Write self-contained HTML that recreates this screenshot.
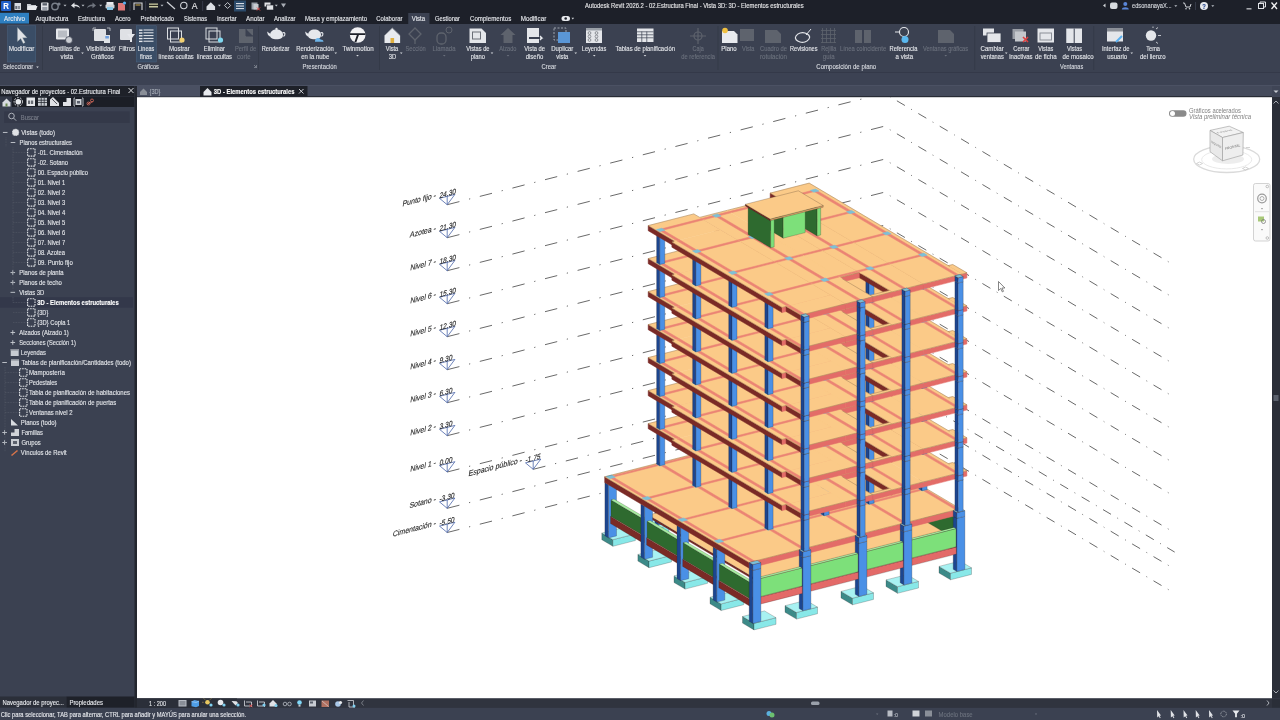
<!DOCTYPE html>
<html><head><meta charset="utf-8"><title>Revit</title>
<style>html,body{margin:0;padding:0;background:#1d2029;overflow:hidden;width:1280px;height:720px}svg{display:block;will-change:transform}text{font-family:"Liberation Sans",sans-serif}</style>
</head><body>
<svg width="1280" height="720" viewBox="0 0 1280 720" font-family="Liberation Sans, sans-serif"><rect width="1280" height="720" fill="#3b4151"/>
<rect x="0.00" y="0.00" width="1280.00" height="24.00" fill="#1d2029" />
<rect x="0.00" y="24.00" width="1280.00" height="48.50" fill="#3b4151" />
<rect x="0.00" y="72.00" width="1280.00" height="1.00" fill="#343949" />
<rect x="0.00" y="73.00" width="1280.00" height="12.00" fill="#3c4253" />
<rect x="0.00" y="85.00" width="1280.00" height="1.00" fill="#4b5163" />
<rect x="0.00" y="86.00" width="1280.00" height="11.00" fill="#444a5b" />
<text x="585.00" y="7.58" font-size="6.60" fill="#e8e8ea" stroke="#e8e8ea" stroke-width="0.12" textLength="218.75" lengthAdjust="spacingAndGlyphs">Autodesk Revit 2026.2 - 02.Estructura Final - Vista 3D: 3D - Elementos estructurales</text>
<rect x="1.00" y="1.00" width="10.00" height="10.00" fill="#1f5fc8" rx="1"/>
<text x="3.20" y="8.57" font-size="8.25" fill="#ffffff" stroke="#ffffff" stroke-width="0.12" font-weight="bold" textLength="5.60" lengthAdjust="spacingAndGlyphs">R</text>
<rect x="14.5" y="3" width="6.5" height="7" fill="#d8dbe0"/><rect x="15.5" y="6" width="1.2" height="3" fill="#3a3f4a"/><rect x="17.5" y="6" width="2.5" height="3" fill="#8a8f98"/>
<path d="M27 4h3.5l1 1h4.5v4.5h-9z" fill="#c8ccd2"/><path d="M28 6h9.5l-1.5 4h-9z" fill="#e8eaee"/>
<rect x="41" y="2.5" width="7.5" height="8" rx="0.8" fill="#e0e2e6"/><rect x="42.5" y="3.2" width="4.5" height="2.3" fill="#5a606c"/><rect x="42.3" y="7" width="5" height="3" fill="#9aa0aa"/>
<circle cx="55" cy="6.5" r="3.2" fill="none" stroke="#7a808a" stroke-width="1.4"/><circle cx="59" cy="4" r="1.6" fill="#7a808a"/>
<path d="M63.5 4.7h3l-1.5 1.8z" fill="#b8bcc4"/>
<path d="M81.5 4.7h3l-1.5 1.8z" fill="#b8bcc4"/>
<path d="M99.2 4.7h3l-1.5 1.8z" fill="#b8bcc4"/>
<path d="M160.5 4.7h3l-1.5 1.8z" fill="#b8bcc4"/>
<path d="M217.9 4.7h3l-1.5 1.8z" fill="#b8bcc4"/>
<path d="M274.8 4.7h3l-1.5 1.8z" fill="#b8bcc4"/>
<path d="M71 5.5l3.5-3v2c3 0 5 1 5.5 4-1.5-2-3-2.3-5.5-2.3v2z" fill="#e0e2e6"/>
<path d="M96 5.5l-3.5-3v2c-3 0-5 1-5.5 4 1.5-2 3-2.3 5.5-2.3v2z" fill="#6f747e"/>
<rect x="106.5" y="2" width="7" height="3" fill="#e8eaee"/><rect x="105.5" y="4.5" width="9" height="4" rx="1" fill="#d0d3d8"/><rect x="107" y="7" width="6" height="3" fill="#8ac8e8"/>
<path d="M118 3h5l2 2v5.5h-7z" fill="#e07878"/><circle cx="124.5" cy="3" r="1.6" fill="#5ab0f0"/>
<rect x="129.60" y="1.00" width="0.80" height="10.00" fill="#3c4150" />
<path d="M134 10V3h8v7" stroke="#d8d8d8" stroke-width="1.1" fill="none"/><path d="M135.5 5h5" stroke="#e8c050" stroke-width="0.9"/>
<rect x="145.30" y="1.00" width="0.80" height="10.00" fill="#3c4150" />
<rect x="149.00" y="3.50" width="9.00" height="4.00" fill="#c8c8a0" />
<rect x="149.00" y="4.80" width="9.00" height="1.20" fill="#2a2a20" />
<path d="M167 2l8 7" stroke="#d0d3d8" stroke-width="1.2"/>
<circle cx="183.8" cy="5.5" r="3.2" stroke="#d0d3d8" stroke-width="1.1" fill="none"/>
<text x="191.85" y="9.36" font-size="9.90" fill="#e8e8ea" stroke="#e8e8ea" stroke-width="0.12" textLength="5.81" lengthAdjust="spacingAndGlyphs">A</text>
<rect x="202.30" y="1.00" width="0.80" height="10.00" fill="#3c4150" />
<path d="M206.5 6.5l4.3-4.3 4.3 4.3v3.5h-8.6z" fill="#dcdfe4"/>
<path d="M227.6 2.5l3 3-3 3-3-3z" stroke="#c0c4ca" stroke-width="1" fill="none"/>
<rect x="234.00" y="0.50" width="12.00" height="11.00" fill="#2b4a6a" />
<rect x="236.00" y="3.00" width="8.00" height="1.10" fill="#d8dce4" />
<rect x="236.00" y="5.50" width="8.00" height="1.10" fill="#d8dce4" />
<rect x="236.00" y="8.00" width="8.00" height="1.10" fill="#d8dce4" />
<rect x="251.5" y="2.5" width="6" height="7" fill="#9aa0aa"/><rect x="253.5" y="4" width="5" height="5.5" fill="#c8ccd2"/><path d="M257 7.5l3 3M260 7.5l-3 3" stroke="#e04848" stroke-width="1"/>
<rect x="264.5" y="2.5" width="6" height="4" fill="#e0e2e6"/><rect x="266.5" y="5" width="7" height="5" fill="#e0e2e6" stroke="#1d2029" stroke-width="0.6"/>
<path d="M281 3.5h5l-2.5 4z" fill="#a8acb4"/>
<path d="M1105.5 3.5v4l-2.5-2z" fill="#d0d3d8"/>
<rect x="1110.00" y="2.50" width="7.50" height="6.50" fill="#d8dbe0" rx="2"/>
<circle cx="1125.3" cy="4" r="2" fill="#5a86d8"/><path d="M1121.8 9.5c0-3 7-3 7 0z" fill="#5a86d8"/>
<text x="1132.00" y="8.46" font-size="6.82" fill="#d8dbe0" stroke="#d8dbe0" stroke-width="0.12" textLength="39.60" lengthAdjust="spacingAndGlyphs">edsonanayaX...</text>
<path d="M1174.3 5.2h3l-1.5 1.8z" fill="#b8bcc4"/>
<path d="M1183 3h1.5l1.5 4h4l1-3" stroke="#d0d3d8" stroke-width="1" fill="none"/><circle cx="1186" cy="8.8" r="0.8" fill="#d0d3d8"/><circle cx="1189.5" cy="8.8" r="0.8" fill="#d0d3d8"/>
<rect x="1195.00" y="2.00" width="0.80" height="8.00" fill="#3c4150" />
<circle cx="1204" cy="6" r="4" fill="#e8eaee"/>
<text x="1202.20" y="8.77" font-size="7.15" fill="#1d3f8a" stroke="#1d3f8a" stroke-width="0.12" font-weight="bold" textLength="3.60" lengthAdjust="spacingAndGlyphs">?</text>
<path d="M1211.3 5.2h3l-1.5 1.8z" fill="#b8bcc4"/>
<rect x="1246.50" y="8.30" width="5.00" height="1.10" fill="#e0e2e6" />
<rect x="1258.5" y="3.5" width="5" height="5" stroke="#e0e2e6" stroke-width="1" fill="none"/><path d="M1260 3.5v-1.5h5.5v5h-1.5" stroke="#e0e2e6" stroke-width="1" fill="none"/>
<path d="M1271.5 2.5l5.5 6.5M1277 2.5l-5.5 6.5" stroke="#f0f0f2" stroke-width="1.3"/>
<rect x="0.00" y="12.80" width="29.00" height="10.80" fill="#2e7fc0" />
<rect x="408.25" y="13.00" width="21.25" height="11.00" fill="#3b4151" />
<text x="4.00" y="20.93" font-size="7.04" fill="#e8eaee" stroke="#e8eaee" stroke-width="0.12" textLength="21.00" lengthAdjust="spacingAndGlyphs">Archivo</text>
<text x="35.50" y="20.93" font-size="7.04" fill="#e8eaee" stroke="#e8eaee" stroke-width="0.12" textLength="33.00" lengthAdjust="spacingAndGlyphs">Arquitectura</text>
<text x="78.00" y="20.93" font-size="7.04" fill="#e8eaee" stroke="#e8eaee" stroke-width="0.12" textLength="27.00" lengthAdjust="spacingAndGlyphs">Estructura</text>
<text x="115.00" y="20.93" font-size="7.04" fill="#e8eaee" stroke="#e8eaee" stroke-width="0.12" textLength="15.50" lengthAdjust="spacingAndGlyphs">Acero</text>
<text x="140.50" y="20.93" font-size="7.04" fill="#e8eaee" stroke="#e8eaee" stroke-width="0.12" textLength="33.50" lengthAdjust="spacingAndGlyphs">Prefabricado</text>
<text x="184.00" y="20.93" font-size="7.04" fill="#e8eaee" stroke="#e8eaee" stroke-width="0.12" textLength="23.00" lengthAdjust="spacingAndGlyphs">Sistemas</text>
<text x="217.00" y="20.93" font-size="7.04" fill="#e8eaee" stroke="#e8eaee" stroke-width="0.12" textLength="19.75" lengthAdjust="spacingAndGlyphs">Insertar</text>
<text x="246.00" y="20.93" font-size="7.04" fill="#e8eaee" stroke="#e8eaee" stroke-width="0.12" textLength="18.50" lengthAdjust="spacingAndGlyphs">Anotar</text>
<text x="274.00" y="20.93" font-size="7.04" fill="#e8eaee" stroke="#e8eaee" stroke-width="0.12" textLength="21.50" lengthAdjust="spacingAndGlyphs">Analizar</text>
<text x="305.00" y="20.93" font-size="7.04" fill="#e8eaee" stroke="#e8eaee" stroke-width="0.12" textLength="62.00" lengthAdjust="spacingAndGlyphs">Masa y emplazamiento</text>
<text x="376.25" y="20.93" font-size="7.04" fill="#e8eaee" stroke="#e8eaee" stroke-width="0.12" textLength="26.25" lengthAdjust="spacingAndGlyphs">Colaborar</text>
<text x="411.75" y="20.93" font-size="7.04" fill="#e8eaee" stroke="#e8eaee" stroke-width="0.12" textLength="13.25" lengthAdjust="spacingAndGlyphs">Vista</text>
<text x="435.00" y="20.93" font-size="7.04" fill="#e8eaee" stroke="#e8eaee" stroke-width="0.12" textLength="25.00" lengthAdjust="spacingAndGlyphs">Gestionar</text>
<text x="470.00" y="20.93" font-size="7.04" fill="#e8eaee" stroke="#e8eaee" stroke-width="0.12" textLength="41.25" lengthAdjust="spacingAndGlyphs">Complementos</text>
<text x="520.75" y="20.93" font-size="7.04" fill="#e8eaee" stroke="#e8eaee" stroke-width="0.12" textLength="25.50" lengthAdjust="spacingAndGlyphs">Modificar</text>
<rect x="561.50" y="16.00" width="8.50" height="5.00" fill="#e8eaee" rx="2.5"/>
<circle cx="565.7" cy="18.5" r="1.3" fill="#1d2029"/>
<path d="M571.5 17.8h2.6l-1.3 1.6z" fill="#d0d3d8"/>
<rect x="7.50" y="25.75" width="28.25" height="36.25" fill="#3a4d66" stroke="#4a6280" stroke-width="0.5"/>
<rect x="136.25" y="25.75" width="20.00" height="36.25" fill="#3a4d66" stroke="#4a6280" stroke-width="0.5"/>
<rect x="42.00" y="26.00" width="0.90" height="44.00" fill="#343a48" />
<rect x="258.00" y="26.00" width="0.90" height="44.00" fill="#343a48" />
<rect x="379.00" y="26.00" width="0.90" height="44.00" fill="#343a48" />
<rect x="717.50" y="26.00" width="0.90" height="44.00" fill="#343a48" />
<rect x="974.25" y="26.00" width="0.90" height="44.00" fill="#343a48" />
<rect x="1093.25" y="26.00" width="0.90" height="44.00" fill="#343a48" />
<text x="8.75" y="51.19" font-size="6.93" fill="#e4e6ea" stroke="#e4e6ea" stroke-width="0.12" textLength="25.75" lengthAdjust="spacingAndGlyphs">Modificar</text>
<text x="48.75" y="51.19" font-size="6.93" fill="#e4e6ea" stroke="#e4e6ea" stroke-width="0.12" textLength="31.25" lengthAdjust="spacingAndGlyphs">Plantillas de</text>
<text x="60.61" y="58.89" font-size="6.93" fill="#e4e6ea" stroke="#e4e6ea" stroke-width="0.12" textLength="12.54" lengthAdjust="spacingAndGlyphs">vista</text>
<text x="86.25" y="51.19" font-size="6.93" fill="#e4e6ea" stroke="#e4e6ea" stroke-width="0.12" textLength="29.25" lengthAdjust="spacingAndGlyphs">Visibilidad/</text>
<text x="91.03" y="58.89" font-size="6.93" fill="#e4e6ea" stroke="#e4e6ea" stroke-width="0.12" textLength="22.70" lengthAdjust="spacingAndGlyphs">Gráficos</text>
<text x="118.75" y="51.19" font-size="6.93" fill="#e4e6ea" stroke="#e4e6ea" stroke-width="0.12" textLength="16.25" lengthAdjust="spacingAndGlyphs">Filtros</text>
<text x="137.75" y="51.19" font-size="6.93" fill="#e4e6ea" stroke="#e4e6ea" stroke-width="0.12" textLength="16.50" lengthAdjust="spacingAndGlyphs">Líneas</text>
<text x="140.00" y="58.89" font-size="6.93" fill="#e4e6ea" stroke="#e4e6ea" stroke-width="0.12" textLength="12.00" lengthAdjust="spacingAndGlyphs">finas</text>
<text x="169.04" y="51.19" font-size="6.93" fill="#e4e6ea" stroke="#e4e6ea" stroke-width="0.12" textLength="20.66" lengthAdjust="spacingAndGlyphs">Mostrar</text>
<text x="158.50" y="58.89" font-size="6.93" fill="#e4e6ea" stroke="#e4e6ea" stroke-width="0.12" textLength="35.25" lengthAdjust="spacingAndGlyphs">líneas ocultas</text>
<text x="203.75" y="51.19" font-size="6.93" fill="#e4e6ea" stroke="#e4e6ea" stroke-width="0.12" textLength="21.25" lengthAdjust="spacingAndGlyphs">Eliminar</text>
<text x="196.75" y="58.89" font-size="6.93" fill="#e4e6ea" stroke="#e4e6ea" stroke-width="0.12" textLength="35.25" lengthAdjust="spacingAndGlyphs">líneas ocultas</text>
<text x="235.00" y="51.19" font-size="6.93" fill="#6b717d" stroke="#6b717d" stroke-width="0.12" textLength="21.25" lengthAdjust="spacingAndGlyphs">Perfil de</text>
<text x="236.97" y="58.89" font-size="6.93" fill="#6b717d" stroke="#6b717d" stroke-width="0.12" textLength="13.55" lengthAdjust="spacingAndGlyphs">corte</text>
<text x="261.75" y="51.19" font-size="6.93" fill="#e4e6ea" stroke="#e4e6ea" stroke-width="0.12" textLength="27.75" lengthAdjust="spacingAndGlyphs">Renderizar</text>
<text x="296.25" y="51.19" font-size="6.93" fill="#e4e6ea" stroke="#e4e6ea" stroke-width="0.12" textLength="37.50" lengthAdjust="spacingAndGlyphs">Renderización</text>
<text x="301.25" y="58.89" font-size="6.93" fill="#e4e6ea" stroke="#e4e6ea" stroke-width="0.12" textLength="28.00" lengthAdjust="spacingAndGlyphs">en la nube</text>
<text x="342.50" y="51.19" font-size="6.93" fill="#e4e6ea" stroke="#e4e6ea" stroke-width="0.12" textLength="31.25" lengthAdjust="spacingAndGlyphs">Twinmotion</text>
<text x="385.75" y="51.19" font-size="6.93" fill="#e4e6ea" stroke="#e4e6ea" stroke-width="0.12" textLength="12.50" lengthAdjust="spacingAndGlyphs">Vista</text>
<text x="388.75" y="58.89" font-size="6.93" fill="#e4e6ea" stroke="#e4e6ea" stroke-width="0.12" textLength="7.50" lengthAdjust="spacingAndGlyphs">3D</text>
<text x="405.50" y="51.19" font-size="6.93" fill="#6b717d" stroke="#6b717d" stroke-width="0.12" textLength="20.25" lengthAdjust="spacingAndGlyphs">Sección</text>
<text x="432.50" y="51.19" font-size="6.93" fill="#6b717d" stroke="#6b717d" stroke-width="0.12" textLength="23.00" lengthAdjust="spacingAndGlyphs">Llamada</text>
<text x="466.25" y="51.19" font-size="6.93" fill="#e4e6ea" stroke="#e4e6ea" stroke-width="0.12" textLength="23.25" lengthAdjust="spacingAndGlyphs">Vistas de</text>
<text x="470.75" y="58.89" font-size="6.93" fill="#e4e6ea" stroke="#e4e6ea" stroke-width="0.12" textLength="14.25" lengthAdjust="spacingAndGlyphs">plano</text>
<text x="499.25" y="51.19" font-size="6.93" fill="#6b717d" stroke="#6b717d" stroke-width="0.12" textLength="17.25" lengthAdjust="spacingAndGlyphs">Alzado</text>
<text x="524.25" y="51.19" font-size="6.93" fill="#e4e6ea" stroke="#e4e6ea" stroke-width="0.12" textLength="20.75" lengthAdjust="spacingAndGlyphs">Vista de</text>
<text x="525.75" y="58.89" font-size="6.93" fill="#e4e6ea" stroke="#e4e6ea" stroke-width="0.12" textLength="17.50" lengthAdjust="spacingAndGlyphs">diseño</text>
<text x="551.25" y="51.19" font-size="6.93" fill="#e4e6ea" stroke="#e4e6ea" stroke-width="0.12" textLength="22.00" lengthAdjust="spacingAndGlyphs">Duplicar</text>
<text x="556.25" y="58.89" font-size="6.93" fill="#e4e6ea" stroke="#e4e6ea" stroke-width="0.12" textLength="12.00" lengthAdjust="spacingAndGlyphs">vista</text>
<text x="581.75" y="51.19" font-size="6.93" fill="#e4e6ea" stroke="#e4e6ea" stroke-width="0.12" textLength="24.50" lengthAdjust="spacingAndGlyphs">Leyendas</text>
<text x="615.50" y="51.19" font-size="6.93" fill="#e4e6ea" stroke="#e4e6ea" stroke-width="0.12" textLength="59.50" lengthAdjust="spacingAndGlyphs">Tablas de planificación</text>
<text x="692.50" y="51.19" font-size="6.93" fill="#6b717d" stroke="#6b717d" stroke-width="0.12" textLength="11.25" lengthAdjust="spacingAndGlyphs">Caja</text>
<text x="681.25" y="58.89" font-size="6.93" fill="#6b717d" stroke="#6b717d" stroke-width="0.12" textLength="33.75" lengthAdjust="spacingAndGlyphs">de referencia</text>
<text x="721.25" y="51.19" font-size="6.93" fill="#e4e6ea" stroke="#e4e6ea" stroke-width="0.12" textLength="15.50" lengthAdjust="spacingAndGlyphs">Plano</text>
<text x="742.00" y="51.19" font-size="6.93" fill="#6b717d" stroke="#6b717d" stroke-width="0.12" textLength="12.50" lengthAdjust="spacingAndGlyphs">Vista</text>
<text x="760.00" y="51.19" font-size="6.93" fill="#6b717d" stroke="#6b717d" stroke-width="0.12" textLength="27.00" lengthAdjust="spacingAndGlyphs">Cuadro de</text>
<text x="760.00" y="58.89" font-size="6.93" fill="#6b717d" stroke="#6b717d" stroke-width="0.12" textLength="27.00" lengthAdjust="spacingAndGlyphs">rotulación</text>
<text x="790.00" y="51.19" font-size="6.93" fill="#e4e6ea" stroke="#e4e6ea" stroke-width="0.12" textLength="27.50" lengthAdjust="spacingAndGlyphs">Revisiones</text>
<text x="821.25" y="51.19" font-size="6.93" fill="#6b717d" stroke="#6b717d" stroke-width="0.12" textLength="15.00" lengthAdjust="spacingAndGlyphs">Rejilla</text>
<text x="822.82" y="58.89" font-size="6.93" fill="#6b717d" stroke="#6b717d" stroke-width="0.12" textLength="11.86" lengthAdjust="spacingAndGlyphs">guía</text>
<text x="840.00" y="51.19" font-size="6.93" fill="#6b717d" stroke="#6b717d" stroke-width="0.12" textLength="46.25" lengthAdjust="spacingAndGlyphs">Línea coincidente</text>
<text x="889.50" y="51.19" font-size="6.93" fill="#e4e6ea" stroke="#e4e6ea" stroke-width="0.12" textLength="28.00" lengthAdjust="spacingAndGlyphs">Referencia</text>
<text x="895.57" y="58.89" font-size="6.93" fill="#e4e6ea" stroke="#e4e6ea" stroke-width="0.12" textLength="17.62" lengthAdjust="spacingAndGlyphs">a vista</text>
<text x="923.00" y="51.19" font-size="6.93" fill="#6b717d" stroke="#6b717d" stroke-width="0.12" textLength="45.00" lengthAdjust="spacingAndGlyphs">Ventanas gráficas</text>
<text x="980.50" y="51.19" font-size="6.93" fill="#e4e6ea" stroke="#e4e6ea" stroke-width="0.12" textLength="23.25" lengthAdjust="spacingAndGlyphs">Cambiar</text>
<text x="980.75" y="58.89" font-size="6.93" fill="#e4e6ea" stroke="#e4e6ea" stroke-width="0.12" textLength="23.00" lengthAdjust="spacingAndGlyphs">ventanas</text>
<text x="1013.25" y="51.19" font-size="6.93" fill="#e4e6ea" stroke="#e4e6ea" stroke-width="0.12" textLength="16.25" lengthAdjust="spacingAndGlyphs">Cerrar</text>
<text x="1009.25" y="58.89" font-size="6.93" fill="#e4e6ea" stroke="#e4e6ea" stroke-width="0.12" textLength="23.25" lengthAdjust="spacingAndGlyphs">inactivas</text>
<text x="1038.25" y="51.19" font-size="6.93" fill="#e4e6ea" stroke="#e4e6ea" stroke-width="0.12" textLength="15.00" lengthAdjust="spacingAndGlyphs">Vistas</text>
<text x="1035.00" y="58.89" font-size="6.93" fill="#e4e6ea" stroke="#e4e6ea" stroke-width="0.12" textLength="21.75" lengthAdjust="spacingAndGlyphs">de ficha</text>
<text x="1067.00" y="51.19" font-size="6.93" fill="#e4e6ea" stroke="#e4e6ea" stroke-width="0.12" textLength="15.00" lengthAdjust="spacingAndGlyphs">Vistas</text>
<text x="1062.54" y="58.89" font-size="6.93" fill="#e4e6ea" stroke="#e4e6ea" stroke-width="0.12" textLength="31.18" lengthAdjust="spacingAndGlyphs">de mosaico</text>
<text x="1102.00" y="51.19" font-size="6.93" fill="#e4e6ea" stroke="#e4e6ea" stroke-width="0.12" textLength="27.50" lengthAdjust="spacingAndGlyphs">Interfaz de</text>
<text x="1107.25" y="58.89" font-size="6.93" fill="#e4e6ea" stroke="#e4e6ea" stroke-width="0.12" textLength="19.99" lengthAdjust="spacingAndGlyphs">usuario</text>
<text x="1146.25" y="51.19" font-size="6.93" fill="#e4e6ea" stroke="#e4e6ea" stroke-width="0.12" textLength="13.75" lengthAdjust="spacingAndGlyphs">Tema</text>
<text x="1140.00" y="58.89" font-size="6.93" fill="#e4e6ea" stroke="#e4e6ea" stroke-width="0.12" textLength="25.50" lengthAdjust="spacingAndGlyphs">del lienzo</text>
<text x="3.00" y="69.09" font-size="6.93" fill="#d8dbe0" stroke="#d8dbe0" stroke-width="0.12" textLength="30.25" lengthAdjust="spacingAndGlyphs">Seleccionar</text>
<text x="137.50" y="69.09" font-size="6.93" fill="#d8dbe0" stroke="#d8dbe0" stroke-width="0.12" textLength="21.50" lengthAdjust="spacingAndGlyphs">Gráficos</text>
<text x="302.50" y="69.09" font-size="6.93" fill="#d8dbe0" stroke="#d8dbe0" stroke-width="0.12" textLength="34.25" lengthAdjust="spacingAndGlyphs">Presentación</text>
<text x="541.50" y="69.09" font-size="6.93" fill="#d8dbe0" stroke="#d8dbe0" stroke-width="0.12" textLength="14.75" lengthAdjust="spacingAndGlyphs">Crear</text>
<text x="816.25" y="69.09" font-size="6.93" fill="#d8dbe0" stroke="#d8dbe0" stroke-width="0.12" textLength="60.00" lengthAdjust="spacingAndGlyphs">Composición de plano</text>
<text x="1060.00" y="69.09" font-size="6.93" fill="#d8dbe0" stroke="#d8dbe0" stroke-width="0.12" textLength="23.25" lengthAdjust="spacingAndGlyphs">Ventanas</text>
<path d="M36.20 66.40h2.6l-1.3 1.5z" fill="#d8dbe0"/>
<path d="M81.20 52.40h2.6l-1.3 1.5z" fill="#d8dbe0"/>
<path d="M334.45 52.40h2.6l-1.3 1.5z" fill="#d8dbe0"/>
<path d="M399.95 52.40h2.6l-1.3 1.5z" fill="#d8dbe0"/>
<path d="M490.70 52.40h2.6l-1.3 1.5z" fill="#d8dbe0"/>
<path d="M574.45 52.40h2.6l-1.3 1.5z" fill="#d8dbe0"/>
<path d="M1004.95 52.40h2.6l-1.3 1.5z" fill="#d8dbe0"/>
<path d="M1130.45 52.40h2.6l-1.3 1.5z" fill="#d8dbe0"/>
<path d="M356.20 54.90h2.6l-1.3 1.5z" fill="#d8dbe0"/>
<path d="M442.95 54.90h2.6l-1.3 1.5z" fill="#6b717d"/>
<path d="M506.70 54.90h2.6l-1.3 1.5z" fill="#6b717d"/>
<path d="M592.95 54.90h2.6l-1.3 1.5z" fill="#d8dbe0"/>
<path d="M643.70 54.90h2.6l-1.3 1.5z" fill="#d8dbe0"/>
<path d="M944.45 54.90h2.6l-1.3 1.5z" fill="#6b717d"/>
<path d="M254 65l2.5 2.5M256.5 65v2.5h-2.5" stroke="#9aa0aa" stroke-width="0.6" fill="none"/>
<path d="M17.5 27.5v14l3.2-3 2.6 5 1.8-1-2.5-4.8h4.4z" fill="#dfe2e6" stroke="#9aa" stroke-width="0.3"/>
<rect x="56" y="28.5" width="13" height="11" fill="#e6e8ec" rx="1"/><rect x="58" y="30.5" width="9" height="7" fill="#b9bdc4"/><circle cx="69" cy="40" r="3.5" fill="#c9ccd2" stroke="#3b4151" stroke-width="0.8"/>
<rect x="94" y="29" width="12" height="12" fill="#dfe1e5" rx="1"/><rect x="104" y="35" width="6" height="8" fill="#dfe2e6"/><rect x="105.3" y="36" width="3.6" height="2.5" fill="#6fa0e0"/>
<path d="M93 28v3M93 28h3M107 28h3v3" stroke="#c8ccd2" stroke-width="0.8" fill="none"/>
<rect x="120" y="29" width="12" height="11" fill="#dfe1e5" rx="1"/><path d="M127 34h8l-3 4v4h-2v-4z" fill="#e6e8ec"/>
<rect x="139.00" y="29.50" width="3.50" height="1.40" fill="#e8eaee" />
<rect x="143.50" y="29.50" width="10.00" height="1.00" fill="#e8eaee" />
<rect x="139.00" y="32.30" width="3.50" height="1.40" fill="#e8eaee" />
<rect x="143.50" y="32.30" width="10.00" height="1.00" fill="#e8eaee" />
<rect x="139.00" y="35.10" width="3.50" height="1.40" fill="#e8eaee" />
<rect x="143.50" y="35.10" width="10.00" height="1.00" fill="#e8eaee" />
<rect x="139.00" y="37.90" width="3.50" height="1.40" fill="#e8eaee" />
<rect x="143.50" y="37.90" width="10.00" height="1.00" fill="#e8eaee" />
<rect x="139.00" y="40.70" width="3.50" height="1.40" fill="#e8eaee" />
<rect x="143.50" y="40.70" width="10.00" height="1.00" fill="#e8eaee" />
<rect x="167.5" y="28" width="11" height="11" fill="none" stroke="#dcdfe3" stroke-width="1"/><rect x="170.5" y="31" width="11" height="11" fill="none" stroke="#dcdfe3" stroke-width="1"/><circle cx="182" cy="40" r="2.6" fill="#f2d070"/>
<rect x="206" y="28" width="11" height="11" fill="none" stroke="#dcdfe3" stroke-width="1"/><rect x="209" y="31" width="11" height="11" fill="none" stroke="#dcdfe3" stroke-width="1"/><circle cx="220.5" cy="40" r="2.6" fill="#7fd8f0"/>
<path d="M239 29h14v14h-14zM246 29v7h7" fill="#5e636d"/><path d="M246 29v7h7" stroke="#3b4151" stroke-width="1" fill="none"/>
<path d="M270 35c0-3.5 3-5.5 6.5-5.5s6.5 2 6.5 5.5c0 3-2.5 4.2-6.5 4.2s-6.5-1.2-6.5-4.2z" fill="#e6e8ec"/><path d="M270.5 34l-3.5-2.5 1 3.5 2.5 2" fill="#e6e8ec"/><path d="M282.5 33c2.5-1.5 3.5 1.5 1 3.5" stroke="#e6e8ec" stroke-width="1.1" fill="none"/><circle cx="276.5" cy="29" r="1.2" fill="#e6e8ec"/>
<path d="M308 35c0-3.5 3-5.5 6.5-5.5s6.5 2 6.5 5.5c0 3-2.5 4.2-6.5 4.2s-6.5-1.2-6.5-4.2z" fill="#e6e8ec"/><path d="M308.5 34l-3.5-2.5 1 3.5 2.5 2" fill="#e6e8ec"/><path d="M320.5 33c2.5-1.5 3.5 1.5 1 3.5" stroke="#e6e8ec" stroke-width="1.1" fill="none"/><path d="M315 41c0-2 1.5-3 3-3 1 0 2 .5 2.5 1.5 1.5 0 3 .7 3 2.2h-8.5z" fill="#6db4e8"/>
<circle cx="357.7" cy="35" r="7.8" fill="#f2f2f4"/><path d="M350 33.2h15.4v1.8h-6.5l-2.5 7h-2l2.5-7h-6.9z" fill="#1d2029"/>
<path d="M384.5 35.5l7.8-7.5 7.8 7.5v7.5h-15.6z" fill="#e8eaee"/><path d="M384.5 35.5l7.8-7.5 7.8 7.5" stroke="#8a8f98" stroke-width="0.8" fill="none"/><rect x="390.5" y="38" width="3.6" height="5" fill="#e0b040"/>
<path d="M415 28l6 6-6 6-6-6z" stroke="#5e636d" stroke-width="1.3" fill="none"/><path d="M415 40v4" stroke="#5e636d" stroke-width="1.3"/>
<rect x="437" y="33" width="9" height="11" rx="4" stroke="#5e636d" stroke-width="1.3" fill="none"/><circle cx="449" cy="30" r="3" stroke="#5e636d" stroke-width="1" fill="none"/>
<path d="M469.5 28.5h12l4.5 4.5v10h-16.5z" fill="#e4e6ea"/><rect x="472.5" y="32" width="8" height="7" fill="none" stroke="#6a6e76" stroke-width="1"/>
<path d="M500.5 35l7.5-7 7.5 7h-3v8h-9v-8z" fill="#5e636d"/>
<rect x="527" y="28" width="12" height="15" fill="#e4e6ea"/><path d="M530 38h12l-2-2M542 38l-2 2" stroke="#e8eaee" stroke-width="1.2" fill="none"/><rect x="529" y="37" width="11" height="2" fill="#3b4151"/>
<rect x="554" y="28" width="12" height="12" fill="none" stroke="#aab0ba" stroke-width="0.9" stroke-dasharray="2 1.5"/><rect x="558" y="32" width="12" height="11" fill="#5a96d6"/>
<rect x="586" y="28" width="16" height="15" fill="#e4e6ea"/><rect x="586" y="28" width="16" height="2.5" fill="#9aa0a8"/>
<circle cx="589.5" cy="33.0" r="1.4" fill="none" stroke="#6a6e76" stroke-width="0.7"/>
<circle cx="589.5" cy="36.5" r="1.4" fill="none" stroke="#6a6e76" stroke-width="0.7"/>
<circle cx="589.5" cy="40.0" r="1.4" fill="none" stroke="#6a6e76" stroke-width="0.7"/>
<circle cx="596.5" cy="33.0" r="1.4" fill="none" stroke="#6a6e76" stroke-width="0.7"/>
<circle cx="596.5" cy="36.5" r="1.4" fill="none" stroke="#6a6e76" stroke-width="0.7"/>
<circle cx="596.5" cy="40.0" r="1.4" fill="none" stroke="#6a6e76" stroke-width="0.7"/>
<rect x="637" y="28.5" width="16.5" height="13.5" fill="#e4e6ea"/>
<rect x="637.00" y="31.50" width="16.50" height="0.70" fill="#3b4151" />
<rect x="637.00" y="34.50" width="16.50" height="0.70" fill="#3b4151" />
<rect x="637.00" y="37.50" width="16.50" height="0.70" fill="#3b4151" />
<rect x="641.50" y="31.50" width="0.70" height="10.50" fill="#3b4151" />
<rect x="646.50" y="31.50" width="0.70" height="10.50" fill="#3b4151" />
<path d="M698 28v16M690 36h16" stroke="#5e636d" stroke-width="1.2"/><circle cx="698" cy="36" r="4" stroke="#5e636d" stroke-width="1.2" fill="none"/>
<path d="M722 31h12l3.5 3.5v8.5h-15.5z" fill="#e8eaee"/><circle cx="725" cy="30.5" r="2.8" fill="#f0c040"/>
<rect x="740" y="29" width="14" height="12" fill="#5e636d"/>
<path d="M765 30h12l4 4v9h-16z" fill="#5e636d"/>
<path d="M796 36c2-3 6-4 9-3s6 3 4 6-6 4-9 3-6-3-4-6z" stroke="#e4e6ea" stroke-width="1.2" fill="none"/><path d="M806 35l5-6" stroke="#e4e6ea" stroke-width="1"/>
<rect x="822.00" y="28.00" width="0.80" height="15.00" fill="#5e636d" />
<rect x="821.00" y="30.00" width="15.00" height="0.80" fill="#5e636d" />
<rect x="826.00" y="28.00" width="0.80" height="15.00" fill="#5e636d" />
<rect x="821.00" y="34.00" width="15.00" height="0.80" fill="#5e636d" />
<rect x="830.00" y="28.00" width="0.80" height="15.00" fill="#5e636d" />
<rect x="821.00" y="38.00" width="15.00" height="0.80" fill="#5e636d" />
<rect x="834.00" y="28.00" width="0.80" height="15.00" fill="#5e636d" />
<rect x="821.00" y="42.00" width="15.00" height="0.80" fill="#5e636d" />
<path d="M855 30h7v13h-7zM864 30h7v13h-7z" fill="#5e636d"/>
<circle cx="904" cy="32" r="4.5" stroke="#e4e6ea" stroke-width="1.1" fill="none"/><path d="M895 32h5" stroke="#e4e6ea" stroke-width="1"/><circle cx="905" cy="39.5" r="3.5" fill="#5ab8f0"/>
<path d="M938 30h12l4 4v9h-16z" fill="#5e636d"/>
<rect x="983" y="28.5" width="11" height="7" fill="#e4e6ea"/><rect x="987" y="33" width="14" height="9.5" fill="#e4e6ea" stroke="#3b4151" stroke-width="0.8"/>
<rect x="1012.5" y="29" width="11" height="10" fill="#9a9ea6"/><rect x="1015" y="31.5" width="11" height="10" fill="#c4c7cc"/><path d="M1023 37l5 5M1028 37l-5 5" stroke="#e04040" stroke-width="1.6"/>
<rect x="1037.5" y="28.5" width="16.5" height="14" fill="#e4e6ea"/><rect x="1039.5" y="32.5" width="12.5" height="8" fill="#8a8e96"/><rect x="1040.5" y="33.5" width="10.5" height="6" fill="#e4e6ea"/>
<rect x="1066.25" y="28.5" width="15.75" height="14.5" fill="#e4e6ea"/><rect x="1073.7" y="28.5" width="1" height="14.5" fill="#3b4151"/>
<rect x="1107" y="28.5" width="16" height="13" fill="#e4e6ea"/><rect x="1107" y="28.5" width="16" height="3" fill="#8a8e96"/><path d="M1116 42l6-6" stroke="#5ab0f0" stroke-width="2"/>
<circle cx="1151" cy="35.5" r="5.2" fill="#e4e6ea"/><path d="M1156 29l2-1.5M1158 35.5h3M1156 42l2 1.5M1153 28v-1.5" stroke="#e4e6ea" stroke-width="0.8"/>
<rect x="0.00" y="86.00" width="134.50" height="10.50" fill="#1e2129" />
<text x="1.20" y="93.66" font-size="6.82" fill="#eceef2" stroke="#eceef2" stroke-width="0.12" textLength="119.10" lengthAdjust="spacingAndGlyphs">Navegador de proyectos - 02.Estructura Final</text>
<path d="M128.5 88l5 5M133.5 88l-5 5" stroke="#e0e2e6" stroke-width="1"/>
<rect x="0.00" y="96.50" width="134.50" height="10.50" fill="#1b1e26" />
<rect x="0.00" y="96.50" width="12.00" height="10.50" fill="#353a48" />
<path d="M2.5 102.5l4-4 4 4v4h-8z" fill="#d8dbe0"/><rect x="5.5" y="103.5" width="2" height="3" fill="#6a8a50"/>
<circle cx="18.3" cy="101.8" r="2.8" fill="#e8eaee"/><circle cx="18.3" cy="101.8" r="4.2" fill="none" stroke="#e0e2e6" stroke-width="1" stroke-dasharray="1.8 1.2"/>
<rect x="26.50" y="97.50" width="8.50" height="8.50" fill="#e6e8ec" />
<rect x="28.00" y="100.50" width="2.20" height="3.50" fill="#6a6e76" />
<rect x="31.00" y="100.50" width="2.20" height="3.50" fill="#6a6e76" />
<rect x="38.00" y="97.80" width="9.00" height="8.00" fill="#c8ccd2" />
<rect x="38.00" y="99.80" width="9.00" height="0.70" fill="#1b1e26" />
<rect x="38.00" y="102.30" width="9.00" height="0.70" fill="#1b1e26" />
<rect x="40.80" y="97.80" width="0.70" height="8.00" fill="#1b1e26" />
<rect x="43.80" y="97.80" width="0.70" height="8.00" fill="#1b1e26" />
<path d="M50 106v-6.5l3-2.5 6 6v3z" fill="#e0e2e6"/><path d="M52 99l5 5" stroke="#1b1e26" stroke-width="0.7"/>
<rect x="63.00" y="98.00" width="8.00" height="8.00" fill="#e0e2e6" />
<rect x="63.00" y="98.00" width="3.50" height="4.00" fill="#1b1e26" />
<path d="M75 98h-1v8h1M82 98h1v8h-1" stroke="#c8ccd2" stroke-width="0.9" fill="none"/><rect x="75.5" y="99" width="6" height="6" fill="#d0d3d8"/><rect x="77" y="101" width="3" height="2.5" fill="#5a606c"/>
<path d="M87.5 104.5l2.5-2.5M90 103.5l2.5-2.5" stroke="#d86a5a" stroke-width="1"/><circle cx="88.5" cy="103.5" r="1.5" fill="none" stroke="#d86a5a" stroke-width="0.8"/><circle cx="92" cy="100.5" r="1.5" fill="none" stroke="#d86a5a" stroke-width="0.8"/>
<rect x="0.00" y="107.00" width="134.50" height="589.50" fill="#3b4151" />
<rect x="4.20" y="111.40" width="125.50" height="11.60" fill="#343949" />
<circle cx="11.5" cy="116" r="2.8" stroke="#b8bcc4" stroke-width="0.9" fill="none"/><path d="M13.5 118l2.7 2.7" stroke="#b8bcc4" stroke-width="0.9"/>
<text x="20.75" y="119.58" font-size="6.60" fill="#7a7f8a" stroke="#7a7f8a" stroke-width="0.12" textLength="18.25" lengthAdjust="spacingAndGlyphs">Buscar</text>
<circle cx="15.6" cy="132.4" r="3.6" fill="#e0e2e6" stroke="#3b4151" stroke-width="0.6" stroke-dasharray="1.5 1"/>
<rect x="2.90" y="131.95" width="4.60" height="0.90" fill="#c8ccd2" />
<text x="21.20" y="134.86" font-size="6.82" fill="#e4e6ea" stroke="#e4e6ea" stroke-width="0.12" textLength="33.80" lengthAdjust="spacingAndGlyphs">Vistas (todo)</text>
<rect x="10.70" y="142.05" width="4.60" height="0.90" fill="#c8ccd2" />
<text x="19.60" y="144.96" font-size="6.82" fill="#e4e6ea" stroke="#e4e6ea" stroke-width="0.12" textLength="52.40" lengthAdjust="spacingAndGlyphs">Planos estructurales</text>
<path d="M13.0 152.4H27.0" stroke="#5a606c" stroke-width="0.6" stroke-dasharray="0.8 0.8"/>
<rect x="27.6" y="148.7" width="7.4" height="7.4" fill="none" stroke="#e2e4e8" stroke-width="1.1" stroke-dasharray="1.6 0.9"/>
<text x="37.70" y="154.86" font-size="6.82" fill="#e4e6ea" stroke="#e4e6ea" stroke-width="0.12" textLength="44.80" lengthAdjust="spacingAndGlyphs">-01. Cimentación</text>
<path d="M13.0 162.4H27.0" stroke="#5a606c" stroke-width="0.6" stroke-dasharray="0.8 0.8"/>
<rect x="27.6" y="158.7" width="7.4" height="7.4" fill="none" stroke="#e2e4e8" stroke-width="1.1" stroke-dasharray="1.6 0.9"/>
<text x="37.70" y="164.86" font-size="6.82" fill="#e4e6ea" stroke="#e4e6ea" stroke-width="0.12" textLength="30.30" lengthAdjust="spacingAndGlyphs">-02. Sotano</text>
<path d="M13.0 172.4H27.0" stroke="#5a606c" stroke-width="0.6" stroke-dasharray="0.8 0.8"/>
<rect x="27.6" y="168.7" width="7.4" height="7.4" fill="none" stroke="#e2e4e8" stroke-width="1.1" stroke-dasharray="1.6 0.9"/>
<text x="37.70" y="174.86" font-size="6.82" fill="#e4e6ea" stroke="#e4e6ea" stroke-width="0.12" textLength="50.30" lengthAdjust="spacingAndGlyphs">00. Espacio público</text>
<path d="M13.0 182.4H27.0" stroke="#5a606c" stroke-width="0.6" stroke-dasharray="0.8 0.8"/>
<rect x="27.6" y="178.7" width="7.4" height="7.4" fill="none" stroke="#e2e4e8" stroke-width="1.1" stroke-dasharray="1.6 0.9"/>
<text x="37.70" y="184.86" font-size="6.82" fill="#e4e6ea" stroke="#e4e6ea" stroke-width="0.12" textLength="27.60" lengthAdjust="spacingAndGlyphs">01. Nivel 1</text>
<path d="M13.0 192.4H27.0" stroke="#5a606c" stroke-width="0.6" stroke-dasharray="0.8 0.8"/>
<rect x="27.6" y="188.7" width="7.4" height="7.4" fill="none" stroke="#e2e4e8" stroke-width="1.1" stroke-dasharray="1.6 0.9"/>
<text x="37.70" y="194.86" font-size="6.82" fill="#e4e6ea" stroke="#e4e6ea" stroke-width="0.12" textLength="27.60" lengthAdjust="spacingAndGlyphs">02. Nivel 2</text>
<path d="M13.0 202.4H27.0" stroke="#5a606c" stroke-width="0.6" stroke-dasharray="0.8 0.8"/>
<rect x="27.6" y="198.7" width="7.4" height="7.4" fill="none" stroke="#e2e4e8" stroke-width="1.1" stroke-dasharray="1.6 0.9"/>
<text x="37.70" y="204.86" font-size="6.82" fill="#e4e6ea" stroke="#e4e6ea" stroke-width="0.12" textLength="27.60" lengthAdjust="spacingAndGlyphs">03. Nivel 3</text>
<path d="M13.0 212.4H27.0" stroke="#5a606c" stroke-width="0.6" stroke-dasharray="0.8 0.8"/>
<rect x="27.6" y="208.7" width="7.4" height="7.4" fill="none" stroke="#e2e4e8" stroke-width="1.1" stroke-dasharray="1.6 0.9"/>
<text x="37.70" y="214.86" font-size="6.82" fill="#e4e6ea" stroke="#e4e6ea" stroke-width="0.12" textLength="27.60" lengthAdjust="spacingAndGlyphs">04. Nivel 4</text>
<path d="M13.0 222.4H27.0" stroke="#5a606c" stroke-width="0.6" stroke-dasharray="0.8 0.8"/>
<rect x="27.6" y="218.7" width="7.4" height="7.4" fill="none" stroke="#e2e4e8" stroke-width="1.1" stroke-dasharray="1.6 0.9"/>
<text x="37.70" y="224.86" font-size="6.82" fill="#e4e6ea" stroke="#e4e6ea" stroke-width="0.12" textLength="27.60" lengthAdjust="spacingAndGlyphs">05. Nivel 5</text>
<path d="M13.0 232.4H27.0" stroke="#5a606c" stroke-width="0.6" stroke-dasharray="0.8 0.8"/>
<rect x="27.6" y="228.7" width="7.4" height="7.4" fill="none" stroke="#e2e4e8" stroke-width="1.1" stroke-dasharray="1.6 0.9"/>
<text x="37.70" y="234.86" font-size="6.82" fill="#e4e6ea" stroke="#e4e6ea" stroke-width="0.12" textLength="27.60" lengthAdjust="spacingAndGlyphs">06. Nivel 6</text>
<path d="M13.0 242.4H27.0" stroke="#5a606c" stroke-width="0.6" stroke-dasharray="0.8 0.8"/>
<rect x="27.6" y="238.7" width="7.4" height="7.4" fill="none" stroke="#e2e4e8" stroke-width="1.1" stroke-dasharray="1.6 0.9"/>
<text x="37.70" y="244.86" font-size="6.82" fill="#e4e6ea" stroke="#e4e6ea" stroke-width="0.12" textLength="27.60" lengthAdjust="spacingAndGlyphs">07. Nivel 7</text>
<path d="M13.0 252.4H27.0" stroke="#5a606c" stroke-width="0.6" stroke-dasharray="0.8 0.8"/>
<rect x="27.6" y="248.7" width="7.4" height="7.4" fill="none" stroke="#e2e4e8" stroke-width="1.1" stroke-dasharray="1.6 0.9"/>
<text x="37.70" y="254.86" font-size="6.82" fill="#e4e6ea" stroke="#e4e6ea" stroke-width="0.12" textLength="27.30" lengthAdjust="spacingAndGlyphs">08. Azotea</text>
<path d="M13.0 262.4H27.0" stroke="#5a606c" stroke-width="0.6" stroke-dasharray="0.8 0.8"/>
<rect x="27.6" y="258.7" width="7.4" height="7.4" fill="none" stroke="#e2e4e8" stroke-width="1.1" stroke-dasharray="1.6 0.9"/>
<text x="37.70" y="264.86" font-size="6.82" fill="#e4e6ea" stroke="#e4e6ea" stroke-width="0.12" textLength="35.10" lengthAdjust="spacingAndGlyphs">09. Punto fijo</text>
<rect x="10.50" y="272.15" width="4.60" height="0.90" fill="#c8ccd2" />
<rect x="12.35" y="270.30" width="0.90" height="4.60" fill="#c8ccd2" />
<text x="19.30" y="275.06" font-size="6.82" fill="#e4e6ea" stroke="#e4e6ea" stroke-width="0.12" textLength="44.30" lengthAdjust="spacingAndGlyphs">Planos de planta</text>
<rect x="10.50" y="281.95" width="4.60" height="0.90" fill="#c8ccd2" />
<rect x="12.35" y="280.10" width="0.90" height="4.60" fill="#c8ccd2" />
<text x="19.30" y="284.86" font-size="6.82" fill="#e4e6ea" stroke="#e4e6ea" stroke-width="0.12" textLength="42.50" lengthAdjust="spacingAndGlyphs">Planos de techo</text>
<rect x="10.50" y="291.85" width="4.60" height="0.90" fill="#c8ccd2" />
<text x="19.30" y="294.76" font-size="6.82" fill="#e4e6ea" stroke="#e4e6ea" stroke-width="0.12" textLength="25.00" lengthAdjust="spacingAndGlyphs">Vistas 3D</text>
<rect x="0.00" y="297.20" width="133.00" height="10.40" fill="#33384a" />
<path d="M13.0 302.5H27.0" stroke="#5a606c" stroke-width="0.6" stroke-dasharray="0.8 0.8"/>
<rect x="27.6" y="298.8" width="7.4" height="7.4" fill="none" stroke="#e2e4e8" stroke-width="1.1" stroke-dasharray="1.6 0.9"/>
<text x="37.30" y="304.96" font-size="6.82" fill="#ffffff" stroke="#ffffff" stroke-width="0.12" font-weight="bold" textLength="81.40" lengthAdjust="spacingAndGlyphs">3D - Elementos estructurales</text>
<path d="M13.0 312.4H27.0" stroke="#5a606c" stroke-width="0.6" stroke-dasharray="0.8 0.8"/>
<rect x="27.6" y="308.7" width="7.4" height="7.4" fill="none" stroke="#e2e4e8" stroke-width="1.1" stroke-dasharray="1.6 0.9"/>
<text x="37.30" y="314.86" font-size="6.82" fill="#e4e6ea" stroke="#e4e6ea" stroke-width="0.12" textLength="11.00" lengthAdjust="spacingAndGlyphs">{3D}</text>
<path d="M13.0 322.5H27.0" stroke="#5a606c" stroke-width="0.6" stroke-dasharray="0.8 0.8"/>
<rect x="27.6" y="318.8" width="7.4" height="7.4" fill="none" stroke="#e2e4e8" stroke-width="1.1" stroke-dasharray="1.6 0.9"/>
<text x="37.30" y="324.96" font-size="6.82" fill="#e4e6ea" stroke="#e4e6ea" stroke-width="0.12" textLength="33.00" lengthAdjust="spacingAndGlyphs">{3D} Copia 1</text>
<rect x="10.50" y="332.05" width="4.60" height="0.90" fill="#c8ccd2" />
<rect x="12.35" y="330.20" width="0.90" height="4.60" fill="#c8ccd2" />
<text x="19.30" y="334.96" font-size="6.82" fill="#e4e6ea" stroke="#e4e6ea" stroke-width="0.12" textLength="49.50" lengthAdjust="spacingAndGlyphs">Alzados (Alzado 1)</text>
<rect x="10.50" y="342.05" width="4.60" height="0.90" fill="#c8ccd2" />
<rect x="12.35" y="340.20" width="0.90" height="4.60" fill="#c8ccd2" />
<text x="19.30" y="344.96" font-size="6.82" fill="#e4e6ea" stroke="#e4e6ea" stroke-width="0.12" textLength="56.50" lengthAdjust="spacingAndGlyphs">Secciones (Sección 1)</text>
<rect x="10.7" y="349.0" width="8" height="7" fill="#c8ccd2"/><rect x="10.7" y="349.0" width="8" height="1.6" fill="#8a8f98"/>
<text x="20.80" y="354.96" font-size="6.82" fill="#e4e6ea" stroke="#e4e6ea" stroke-width="0.12" textLength="25.10" lengthAdjust="spacingAndGlyphs">Leyendas</text>
<rect x="2.30" y="362.05" width="4.60" height="0.90" fill="#c8ccd2" />
<rect x="11.0" y="359.0" width="8" height="7" fill="#c8ccd2"/><rect x="11.0" y="359.0" width="8" height="1.6" fill="#8a8f98"/>
<text x="21.40" y="364.96" font-size="6.82" fill="#e4e6ea" stroke="#e4e6ea" stroke-width="0.12" textLength="109.50" lengthAdjust="spacingAndGlyphs">Tablas de planificación/Cantidades (todo)</text>
<path d="M5.0 372.5H19.0" stroke="#5a606c" stroke-width="0.6" stroke-dasharray="0.8 0.8"/>
<rect x="19.6" y="368.8" width="7.4" height="7.4" fill="none" stroke="#e2e4e8" stroke-width="1.1" stroke-dasharray="1.6 0.9"/>
<text x="29.00" y="374.96" font-size="6.82" fill="#e4e6ea" stroke="#e4e6ea" stroke-width="0.12" textLength="35.80" lengthAdjust="spacingAndGlyphs">Mampostería</text>
<path d="M5.0 382.5H19.0" stroke="#5a606c" stroke-width="0.6" stroke-dasharray="0.8 0.8"/>
<rect x="19.6" y="378.8" width="7.4" height="7.4" fill="none" stroke="#e2e4e8" stroke-width="1.1" stroke-dasharray="1.6 0.9"/>
<text x="29.00" y="384.96" font-size="6.82" fill="#e4e6ea" stroke="#e4e6ea" stroke-width="0.12" textLength="28.20" lengthAdjust="spacingAndGlyphs">Pedestales</text>
<path d="M5.0 392.5H19.0" stroke="#5a606c" stroke-width="0.6" stroke-dasharray="0.8 0.8"/>
<rect x="19.6" y="388.8" width="7.4" height="7.4" fill="none" stroke="#e2e4e8" stroke-width="1.1" stroke-dasharray="1.6 0.9"/>
<text x="29.00" y="394.96" font-size="6.82" fill="#e4e6ea" stroke="#e4e6ea" stroke-width="0.12" textLength="101.00" lengthAdjust="spacingAndGlyphs">Tabla de planificación de habitaciones</text>
<path d="M5.0 402.5H19.0" stroke="#5a606c" stroke-width="0.6" stroke-dasharray="0.8 0.8"/>
<rect x="19.6" y="398.8" width="7.4" height="7.4" fill="none" stroke="#e2e4e8" stroke-width="1.1" stroke-dasharray="1.6 0.9"/>
<text x="29.00" y="404.96" font-size="6.82" fill="#e4e6ea" stroke="#e4e6ea" stroke-width="0.12" textLength="87.20" lengthAdjust="spacingAndGlyphs">Tabla de planificación de puertas</text>
<path d="M5.0 412.5H19.0" stroke="#5a606c" stroke-width="0.6" stroke-dasharray="0.8 0.8"/>
<rect x="19.6" y="408.8" width="7.4" height="7.4" fill="none" stroke="#e2e4e8" stroke-width="1.1" stroke-dasharray="1.6 0.9"/>
<text x="29.00" y="414.96" font-size="6.82" fill="#e4e6ea" stroke="#e4e6ea" stroke-width="0.12" textLength="43.50" lengthAdjust="spacingAndGlyphs">Ventanas nivel 2</text>
<path d="M11 425.5v-6.5l7 6.5z" fill="#d8dbe0"/>
<text x="20.80" y="424.96" font-size="6.82" fill="#e4e6ea" stroke="#e4e6ea" stroke-width="0.12" textLength="35.80" lengthAdjust="spacingAndGlyphs">Planos (todo)</text>
<rect x="2.30" y="432.05" width="4.60" height="0.90" fill="#c8ccd2" />
<rect x="4.15" y="430.20" width="0.90" height="4.60" fill="#c8ccd2" />
<rect x="11.00" y="429.00" width="8.00" height="7.00" fill="#d0d3d8" />
<rect x="11.00" y="429.00" width="3.50" height="3.50" fill="#3b4151" />
<text x="21.40" y="434.96" font-size="6.82" fill="#e4e6ea" stroke="#e4e6ea" stroke-width="0.12" textLength="21.40" lengthAdjust="spacingAndGlyphs">Familias</text>
<rect x="2.30" y="442.05" width="4.60" height="0.90" fill="#c8ccd2" />
<rect x="4.15" y="440.20" width="0.90" height="4.60" fill="#c8ccd2" />
<rect x="11.00" y="439.00" width="8.00" height="7.00" fill="#c8ccd2" />
<rect x="13.00" y="441.00" width="4.00" height="3.00" fill="#5a606c" />
<text x="21.40" y="444.96" font-size="6.82" fill="#e4e6ea" stroke="#e4e6ea" stroke-width="0.12" textLength="19.30" lengthAdjust="spacingAndGlyphs">Grupos</text>
<path d="M11.5 455.5l6-5" stroke="#d8744a" stroke-width="1.5"/>
<text x="20.80" y="454.96" font-size="6.82" fill="#e4e6ea" stroke="#e4e6ea" stroke-width="0.12" textLength="45.90" lengthAdjust="spacingAndGlyphs">Vínculos de Revit</text>
<path d="M6 137.5V147M13 147.5V292M13 297V302.5M5 367V452" stroke="#5a606c" stroke-width="0.6" stroke-dasharray="0.8 0.8"/>
<rect x="0.00" y="696.50" width="66.40" height="11.30" fill="#2b2f39" />
<rect x="66.40" y="696.50" width="68.30" height="11.30" fill="#1e2129" />
<text x="2.50" y="705.06" font-size="6.82" fill="#e8eaee" stroke="#e8eaee" stroke-width="0.12" textLength="61.50" lengthAdjust="spacingAndGlyphs">Navegador de proyec...</text>
<text x="69.40" y="705.06" font-size="6.82" fill="#e8eaee" stroke="#e8eaee" stroke-width="0.12" textLength="33.60" lengthAdjust="spacingAndGlyphs">Propiedades</text>
<rect x="134.50" y="86.00" width="2.50" height="622.00" fill="#23262e" />
<rect x="0.00" y="707.80" width="1280.00" height="12.20" fill="#3b4151" />
<text x="0.80" y="716.86" font-size="6.82" fill="#e8eaee" stroke="#e8eaee" stroke-width="0.12" textLength="245.20" lengthAdjust="spacingAndGlyphs">Clic para seleccionar, TAB para alternar, CTRL para añadir y MAYÚS para anular una selección.</text>
<circle cx="769" cy="713.5" r="2.5" fill="#5bb0e0"/><circle cx="772" cy="715" r="2.5" fill="#6cc070"/>
<path d="M876 713.5h2.4l-1.2 1.4z" fill="#6b717d"/>
<rect x="887.50" y="710.50" width="5.00" height="6.00" fill="#b8bcc4" />
<text x="893.50" y="717.02" font-size="6.16" fill="#b8bcc4" stroke="#b8bcc4" stroke-width="0.12" textLength="4.50" lengthAdjust="spacingAndGlyphs">:0</text>
<rect x="912.50" y="710.50" width="7.00" height="6.00" fill="#d0d3d8" />
<rect x="925.00" y="710.50" width="7.00" height="6.00" fill="#8a8f98" />
<text x="938.60" y="717.18" font-size="6.60" fill="#6b717d" stroke="#6b717d" stroke-width="0.12" textLength="34.10" lengthAdjust="spacingAndGlyphs">Modelo base</text>
<path d="M1034.8 713.5h2.4l-1.2 1.4z" fill="#6b717d"/>
<path d="M1157.0 710l4 5.5-1.5.2 1.2 2-0.8.5-1.2-2-1.5 1.2z" fill="#e0e2e6"/>
<path d="M1170.7 710l4 5.5-1.5.2 1.2 2-0.8.5-1.2-2-1.5 1.2z" fill="#e0e2e6"/>
<path d="M1183.5 710l4 5.5-1.5.2 1.2 2-0.8.5-1.2-2-1.5 1.2z" fill="#e0e2e6"/>
<path d="M1195.7 710l4 5.5-1.5.2 1.2 2-0.8.5-1.2-2-1.5 1.2z" fill="#e0e2e6"/>
<path d="M1209.0 710l4 5.5-1.5.2 1.2 2-0.8.5-1.2-2-1.5 1.2z" fill="#e0e2e6"/>
<circle cx="1223.6" cy="714" r="2.8" fill="none" stroke="#c0c4ca" stroke-width="0.7" stroke-dasharray="1 0.7"/>
<path d="M1232.5 710.5h7l-2.6 3.2v3.5h-1.8v-3.5z" fill="#e8eaee"/>
<text x="1240.50" y="717.72" font-size="6.16" fill="#e0e2e6" stroke="#e0e2e6" stroke-width="0.12" textLength="4.50" lengthAdjust="spacingAndGlyphs">:0</text>
<rect x="137.00" y="97.00" width="1135.00" height="601.50" fill="#ffffff" />
<clipPath id="cv"><rect x="137" y="97.2" width="1135" height="601.2"/></clipPath><g clip-path="url(#cv)">
<path d="M447.2 204.7L459.4 201.6M469.0 199.1L470.2 198.8M479.8 196.4L492.0 193.3M501.6 190.8L502.8 190.5M512.4 188.1L524.6 184.9M534.2 182.5L535.4 182.2M545.0 179.7L557.2 176.6M566.8 174.2L568.0 173.9M577.6 171.4L589.8 168.3M599.4 165.9L600.6 165.6M610.2 163.1L622.4 160.0M632.0 157.6L633.2 157.3M642.8 154.8L655.0 151.7M664.6 149.2L665.8 148.9M675.4 146.5L687.6 143.4M697.2 140.9L698.4 140.6M708.0 138.2L720.2 135.1M729.8 132.6L731.0 132.3M740.6 129.9L752.8 126.8M762.4 124.3L763.6 124.0M773.2 121.6L785.4 118.4M795.0 116.0L796.2 115.7M805.8 113.2L818.0 110.1M827.6 107.7L828.8 107.4M838.4 104.9L850.6 101.8M860.2 99.4L861.4 99.1M871.0 96.6L883.2 93.5M889.8 96.6L890.6 97.1M896.9 100.8L904.9 105.5M911.2 109.3L912.0 109.7M918.3 113.5L926.3 118.2M932.6 122.0L933.4 122.4M939.7 126.2L947.7 130.9M954.0 134.6L954.7 135.1M961.0 138.8L969.0 143.6M975.3 147.3L976.1 147.8M982.4 151.5L990.4 156.3M996.7 160.0L997.5 160.5M1003.8 164.2L1011.8 168.9M1018.1 172.7L1018.9 173.1M1025.2 176.9L1033.2 181.6M1039.5 185.4L1040.3 185.8M1046.6 189.6L1054.6 194.3M1060.9 198.0L1061.7 198.5M1068.0 202.2L1076.0 207.0M1082.3 210.7L1083.1 211.2M1089.4 214.9L1097.4 219.7M1103.7 223.4L1104.4 223.9M1110.7 227.6L1118.7 232.4M1125.0 236.1L1125.8 236.6M1132.1 240.3L1140.1 245.0M1146.4 248.8L1147.2 249.2M1153.5 253.0L1161.5 257.7M1167.8 261.4L1168.6 261.9" stroke="#6a6a6a" stroke-width="1.0" fill="none"/>
<path d="M439.5 198.3L454.9 194.4L447.2 204.7ZM447.2 204.7L447.2 196.3" stroke="#4a64a8" stroke-width="0.8" fill="none" stroke-linejoin="round"/>
<text transform="matrix(1 -0.2550 -0.15 1 439.16 198.14)" x="0" y="0" font-size="7.84" fill="#262626" textLength="16.64" lengthAdjust="spacingAndGlyphs" stroke="#262626" stroke-width="0.12">24.30</text>
<text transform="matrix(1 -0.2550 -0.15 1 402.20 206.47)" x="0" y="0" font-size="8.05" fill="#262626" textLength="33.46" lengthAdjust="spacingAndGlyphs" stroke="#262626" stroke-width="0.12">Punto fijo -</text>
<path d="M447.2 237.7L459.4 234.6M469.0 232.1L470.2 231.8M479.8 229.4L492.0 226.3M501.6 223.8L502.8 223.5M512.4 221.1L524.6 217.9M534.2 215.5L535.4 215.2M545.0 212.7L557.2 209.6M566.8 207.2L568.0 206.9M577.6 204.4L589.8 201.3M599.4 198.9L600.6 198.6M610.2 196.1L622.4 193.0M632.0 190.6L633.2 190.3M642.8 187.8L655.0 184.7M664.6 182.2L665.8 181.9M675.4 179.5L687.6 176.4M697.2 173.9L698.4 173.6M708.0 171.2L720.2 168.1M729.8 165.6L731.0 165.3M740.6 162.9L752.8 159.8M762.4 157.3L763.6 157.0M773.2 154.6L785.4 151.4M795.0 149.0L796.2 148.7M805.8 146.2L818.0 143.1M827.6 140.7L828.8 140.4M838.4 137.9L850.6 134.8M860.2 132.4L861.4 132.1M871.0 129.6L883.2 126.5M889.8 129.6L890.6 130.1M896.9 133.8L904.9 138.5M911.2 142.3L912.0 142.7M918.3 146.5L926.3 151.2M932.6 155.0L933.4 155.4M939.7 159.2L947.7 163.9M954.0 167.6L954.7 168.1M961.0 171.8L969.0 176.6M975.3 180.3L976.1 180.8M982.4 184.5L990.4 189.3M996.7 193.0L997.5 193.5M1003.8 197.2L1011.8 201.9M1018.1 205.7L1018.9 206.1M1025.2 209.9L1033.2 214.6M1039.5 218.4L1040.3 218.8M1046.6 222.6L1054.6 227.3M1060.9 231.0L1061.7 231.5M1068.0 235.2L1076.0 240.0M1082.3 243.7L1083.1 244.2M1089.4 247.9L1097.4 252.7M1103.7 256.4L1104.4 256.9M1110.7 260.6L1118.7 265.4M1125.0 269.1L1125.8 269.6M1132.1 273.3L1140.1 278.0M1146.4 281.8L1147.2 282.2M1153.5 286.0L1161.5 290.7M1167.8 294.4L1168.6 294.9" stroke="#6a6a6a" stroke-width="1.0" fill="none"/>
<path d="M439.5 231.3L454.9 227.4L447.2 237.7ZM447.2 237.7L447.2 229.3" stroke="#4a64a8" stroke-width="0.8" fill="none" stroke-linejoin="round"/>
<text transform="matrix(1 -0.2550 -0.15 1 439.16 231.14)" x="0" y="0" font-size="7.84" fill="#262626" textLength="16.64" lengthAdjust="spacingAndGlyphs" stroke="#262626" stroke-width="0.12">21.30</text>
<text transform="matrix(1 -0.2550 -0.15 1 409.59 237.58)" x="0" y="0" font-size="8.05" fill="#262626" textLength="26.07" lengthAdjust="spacingAndGlyphs" stroke="#262626" stroke-width="0.12">Azotea -</text>
<path d="M447.2 270.7L459.4 267.6M469.0 265.1L470.2 264.8M479.8 262.4L492.0 259.3M501.6 256.8L502.8 256.5M512.4 254.1L524.6 250.9M534.2 248.5L535.4 248.2M545.0 245.7L557.2 242.6M566.8 240.2L568.0 239.9M577.6 237.4L589.8 234.3M599.4 231.9L600.6 231.6M610.2 229.1L622.4 226.0M632.0 223.6L633.2 223.3M642.8 220.8L655.0 217.7M664.6 215.2L665.8 214.9M675.4 212.5L687.6 209.4M697.2 206.9L698.4 206.6M708.0 204.2L720.2 201.1M729.8 198.6L731.0 198.3M740.6 195.9L752.8 192.8M762.4 190.3L763.6 190.0M773.2 187.6L785.4 184.4M795.0 182.0L796.2 181.7M805.8 179.2L818.0 176.1M827.6 173.7L828.8 173.4M838.4 170.9L850.6 167.8M860.2 165.4L861.4 165.1M871.0 162.6L883.2 159.5M889.8 162.6L890.6 163.1M896.9 166.8L904.9 171.5M911.2 175.3L912.0 175.7M918.3 179.5L926.3 184.2M932.6 188.0L933.4 188.4M939.7 192.2L947.7 196.9M954.0 200.6L954.7 201.1M961.0 204.8L969.0 209.6M975.3 213.3L976.1 213.8M982.4 217.5L990.4 222.3M996.7 226.0L997.5 226.5M1003.8 230.2L1011.8 234.9M1018.1 238.7L1018.9 239.1M1025.2 242.9L1033.2 247.6M1039.5 251.4L1040.3 251.8M1046.6 255.6L1054.6 260.3M1060.9 264.0L1061.7 264.5M1068.0 268.2L1076.0 273.0M1082.3 276.7L1083.1 277.2M1089.4 280.9L1097.4 285.7M1103.7 289.4L1104.4 289.9M1110.7 293.6L1118.7 298.4M1125.0 302.1L1125.8 302.6M1132.1 306.3L1140.1 311.0M1146.4 314.8L1147.2 315.2M1153.5 319.0L1161.5 323.7M1167.8 327.4L1168.6 327.9" stroke="#6a6a6a" stroke-width="1.0" fill="none"/>
<path d="M439.5 264.3L454.9 260.4L447.2 270.7ZM447.2 270.7L447.2 262.3" stroke="#4a64a8" stroke-width="0.8" fill="none" stroke-linejoin="round"/>
<text transform="matrix(1 -0.2550 -0.15 1 439.16 264.14)" x="0" y="0" font-size="7.84" fill="#262626" textLength="16.64" lengthAdjust="spacingAndGlyphs" stroke="#262626" stroke-width="0.12">18.30</text>
<text transform="matrix(1 -0.2550 -0.15 1 409.99 270.48)" x="0" y="0" font-size="8.05" fill="#262626" textLength="25.67" lengthAdjust="spacingAndGlyphs" stroke="#262626" stroke-width="0.12">Nivel 7 -</text>
<path d="M447.2 303.7L459.4 300.6M469.0 298.1L470.2 297.8M479.8 295.4L492.0 292.3M501.6 289.8L502.8 289.5M512.4 287.1L524.6 283.9M534.2 281.5L535.4 281.2M545.0 278.7L557.2 275.6M566.8 273.2L568.0 272.9M577.6 270.4L589.8 267.3M599.4 264.9L600.6 264.6M610.2 262.1L622.4 259.0M632.0 256.6L633.2 256.3M642.8 253.8L655.0 250.7M664.6 248.2L665.8 247.9M675.4 245.5L687.6 242.4M697.2 239.9L698.4 239.6M708.0 237.2L720.2 234.1M729.8 231.6L731.0 231.3M740.6 228.9L752.8 225.8M762.4 223.3L763.6 223.0M773.2 220.6L785.4 217.4M795.0 215.0L796.2 214.7M805.8 212.2L818.0 209.1M827.6 206.7L828.8 206.4M838.4 203.9L850.6 200.8M860.2 198.4L861.4 198.1M871.0 195.6L883.2 192.5M889.8 195.6L890.6 196.1M896.9 199.8L904.9 204.5M911.2 208.3L912.0 208.7M918.3 212.5L926.3 217.2M932.6 221.0L933.4 221.4M939.7 225.2L947.7 229.9M954.0 233.6L954.7 234.1M961.0 237.8L969.0 242.6M975.3 246.3L976.1 246.8M982.4 250.5L990.4 255.3M996.7 259.0L997.5 259.5M1003.8 263.2L1011.8 267.9M1018.1 271.7L1018.9 272.1M1025.2 275.9L1033.2 280.6M1039.5 284.4L1040.3 284.8M1046.6 288.6L1054.6 293.3M1060.9 297.0L1061.7 297.5M1068.0 301.2L1076.0 306.0M1082.3 309.7L1083.1 310.2M1089.4 313.9L1097.4 318.7M1103.7 322.4L1104.4 322.9M1110.7 326.6L1118.7 331.4M1125.0 335.1L1125.8 335.6M1132.1 339.3L1140.1 344.0M1146.4 347.8L1147.2 348.2M1153.5 352.0L1161.5 356.7M1167.8 360.4L1168.6 360.9" stroke="#6a6a6a" stroke-width="1.0" fill="none"/>
<path d="M439.5 297.3L454.9 293.4L447.2 303.7ZM447.2 303.7L447.2 295.3" stroke="#4a64a8" stroke-width="0.8" fill="none" stroke-linejoin="round"/>
<text transform="matrix(1 -0.2550 -0.15 1 439.16 297.14)" x="0" y="0" font-size="7.84" fill="#262626" textLength="16.64" lengthAdjust="spacingAndGlyphs" stroke="#262626" stroke-width="0.12">15.30</text>
<text transform="matrix(1 -0.2550 -0.15 1 409.99 303.48)" x="0" y="0" font-size="8.05" fill="#262626" textLength="25.67" lengthAdjust="spacingAndGlyphs" stroke="#262626" stroke-width="0.12">Nivel 6 -</text>
<path d="M447.2 336.7L459.4 333.6M469.0 331.1L470.2 330.8M479.8 328.4L492.0 325.3M501.6 322.8L502.8 322.5M512.4 320.1L524.6 316.9M534.2 314.5L535.4 314.2M545.0 311.7L557.2 308.6M566.8 306.2L568.0 305.9M577.6 303.4L589.8 300.3M599.4 297.9L600.6 297.6M610.2 295.1L622.4 292.0M632.0 289.6L633.2 289.3M642.8 286.8L655.0 283.7M664.6 281.2L665.8 280.9M675.4 278.5L687.6 275.4M697.2 272.9L698.4 272.6M708.0 270.2L720.2 267.1M729.8 264.6L731.0 264.3M740.6 261.9L752.8 258.8M762.4 256.3L763.6 256.0M773.2 253.6L785.4 250.4M795.0 248.0L796.2 247.7M805.8 245.2L818.0 242.1M827.6 239.7L828.8 239.4M838.4 236.9L850.6 233.8M860.2 231.4L861.4 231.1M871.0 228.6L883.2 225.5M889.8 228.6L890.6 229.1M896.9 232.8L904.9 237.5M911.2 241.3L912.0 241.7M918.3 245.5L926.3 250.2M932.6 254.0L933.4 254.4M939.7 258.2L947.7 262.9M954.0 266.6L954.7 267.1M961.0 270.8L969.0 275.6M975.3 279.3L976.1 279.8M982.4 283.5L990.4 288.3M996.7 292.0L997.5 292.5M1003.8 296.2L1011.8 300.9M1018.1 304.7L1018.9 305.1M1025.2 308.9L1033.2 313.6M1039.5 317.4L1040.3 317.8M1046.6 321.6L1054.6 326.3M1060.9 330.0L1061.7 330.5M1068.0 334.2L1076.0 339.0M1082.3 342.7L1083.1 343.2M1089.4 346.9L1097.4 351.7M1103.7 355.4L1104.4 355.9M1110.7 359.6L1118.7 364.4M1125.0 368.1L1125.8 368.6M1132.1 372.3L1140.1 377.0M1146.4 380.8L1147.2 381.2M1153.5 385.0L1161.5 389.7M1167.8 393.4L1168.6 393.9" stroke="#6a6a6a" stroke-width="1.0" fill="none"/>
<path d="M439.5 330.3L454.9 326.4L447.2 336.7ZM447.2 336.7L447.2 328.3" stroke="#4a64a8" stroke-width="0.8" fill="none" stroke-linejoin="round"/>
<text transform="matrix(1 -0.2550 -0.15 1 439.16 330.14)" x="0" y="0" font-size="7.84" fill="#262626" textLength="16.64" lengthAdjust="spacingAndGlyphs" stroke="#262626" stroke-width="0.12">12.30</text>
<text transform="matrix(1 -0.2550 -0.15 1 409.99 336.48)" x="0" y="0" font-size="8.05" fill="#262626" textLength="25.67" lengthAdjust="spacingAndGlyphs" stroke="#262626" stroke-width="0.12">Nivel 5 -</text>
<path d="M447.2 369.7L459.4 366.6M469.0 364.1L470.2 363.8M479.8 361.4L492.0 358.3M501.6 355.8L502.8 355.5M512.4 353.1L524.6 349.9M534.2 347.5L535.4 347.2M545.0 344.7L557.2 341.6M566.8 339.2L568.0 338.9M577.6 336.4L589.8 333.3M599.4 330.9L600.6 330.6M610.2 328.1L622.4 325.0M632.0 322.6L633.2 322.3M642.8 319.8L655.0 316.7M664.6 314.2L665.8 313.9M675.4 311.5L687.6 308.4M697.2 305.9L698.4 305.6M708.0 303.2L720.2 300.1M729.8 297.6L731.0 297.3M740.6 294.9L752.8 291.8M762.4 289.3L763.6 289.0M773.2 286.6L785.4 283.4M795.0 281.0L796.2 280.7M805.8 278.2L818.0 275.1M827.6 272.7L828.8 272.4M838.4 269.9L850.6 266.8M860.2 264.4L861.4 264.1M871.0 261.6L883.2 258.5M889.8 261.6L890.6 262.1M896.9 265.8L904.9 270.5M911.2 274.3L912.0 274.7M918.3 278.5L926.3 283.2M932.6 287.0L933.4 287.4M939.7 291.2L947.7 295.9M954.0 299.6L954.7 300.1M961.0 303.8L969.0 308.6M975.3 312.3L976.1 312.8M982.4 316.5L990.4 321.3M996.7 325.0L997.5 325.5M1003.8 329.2L1011.8 333.9M1018.1 337.7L1018.9 338.1M1025.2 341.9L1033.2 346.6M1039.5 350.4L1040.3 350.8M1046.6 354.6L1054.6 359.3M1060.9 363.0L1061.7 363.5M1068.0 367.2L1076.0 372.0M1082.3 375.7L1083.1 376.2M1089.4 379.9L1097.4 384.7M1103.7 388.4L1104.4 388.9M1110.7 392.6L1118.7 397.4M1125.0 401.1L1125.8 401.6M1132.1 405.3L1140.1 410.0M1146.4 413.8L1147.2 414.2M1153.5 418.0L1161.5 422.7M1167.8 426.4L1168.6 426.9" stroke="#6a6a6a" stroke-width="1.0" fill="none"/>
<path d="M439.5 363.3L454.9 359.4L447.2 369.7ZM447.2 369.7L447.2 361.3" stroke="#4a64a8" stroke-width="0.8" fill="none" stroke-linejoin="round"/>
<text transform="matrix(1 -0.2550 -0.15 1 439.16 363.14)" x="0" y="0" font-size="7.84" fill="#262626" textLength="12.94" lengthAdjust="spacingAndGlyphs" stroke="#262626" stroke-width="0.12">9.30</text>
<text transform="matrix(1 -0.2550 -0.15 1 409.99 369.48)" x="0" y="0" font-size="8.05" fill="#262626" textLength="25.67" lengthAdjust="spacingAndGlyphs" stroke="#262626" stroke-width="0.12">Nivel 4 -</text>
<path d="M447.2 402.7L459.4 399.6M469.0 397.1L470.2 396.8M479.8 394.4L492.0 391.3M501.6 388.8L502.8 388.5M512.4 386.1L524.6 382.9M534.2 380.5L535.4 380.2M545.0 377.7L557.2 374.6M566.8 372.2L568.0 371.9M577.6 369.4L589.8 366.3M599.4 363.9L600.6 363.6M610.2 361.1L622.4 358.0M632.0 355.6L633.2 355.3M642.8 352.8L655.0 349.7M664.6 347.2L665.8 346.9M675.4 344.5L687.6 341.4M697.2 338.9L698.4 338.6M708.0 336.2L720.2 333.1M729.8 330.6L731.0 330.3M740.6 327.9L752.8 324.8M762.4 322.3L763.6 322.0M773.2 319.6L785.4 316.4M795.0 314.0L796.2 313.7M805.8 311.2L818.0 308.1M827.6 305.7L828.8 305.4M838.4 302.9L850.6 299.8M860.2 297.4L861.4 297.1M871.0 294.6L883.2 291.5M889.8 294.6L890.6 295.1M896.9 298.8L904.9 303.5M911.2 307.3L912.0 307.7M918.3 311.5L926.3 316.2M932.6 320.0L933.4 320.4M939.7 324.2L947.7 328.9M954.0 332.6L954.7 333.1M961.0 336.8L969.0 341.6M975.3 345.3L976.1 345.8M982.4 349.5L990.4 354.3M996.7 358.0L997.5 358.5M1003.8 362.2L1011.8 366.9M1018.1 370.7L1018.9 371.1M1025.2 374.9L1033.2 379.6M1039.5 383.4L1040.3 383.8M1046.6 387.6L1054.6 392.3M1060.9 396.0L1061.7 396.5M1068.0 400.2L1076.0 405.0M1082.3 408.7L1083.1 409.2M1089.4 412.9L1097.4 417.7M1103.7 421.4L1104.4 421.9M1110.7 425.6L1118.7 430.4M1125.0 434.1L1125.8 434.6M1132.1 438.3L1140.1 443.0M1146.4 446.8L1147.2 447.2M1153.5 451.0L1161.5 455.7M1167.8 459.4L1168.6 459.9" stroke="#6a6a6a" stroke-width="1.0" fill="none"/>
<path d="M439.5 396.3L454.9 392.4L447.2 402.7ZM447.2 402.7L447.2 394.3" stroke="#4a64a8" stroke-width="0.8" fill="none" stroke-linejoin="round"/>
<text transform="matrix(1 -0.2550 -0.15 1 439.16 396.14)" x="0" y="0" font-size="7.84" fill="#262626" textLength="12.94" lengthAdjust="spacingAndGlyphs" stroke="#262626" stroke-width="0.12">6.30</text>
<text transform="matrix(1 -0.2550 -0.15 1 409.99 402.48)" x="0" y="0" font-size="8.05" fill="#262626" textLength="25.67" lengthAdjust="spacingAndGlyphs" stroke="#262626" stroke-width="0.12">Nivel 3 -</text>
<path d="M447.2 435.7L459.4 432.6M469.0 430.1L470.2 429.8M479.8 427.4L492.0 424.3M501.6 421.8L502.8 421.5M512.4 419.1L524.6 415.9M534.2 413.5L535.4 413.2M545.0 410.7L557.2 407.6M566.8 405.2L568.0 404.9M577.6 402.4L589.8 399.3M599.4 396.9L600.6 396.6M610.2 394.1L622.4 391.0M632.0 388.6L633.2 388.3M642.8 385.8L655.0 382.7M664.6 380.2L665.8 379.9M675.4 377.5L687.6 374.4M697.2 371.9L698.4 371.6M708.0 369.2L720.2 366.1M729.8 363.6L731.0 363.3M740.6 360.9L752.8 357.8M762.4 355.3L763.6 355.0M773.2 352.6L785.4 349.4M795.0 347.0L796.2 346.7M805.8 344.2L818.0 341.1M827.6 338.7L828.8 338.4M838.4 335.9L850.6 332.8M860.2 330.4L861.4 330.1M871.0 327.6L883.2 324.5M889.8 327.6L890.6 328.1M896.9 331.8L904.9 336.5M911.2 340.3L912.0 340.7M918.3 344.5L926.3 349.2M932.6 353.0L933.4 353.4M939.7 357.2L947.7 361.9M954.0 365.6L954.7 366.1M961.0 369.8L969.0 374.6M975.3 378.3L976.1 378.8M982.4 382.5L990.4 387.3M996.7 391.0L997.5 391.5M1003.8 395.2L1011.8 399.9M1018.1 403.7L1018.9 404.1M1025.2 407.9L1033.2 412.6M1039.5 416.4L1040.3 416.8M1046.6 420.6L1054.6 425.3M1060.9 429.0L1061.7 429.5M1068.0 433.2L1076.0 438.0M1082.3 441.7L1083.1 442.2M1089.4 445.9L1097.4 450.7M1103.7 454.4L1104.4 454.9M1110.7 458.6L1118.7 463.4M1125.0 467.1L1125.8 467.6M1132.1 471.3L1140.1 476.0M1146.4 479.8L1147.2 480.2M1153.5 484.0L1161.5 488.7M1167.8 492.4L1168.6 492.9" stroke="#6a6a6a" stroke-width="1.0" fill="none"/>
<path d="M439.5 429.3L454.9 425.4L447.2 435.7ZM447.2 435.7L447.2 427.3" stroke="#4a64a8" stroke-width="0.8" fill="none" stroke-linejoin="round"/>
<text transform="matrix(1 -0.2550 -0.15 1 439.16 429.14)" x="0" y="0" font-size="7.84" fill="#262626" textLength="12.94" lengthAdjust="spacingAndGlyphs" stroke="#262626" stroke-width="0.12">3.30</text>
<text transform="matrix(1 -0.2550 -0.15 1 409.99 435.48)" x="0" y="0" font-size="8.05" fill="#262626" textLength="25.67" lengthAdjust="spacingAndGlyphs" stroke="#262626" stroke-width="0.12">Nivel 2 -</text>
<path d="M447.2 472.0L459.4 468.9M469.0 466.4L470.2 466.1M479.8 463.7L492.0 460.6M501.6 458.1L502.8 457.8M512.4 455.4L524.6 452.2M534.2 449.8L535.4 449.5M545.0 447.0L557.2 443.9M566.8 441.5L568.0 441.2M577.6 438.7L589.8 435.6M599.4 433.2L600.6 432.9M610.2 430.4L622.4 427.3M632.0 424.9L633.2 424.6M642.8 422.1L655.0 419.0M664.6 416.5L665.8 416.2M675.4 413.8L687.6 410.7M697.2 408.2L698.4 407.9M708.0 405.5L720.2 402.4M729.8 399.9L731.0 399.6M740.6 397.2L752.8 394.1M762.4 391.6L763.6 391.3M773.2 388.9L785.4 385.7M795.0 383.3L796.2 383.0M805.8 380.5L818.0 377.4M827.6 375.0L828.8 374.7M838.4 372.2L850.6 369.1M860.2 366.7L861.4 366.4M871.0 363.9L883.2 360.8M889.8 363.9L890.6 364.4M896.9 368.1L904.9 372.8M911.2 376.6L912.0 377.0M918.3 380.8L926.3 385.5M932.6 389.3L933.4 389.7M939.7 393.5L947.7 398.2M954.0 401.9L954.7 402.4M961.0 406.1L969.0 410.9M975.3 414.6L976.1 415.1M982.4 418.8L990.4 423.6M996.7 427.3L997.5 427.8M1003.8 431.5L1011.8 436.2M1018.1 440.0L1018.9 440.4M1025.2 444.2L1033.2 448.9M1039.5 452.7L1040.3 453.1M1046.6 456.9L1054.6 461.6M1060.9 465.3L1061.7 465.8M1068.0 469.5L1076.0 474.3M1082.3 478.0L1083.1 478.5M1089.4 482.2L1097.4 487.0M1103.7 490.7L1104.4 491.2M1110.7 494.9L1118.7 499.7M1125.0 503.4L1125.8 503.9M1132.1 507.6L1140.1 512.3M1146.4 516.1L1147.2 516.5M1153.5 520.3L1161.5 525.0M1167.8 528.7L1168.6 529.2" stroke="#6a6a6a" stroke-width="1.0" fill="none"/>
<path d="M439.5 465.6L454.9 461.7L447.2 472.0ZM447.2 472.0L447.2 463.6" stroke="#4a64a8" stroke-width="0.8" fill="none" stroke-linejoin="round"/>
<text transform="matrix(1 -0.2550 -0.15 1 439.16 465.44)" x="0" y="0" font-size="7.84" fill="#262626" textLength="12.94" lengthAdjust="spacingAndGlyphs" stroke="#262626" stroke-width="0.12">0.00</text>
<text transform="matrix(1 -0.2550 -0.15 1 409.99 471.78)" x="0" y="0" font-size="8.05" fill="#262626" textLength="25.67" lengthAdjust="spacingAndGlyphs" stroke="#262626" stroke-width="0.12">Nivel 1 -</text>
<path d="M533.2 469.3L545.4 466.2M555.0 463.7L556.2 463.4M565.8 461.0L578.0 457.9M587.6 455.4L588.8 455.1M598.4 452.7L610.6 449.6M620.2 447.1L621.4 446.8M631.0 444.4L643.2 441.3M652.8 438.8L654.0 438.5M663.6 436.0L675.8 432.9M685.4 430.5L686.6 430.2M696.2 427.7L708.4 424.6M718.0 422.2L719.2 421.9M728.8 419.4L741.0 416.3M750.6 413.9L751.8 413.6M761.4 411.1L773.6 408.0M783.2 405.6L784.4 405.2M794.0 402.8L806.2 399.7M815.8 397.2L817.0 396.9M826.6 394.5L838.8 391.4M848.4 388.9L849.6 388.6M859.2 386.2L871.4 383.1M881.0 380.6L882.2 380.3M889.1 382.8L897.2 387.5M903.4 391.2L904.2 391.7M910.5 395.4L918.5 400.2M924.8 403.9L925.6 404.4M931.9 408.1L939.9 412.9M946.2 416.6L947.0 417.1M953.3 420.8L961.3 425.5M967.6 429.3L968.4 429.7M974.7 433.5L982.7 438.2M989.0 442.0L989.8 442.4M996.1 446.2L1004.1 450.9M1010.4 454.6L1011.2 455.1M1017.5 458.8L1025.5 463.6M1031.8 467.3L1032.5 467.8M1038.8 471.5L1046.8 476.3M1053.1 480.0L1053.9 480.5M1060.2 484.2L1068.2 488.9M1074.5 492.7L1075.3 493.1M1081.6 496.9L1089.6 501.6M1095.9 505.4L1096.7 505.8M1103.0 509.6L1111.0 514.3M1117.3 518.0L1118.1 518.5M1124.4 522.2L1132.4 527.0M1138.7 530.7L1139.5 531.2M1145.8 534.9L1153.8 539.7M1160.1 543.4L1160.9 543.9M1167.2 547.6L1174.7 552.1" stroke="#6a6a6a" stroke-width="1.0" fill="none"/>
<path d="M525.5 462.9L540.9 459.0L533.2 469.3ZM533.2 469.3L533.2 460.9" stroke="#4a64a8" stroke-width="0.8" fill="none" stroke-linejoin="round"/>
<text transform="matrix(1 -0.2550 -0.15 1 525.16 462.76)" x="0" y="0" font-size="7.84" fill="#262626" textLength="15.16" lengthAdjust="spacingAndGlyphs" stroke="#262626" stroke-width="0.12">-1.75</text>
<text transform="matrix(1 -0.2550 -0.15 1 468.36 476.15)" x="0" y="0" font-size="8.05" fill="#262626" textLength="53.30" lengthAdjust="spacingAndGlyphs" stroke="#262626" stroke-width="0.12">Espacio público -</text>
<path d="M447.2 508.3L459.4 505.2M469.0 502.7L470.2 502.4M479.8 500.0L492.0 496.9M501.6 494.4L502.8 494.1M512.4 491.7L524.6 488.5M534.2 486.1L535.4 485.8M545.0 483.3L557.2 480.2M566.8 477.8L568.0 477.5M577.6 475.0L589.8 471.9M599.4 469.5L600.6 469.2M610.2 466.7L622.4 463.6M632.0 461.2L633.2 460.9M642.8 458.4L655.0 455.3M664.6 452.8L665.8 452.5M675.4 450.1L687.6 447.0M697.2 444.5L698.4 444.2M708.0 441.8L720.2 438.7M729.8 436.2L731.0 435.9M740.6 433.5L752.8 430.4M762.4 427.9L763.6 427.6M773.2 425.2L785.4 422.0M795.0 419.6L796.2 419.3M805.8 416.8L818.0 413.7M827.6 411.3L828.8 411.0M838.4 408.5L850.6 405.4M860.2 403.0L861.4 402.7M871.0 400.2L883.2 397.1M889.8 400.2L890.6 400.7M896.9 404.4L904.9 409.1M911.2 412.9L912.0 413.3M918.3 417.1L926.3 421.8M932.6 425.6L933.4 426.0M939.7 429.8L947.7 434.5M954.0 438.2L954.7 438.7M961.0 442.4L969.0 447.2M975.3 450.9L976.1 451.4M982.4 455.1L990.4 459.9M996.7 463.6L997.5 464.1M1003.8 467.8L1011.8 472.5M1018.1 476.3L1018.9 476.7M1025.2 480.5L1033.2 485.2M1039.5 489.0L1040.3 489.4M1046.6 493.2L1054.6 497.9M1060.9 501.6L1061.7 502.1M1068.0 505.8L1076.0 510.6M1082.3 514.3L1083.1 514.8M1089.4 518.5L1097.4 523.3M1103.7 527.0L1104.4 527.5M1110.7 531.2L1118.7 536.0M1125.0 539.7L1125.8 540.2M1132.1 543.9L1140.1 548.6M1146.4 552.4L1147.2 552.8M1153.5 556.6L1161.5 561.3M1167.8 565.0L1168.6 565.5" stroke="#6a6a6a" stroke-width="1.0" fill="none"/>
<path d="M439.5 501.9L454.9 498.0L447.2 508.3ZM447.2 508.3L447.2 499.9" stroke="#4a64a8" stroke-width="0.8" fill="none" stroke-linejoin="round"/>
<text transform="matrix(1 -0.2550 -0.15 1 439.16 501.74)" x="0" y="0" font-size="7.84" fill="#262626" textLength="15.16" lengthAdjust="spacingAndGlyphs" stroke="#262626" stroke-width="0.12">-3.30</text>
<text transform="matrix(1 -0.2550 -0.15 1 409.20 508.28)" x="0" y="0" font-size="8.05" fill="#262626" textLength="26.46" lengthAdjust="spacingAndGlyphs" stroke="#262626" stroke-width="0.12">Sotano -</text>
<path d="M447.2 532.5L459.4 529.4M469.0 526.9L470.2 526.6M479.8 524.2L492.0 521.1M501.6 518.6L502.8 518.3M512.4 515.9L524.6 512.7M534.2 510.3L535.4 510.0M545.0 507.5L557.2 504.4M566.8 502.0L568.0 501.7M577.6 499.2L589.8 496.1M599.4 493.7L600.6 493.4M610.2 490.9L622.4 487.8M632.0 485.4L633.2 485.1M642.8 482.6L655.0 479.5M664.6 477.0L665.8 476.7M675.4 474.3L687.6 471.2M697.2 468.7L698.4 468.4M708.0 466.0L720.2 462.9M729.8 460.4L731.0 460.1M740.6 457.7L752.8 454.6M762.4 452.1L763.6 451.8M773.2 449.4L785.4 446.2M795.0 443.8L796.2 443.5M805.8 441.0L818.0 437.9M827.6 435.5L828.8 435.2M838.4 432.7L850.6 429.6M860.2 427.2L861.4 426.9M871.0 424.4L883.2 421.3M889.8 424.4L890.6 424.9M896.9 428.6L904.9 433.3M911.2 437.1L912.0 437.5M918.3 441.3L926.3 446.0M932.6 449.8L933.4 450.2M939.7 454.0L947.7 458.7M954.0 462.4L954.7 462.9M961.0 466.6L969.0 471.4M975.3 475.1L976.1 475.6M982.4 479.3L990.4 484.1M996.7 487.8L997.5 488.3M1003.8 492.0L1011.8 496.7M1018.1 500.5L1018.9 500.9M1025.2 504.7L1033.2 509.4M1039.5 513.2L1040.3 513.6M1046.6 517.4L1054.6 522.1M1060.9 525.8L1061.7 526.3M1068.0 530.0L1076.0 534.8M1082.3 538.5L1083.1 539.0M1089.4 542.7L1097.4 547.5M1103.7 551.2L1104.4 551.7M1110.7 555.4L1118.7 560.2M1125.0 563.9L1125.8 564.4M1132.1 568.1L1140.1 572.8M1146.4 576.6L1147.2 577.0M1153.5 580.8L1161.5 585.5M1167.8 589.2L1168.6 589.7" stroke="#6a6a6a" stroke-width="1.0" fill="none"/>
<path d="M439.5 526.1L454.9 522.2L447.2 532.5ZM447.2 532.5L447.2 524.1" stroke="#4a64a8" stroke-width="0.8" fill="none" stroke-linejoin="round"/>
<text transform="matrix(1 -0.2550 -0.15 1 439.16 525.94)" x="0" y="0" font-size="7.84" fill="#262626" textLength="15.16" lengthAdjust="spacingAndGlyphs" stroke="#262626" stroke-width="0.12">-5.50</text>
<text transform="matrix(1 -0.2550 -0.15 1 392.48 536.74)" x="0" y="0" font-size="8.05" fill="#262626" textLength="43.18" lengthAdjust="spacingAndGlyphs" stroke="#262626" stroke-width="0.12">Cimentación -</text>
<g stroke="#2a1a1a" stroke-opacity="0.5" stroke-width="0.45" stroke-linejoin="round">
<path d="M655.9 528.7 668.9 525.4 668.9 532.0 655.9 535.3z" fill="#88e8e8"/>
<path d="M644.8 522.1 657.8 518.8 668.9 525.4 655.9 528.7z" fill="#a8f2f2"/>
<path d="M654.9 469.9 658.5 472.0 658.5 525.2 654.9 523.0z" fill="#1c4690"/>
<path d="M658.5 472.0 666.5 470.0 666.5 523.1 658.5 525.2z" fill="#4a90e6"/>
<path d="M917.1 494.8 920.8 496.9 920.8 550.1 917.1 547.9z" fill="#1c4690"/>
<path d="M920.8 496.9 928.8 494.9 928.8 548.0 920.8 550.1z" fill="#4a90e6"/>
<path d="M601.8 533.1 612.9 539.7 612.9 546.3 601.8 539.7z" fill="#3c8a88"/>
<path d="M612.9 539.7 635.4 533.9 635.4 540.5 612.9 546.3z" fill="#88e8e8"/>
<path d="M601.8 533.1 624.3 527.3 635.4 533.9 612.9 539.7z" fill="#a8f2f2"/>
<path d="M922.8 525.4 955.2 544.6 955.2 551.7 922.8 532.5z" fill="#7a2a26"/>
<path d="M955.2 544.6 959.2 543.6 959.2 550.7 955.2 551.7z" fill="#e36a68"/>
<path d="M922.8 525.4 926.8 524.3 959.2 543.6 955.2 544.6z" fill="#eb8474"/>
<path d="M939.0 566.4 950.5 573.2 950.5 579.8 939.0 573.0z" fill="#3c8a88"/>
<path d="M950.5 573.2 971.5 567.8 971.5 574.4 950.5 579.8z" fill="#88e8e8"/>
<path d="M939.0 566.4 960.0 561.0 971.5 567.8 950.5 573.2z" fill="#a8f2f2"/>
<path d="M923.3 497.4 955.7 516.6 955.7 544.5 923.3 525.2z" fill="#2e6a2f"/>
<path d="M955.7 516.6 958.7 515.9 958.7 543.7 955.7 544.5z" fill="#7de07a"/>
<path d="M604.9 482.6 608.5 484.8 608.5 537.9 604.9 535.7z" fill="#1c4690"/>
<path d="M608.5 484.8 616.5 482.7 616.5 535.9 608.5 537.9z" fill="#4a90e6"/>
<path d="M953.2 516.2 956.9 518.3 956.9 571.5 953.2 569.3z" fill="#1c4690"/>
<path d="M956.9 518.3 964.9 516.3 964.9 569.4 956.9 571.5z" fill="#4a90e6"/>
<path d="M637.9 554.5 649.0 561.1 649.0 567.7 637.9 561.1z" fill="#3c8a88"/>
<path d="M649.0 561.1 671.5 555.3 671.5 561.9 649.0 567.7z" fill="#88e8e8"/>
<path d="M637.9 554.5 660.4 548.7 671.5 555.3 649.0 561.1z" fill="#a8f2f2"/>
<path d="M610.5 516.5 642.9 535.7 642.9 542.9 610.5 523.6z" fill="#7a2a26"/>
<path d="M642.9 535.7 646.9 534.7 646.9 541.8 642.9 542.9z" fill="#e36a68"/>
<path d="M610.5 516.5 614.5 515.5 646.9 534.7 642.9 535.7z" fill="#eb8474"/>
<path d="M611.0 499.9 643.4 519.1 643.4 535.6 611.0 516.4z" fill="#2e6a2f"/>
<path d="M643.4 519.1 646.4 518.3 646.4 534.8 643.4 535.6z" fill="#7de07a"/>
<path d="M611.0 499.9 614.0 499.1 646.4 518.3 643.4 519.1z" fill="#a8f0a2"/>
<path d="M886.0 579.9 897.5 586.7 897.5 593.3 886.0 586.5z" fill="#3c8a88"/>
<path d="M897.5 586.7 918.5 581.4 918.5 588.0 897.5 593.3z" fill="#88e8e8"/>
<path d="M886.0 579.9 907.0 574.6 918.5 581.4 897.5 586.7z" fill="#a8f2f2"/>
<path d="M911.3 558.4 956.3 547.0 956.3 554.1 911.3 565.6z" fill="#e36a68"/>
<path d="M908.7 556.9 953.7 545.4 956.3 547.0 911.3 558.4z" fill="#eb8474"/>
<path d="M648.3 515.0 755.5 578.6 755.5 580.8 648.3 517.2z" fill="#7a2a26"/>
<path d="M755.5 578.6 942.0 531.1 942.0 533.3 755.5 580.8z" fill="#e36c68"/>
<path d="M648.3 515.0 834.8 467.5 942.0 531.1 755.5 578.6z" fill="#fbca88"/>
<path d="M911.0 540.1 956.0 528.6 956.0 546.8 911.0 558.2z" fill="#7de07a"/>
<path d="M909.0 538.9 954.0 527.4 956.0 528.6 911.0 540.1z" fill="#a8f0a2"/>
<path d="M640.9 504.0 644.6 506.2 644.6 559.3 640.9 557.1z" fill="#1c4690"/>
<path d="M644.6 506.2 652.6 504.1 652.6 557.3 644.6 559.3z" fill="#4a90e6"/>
<path d="M962.4 472.0 966.9 470.8 966.9 476.0 962.4 477.1z" fill="#e36c68" stroke="#e36c68" stroke-opacity="1" stroke-width="0.5"/>
<path d="M948.3 463.6 952.8 462.5 966.9 470.8 962.4 472.0z" fill="#fbca88" stroke="#fbca88" stroke-opacity="1" stroke-width="0.5"/>
<path d="M948.3 463.6L952.8 462.5M952.8 462.5L966.9 470.8M966.9 470.8L962.4 472.0" fill="none"/>
<path d="M900.2 529.7 903.9 531.9 903.9 585.0 900.2 582.8z" fill="#1c4690"/>
<path d="M903.9 531.9 911.9 529.8 911.9 582.9 903.9 585.0z" fill="#4a90e6"/>
<path d="M674.0 575.9 685.1 582.5 685.1 589.1 674.0 582.5z" fill="#3c8a88"/>
<path d="M685.1 582.5 707.6 576.7 707.6 583.3 685.1 589.1z" fill="#88e8e8"/>
<path d="M674.0 575.9 696.5 570.1 707.6 576.7 685.1 582.5z" fill="#a8f2f2"/>
<path d="M646.6 537.9 679.0 557.1 679.0 564.3 646.6 545.0z" fill="#7a2a26"/>
<path d="M679.0 557.1 683.0 556.1 683.0 563.2 679.0 564.3z" fill="#e36a68"/>
<path d="M646.6 537.9 650.6 536.9 683.0 556.1 679.0 557.1z" fill="#eb8474"/>
<path d="M841.0 591.4 852.5 598.2 852.5 604.8 841.0 598.0z" fill="#3c8a88"/>
<path d="M852.5 598.2 873.5 592.8 873.5 599.4 852.5 604.8z" fill="#88e8e8"/>
<path d="M841.0 591.4 862.0 586.0 873.5 592.8 852.5 598.2z" fill="#a8f2f2"/>
<path d="M647.1 521.3 679.5 540.5 679.5 557.0 647.1 537.8z" fill="#2e6a2f"/>
<path d="M679.5 540.5 682.5 539.7 682.5 556.2 679.5 557.0z" fill="#7de07a"/>
<path d="M647.1 521.3 650.1 520.5 682.5 539.7 679.5 540.5z" fill="#a8f0a2"/>
<path d="M962.4 439.0 966.9 437.8 966.9 443.0 962.4 444.1z" fill="#e36c68" stroke="#e36c68" stroke-opacity="1" stroke-width="0.5"/>
<path d="M948.3 430.6 952.8 429.5 966.9 437.8 962.4 439.0z" fill="#fbca88" stroke="#fbca88" stroke-opacity="1" stroke-width="0.5"/>
<path d="M948.3 430.6L952.8 429.5M952.8 429.5L966.9 437.8M966.9 437.8L962.4 439.0" fill="none"/>
<path d="M863.7 568.4 866.3 569.9 866.3 577.1 863.7 575.5z" fill="#7a2a26"/>
<path d="M866.3 569.9 903.3 560.5 903.3 567.6 866.3 577.1z" fill="#e36a68"/>
<path d="M863.7 568.4 900.7 558.9 903.3 560.5 866.3 569.9z" fill="#eb8474"/>
<path d="M864.0 550.4 866.0 551.6 866.0 569.7 864.0 568.5z" fill="#2e6a2f"/>
<path d="M866.0 551.6 903.0 542.1 903.0 560.3 866.0 569.7z" fill="#7de07a"/>
<path d="M864.0 550.4 901.0 541.0 903.0 542.1 866.0 551.6z" fill="#a8f0a2"/>
<path d="M677.0 525.4 680.7 527.6 680.7 580.7 677.0 578.5z" fill="#1c4690"/>
<path d="M680.7 527.6 688.7 525.5 688.7 578.7 680.7 580.7z" fill="#4a90e6"/>
<path d="M855.2 541.2 858.9 543.3 858.9 596.5 855.2 594.3z" fill="#1c4690"/>
<path d="M858.9 543.3 866.9 541.3 866.9 594.4 858.9 596.5z" fill="#4a90e6"/>
<path d="M962.4 406.0 966.9 404.8 966.9 410.0 962.4 411.1z" fill="#e36c68" stroke="#e36c68" stroke-opacity="1" stroke-width="0.5"/>
<path d="M948.3 397.6 952.8 396.5 966.9 404.8 962.4 406.0z" fill="#fbca88" stroke="#fbca88" stroke-opacity="1" stroke-width="0.5"/>
<path d="M948.3 397.6L952.8 396.5M952.8 396.5L966.9 404.8M966.9 404.8L962.4 406.0" fill="none"/>
<path d="M710.0 597.2 721.2 603.9 721.2 610.5 710.0 603.8z" fill="#3c8a88"/>
<path d="M721.2 603.9 743.7 598.1 743.7 604.7 721.2 610.5z" fill="#88e8e8"/>
<path d="M710.0 597.2 732.5 591.5 743.7 598.1 721.2 603.9z" fill="#a8f2f2"/>
<path d="M682.7 559.3 715.1 578.5 715.1 585.7 682.7 566.4z" fill="#7a2a26"/>
<path d="M682.7 559.3 686.7 558.3 719.1 577.5 715.1 578.5z" fill="#eb8474"/>
<path d="M810.3 584.2 858.3 571.9 858.3 579.1 810.3 591.3z" fill="#e36a68"/>
<path d="M807.7 582.6 855.7 570.4 858.3 571.9 810.3 584.2z" fill="#eb8474"/>
<path d="M785.0 605.7 796.5 612.5 796.5 619.1 785.0 612.3z" fill="#3c8a88"/>
<path d="M796.5 612.5 817.5 607.1 817.5 613.7 796.5 619.1z" fill="#88e8e8"/>
<path d="M785.0 605.7 806.0 600.3 817.5 607.1 796.5 612.5z" fill="#a8f2f2"/>
<path d="M683.2 542.7 715.6 561.9 715.6 578.4 683.2 559.2z" fill="#2e6a2f"/>
<path d="M683.2 542.7 686.2 541.9 718.6 561.1 715.6 561.9z" fill="#a8f0a2"/>
<path d="M962.4 373.0 966.9 371.8 966.9 377.0 962.4 378.1z" fill="#e36c68" stroke="#e36c68" stroke-opacity="1" stroke-width="0.5"/>
<path d="M948.3 364.6 952.8 363.5 966.9 371.8 962.4 373.0z" fill="#fbca88" stroke="#fbca88" stroke-opacity="1" stroke-width="0.5"/>
<path d="M948.3 364.6L952.8 363.5M952.8 363.5L966.9 371.8M966.9 371.8L962.4 373.0" fill="none"/>
<path d="M810.0 565.8 858.0 553.6 858.0 571.8 810.0 584.0z" fill="#7de07a"/>
<path d="M808.0 564.7 856.0 552.4 858.0 553.6 810.0 565.8z" fill="#a8f0a2"/>
<path d="M713.1 546.8 716.8 549.0 716.8 602.1 713.1 599.9z" fill="#1c4690"/>
<path d="M716.8 549.0 724.8 546.9 724.8 600.1 716.8 602.1z" fill="#4a90e6"/>
<path d="M713.1 546.8 721.1 544.7 724.8 546.9 716.8 549.0z" fill="#7cc0d8"/>
<path d="M604.7 476.8 749.2 562.5 749.2 568.2 604.7 482.5z" fill="#7a2a26" stroke="#7a2a26" stroke-opacity="1" stroke-width="0.5"/>
<path d="M749.2 562.5 960.2 508.7 960.2 514.4 749.2 568.2z" fill="#e36c68" stroke="#e36c68" stroke-opacity="1" stroke-width="0.5"/>
<path d="M604.7 476.8 815.7 423.0 960.2 508.7 749.2 562.5z" fill="#fbca88" stroke="#fbca88" stroke-opacity="1" stroke-width="0.5"/>
<path d="M611.7 477.5 815.7 425.5 813.7 424.3 609.7 476.4z" fill="#eb8474" stroke="#eb8474" stroke-opacity="1" stroke-width="0.5"/>
<path d="M647.8 498.9 851.8 446.9 849.8 445.7 645.8 497.8z" fill="#eb8474" stroke="#eb8474" stroke-opacity="1" stroke-width="0.5"/>
<path d="M683.8 520.3 887.8 468.3 885.9 467.1 681.9 519.2z" fill="#eb8474" stroke="#eb8474" stroke-opacity="1" stroke-width="0.5"/>
<path d="M719.9 541.7 923.9 489.7 922.0 488.5 718.0 540.6z" fill="#eb8474" stroke="#eb8474" stroke-opacity="1" stroke-width="0.5"/>
<path d="M612.2 476.6 609.2 477.3 751.7 561.8 754.7 561.1z" fill="#eb8474" stroke="#eb8474" stroke-opacity="1" stroke-width="0.5"/>
<path d="M662.2 463.8 659.2 464.6 801.7 549.1 804.7 548.3z" fill="#eb8474" stroke="#eb8474" stroke-opacity="1" stroke-width="0.5"/>
<path d="M718.2 449.5 715.2 450.3 857.7 534.8 860.7 534.0z" fill="#eb8474" stroke="#eb8474" stroke-opacity="1" stroke-width="0.5"/>
<path d="M763.2 438.1 760.2 438.8 902.7 523.3 905.7 522.6z" fill="#eb8474" stroke="#eb8474" stroke-opacity="1" stroke-width="0.5"/>
<path d="M816.2 424.5 813.2 425.3 955.7 509.8 958.7 509.0z" fill="#eb8474" stroke="#eb8474" stroke-opacity="1" stroke-width="0.5"/>
<path d="M609.7 478.8 615.3 477.3 611.7 475.1 606.1 476.6z" fill="#7cc0d8" stroke="#7cc0d8" stroke-opacity="1" stroke-width="0.5"/>
<path d="M645.8 500.1 651.4 498.7 647.7 496.5 642.1 498.0z" fill="#7cc0d8" stroke="#7cc0d8" stroke-opacity="1" stroke-width="0.5"/>
<path d="M681.9 521.5 687.5 520.1 683.8 517.9 678.2 519.4z" fill="#7cc0d8" stroke="#7cc0d8" stroke-opacity="1" stroke-width="0.5"/>
<path d="M718.0 542.9 723.6 541.5 719.9 539.3 714.3 540.8z" fill="#7cc0d8" stroke="#7cc0d8" stroke-opacity="1" stroke-width="0.5"/>
<path d="M659.7 466.0 665.3 464.6 661.7 462.4 656.1 463.8z" fill="#7cc0d8" stroke="#7cc0d8" stroke-opacity="1" stroke-width="0.5"/>
<path d="M695.8 487.4 701.4 486.0 697.7 483.8 692.1 485.2z" fill="#7cc0d8" stroke="#7cc0d8" stroke-opacity="1" stroke-width="0.5"/>
<path d="M731.9 508.8 737.5 507.4 733.8 505.2 728.2 506.6z" fill="#7cc0d8" stroke="#7cc0d8" stroke-opacity="1" stroke-width="0.5"/>
<path d="M768.0 530.2 773.6 528.8 769.9 526.6 764.3 528.0z" fill="#7cc0d8" stroke="#7cc0d8" stroke-opacity="1" stroke-width="0.5"/>
<path d="M824.0 515.9 829.6 514.5 825.9 512.3 820.3 513.7z" fill="#7cc0d8" stroke="#7cc0d8" stroke-opacity="1" stroke-width="0.5"/>
<path d="M869.0 504.4 874.6 503.0 870.9 500.8 865.3 502.3z" fill="#7cc0d8" stroke="#7cc0d8" stroke-opacity="1" stroke-width="0.5"/>
<path d="M922.0 490.9 927.6 489.5 923.9 487.3 918.3 488.7z" fill="#7cc0d8" stroke="#7cc0d8" stroke-opacity="1" stroke-width="0.5"/>
<path d="M604.7 476.8L815.7 423.0M815.7 423.0L960.2 508.7M960.2 508.7L749.2 562.5M749.2 562.5L604.7 476.8" fill="none"/>
<path d="M656.6 432.7 659.8 434.7 659.8 465.8 656.6 463.9z" fill="#1c4690"/>
<path d="M659.8 434.7 664.8 433.4 664.8 464.5 659.8 465.8z" fill="#4a90e6"/>
<path d="M918.8 457.6 922.1 459.6 922.1 490.7 918.8 488.8z" fill="#1c4690"/>
<path d="M922.1 459.6 927.1 458.3 927.1 489.5 922.1 490.7z" fill="#4a90e6"/>
<path d="M918.8 457.6 923.8 456.4 927.1 458.3 922.1 459.6z" fill="#7cc0d8"/>
<path d="M923.4 481.9 962.4 472.0 962.4 477.1 923.4 487.1z" fill="#e36c68" stroke="#e36c68" stroke-opacity="1" stroke-width="0.5"/>
<path d="M770.2 391.1 809.2 381.1 962.4 472.0 923.4 481.9z" fill="#fbca88" stroke="#fbca88" stroke-opacity="1" stroke-width="0.5"/>
<path d="M816.2 388.2 813.2 389.0 955.9 473.6 958.9 472.9z" fill="#eb8474" stroke="#eb8474" stroke-opacity="1" stroke-width="0.5"/>
<path d="M922.0 454.5 927.2 453.2 923.8 451.1 918.6 452.5z" fill="#7cc0d8" stroke="#7cc0d8" stroke-opacity="1" stroke-width="0.5"/>
<path d="M770.2 391.1L809.2 381.1M809.2 381.1L949.6 464.4M962.4 472.0L923.4 481.9M776.6 394.9L770.2 391.1" fill="none"/>
<path d="M922.1 426.6 927.1 425.3 927.1 453.2 922.1 454.4z" fill="#4a90e6"/>
<path d="M918.8 424.6 923.8 423.4 927.1 425.3 922.1 426.6z" fill="#7cc0d8"/>
<path d="M770.2 358.1 923.4 448.9 923.4 454.1 770.2 363.2z" fill="#7a2a26" stroke="#7a2a26" stroke-opacity="1" stroke-width="0.5"/>
<path d="M923.4 448.9 962.4 439.0 962.4 444.1 923.4 454.1z" fill="#e36c68" stroke="#e36c68" stroke-opacity="1" stroke-width="0.5"/>
<path d="M770.2 358.1 809.2 348.1 962.4 439.0 923.4 448.9z" fill="#fbca88" stroke="#fbca88" stroke-opacity="1" stroke-width="0.5"/>
<path d="M816.2 355.2 813.2 356.0 955.9 440.6 958.9 439.9z" fill="#eb8474" stroke="#eb8474" stroke-opacity="1" stroke-width="0.5"/>
<path d="M922.0 421.5 927.2 420.2 923.8 418.1 918.6 419.5z" fill="#7cc0d8" stroke="#7cc0d8" stroke-opacity="1" stroke-width="0.5"/>
<path d="M770.2 358.1L809.2 348.1M809.2 348.1L949.6 431.4M962.4 439.0L923.4 448.9M776.6 361.9L770.2 358.1" fill="none"/>
<path d="M953.2 510.4 956.9 512.6 956.9 518.3 953.2 516.2z" fill="#1c4690"/>
<path d="M956.9 512.6 964.9 510.6 964.9 516.3 956.9 518.3z" fill="#4a90e6"/>
<path d="M953.2 510.4 961.2 508.4 964.9 510.6 956.9 512.6z" fill="#7cc0d8"/>
<path d="M692.6 454.1 695.9 456.1 695.9 487.2 692.6 485.3z" fill="#1c4690"/>
<path d="M695.9 456.1 700.9 454.8 700.9 485.9 695.9 487.2z" fill="#4a90e6"/>
<path d="M865.8 471.2 869.1 473.1 869.1 504.2 865.8 502.3z" fill="#1c4690"/>
<path d="M869.1 473.1 874.1 471.8 874.1 503.0 869.1 504.2z" fill="#4a90e6"/>
<path d="M865.8 471.2 870.8 469.9 874.1 471.8 869.1 473.1z" fill="#7cc0d8"/>
<path d="M746.3 403.5 892.0 489.9 892.0 495.1 746.3 408.7z" fill="#7a2a26" stroke="#7a2a26" stroke-opacity="1" stroke-width="0.5"/>
<path d="M892.0 489.9 923.4 481.9 923.4 487.1 892.0 495.1z" fill="#e36c68" stroke="#e36c68" stroke-opacity="1" stroke-width="0.5"/>
<path d="M746.3 403.5 777.7 395.5 923.4 481.9 892.0 489.9z" fill="#fbca88" stroke="#fbca88" stroke-opacity="1" stroke-width="0.5"/>
<path d="M763.2 401.8 760.2 402.5 902.9 487.1 905.9 486.4z" fill="#eb8474" stroke="#eb8474" stroke-opacity="1" stroke-width="0.5"/>
<path d="M869.0 468.0 874.2 466.7 870.8 464.7 865.6 466.0z" fill="#7cc0d8" stroke="#7cc0d8" stroke-opacity="1" stroke-width="0.5"/>
<path d="M746.3 403.5L777.7 395.5M923.4 481.9L892.0 489.9M892.0 489.9L861.6 471.9" fill="none"/>
<path d="M840.0 475.5 859.3 470.5 859.3 475.7 840.0 480.6z" fill="#e36c68" stroke="#e36c68" stroke-opacity="1" stroke-width="0.5"/>
<path d="M727.0 408.4 746.3 403.5 859.3 470.5 840.0 475.5z" fill="#fbca88" stroke="#fbca88" stroke-opacity="1" stroke-width="0.5"/>
<path d="M727.0 408.4L746.3 403.5M859.3 470.5L840.0 475.5" fill="none"/>
<path d="M954.9 479.0 958.2 481.0 958.2 512.1 954.9 510.2z" fill="#1c4690"/>
<path d="M958.2 481.0 963.2 479.7 963.2 510.8 958.2 512.1z" fill="#4a90e6"/>
<path d="M954.9 479.0 959.9 477.8 963.2 479.7 958.2 481.0z" fill="#7cc0d8"/>
<path d="M918.8 391.6 922.1 393.6 922.1 421.4 918.8 419.5z" fill="#1c4690"/>
<path d="M922.1 393.6 927.1 392.3 927.1 420.2 922.1 421.4z" fill="#4a90e6"/>
<path d="M918.8 391.6 923.8 390.4 927.1 392.3 922.1 393.6z" fill="#7cc0d8"/>
<path d="M923.4 415.9 962.4 406.0 962.4 411.1 923.4 421.1z" fill="#e36c68" stroke="#e36c68" stroke-opacity="1" stroke-width="0.5"/>
<path d="M770.2 325.1 809.2 315.1 962.4 406.0 923.4 415.9z" fill="#fbca88" stroke="#fbca88" stroke-opacity="1" stroke-width="0.5"/>
<path d="M816.2 322.2 813.2 323.0 955.9 407.6 958.9 406.9z" fill="#eb8474" stroke="#eb8474" stroke-opacity="1" stroke-width="0.5"/>
<path d="M922.0 388.5 927.2 387.2 923.8 385.1 918.6 386.5z" fill="#7cc0d8" stroke="#7cc0d8" stroke-opacity="1" stroke-width="0.5"/>
<path d="M770.2 325.1L809.2 315.1M809.2 315.1L949.6 398.4M962.4 406.0L923.4 415.9M776.6 328.9L770.2 325.1" fill="none"/>
<path d="M954.9 473.9 958.2 475.8 958.2 481.0 954.9 479.0z" fill="#1c4690"/>
<path d="M958.2 475.8 963.2 474.5 963.2 479.7 958.2 481.0z" fill="#4a90e6"/>
<path d="M865.8 438.2 869.1 440.1 869.1 467.9 865.8 466.0z" fill="#1c4690"/>
<path d="M869.1 440.1 874.1 438.8 874.1 466.7 869.1 467.9z" fill="#4a90e6"/>
<path d="M865.8 438.2 870.8 436.9 874.1 438.8 869.1 440.1z" fill="#7cc0d8"/>
<path d="M746.3 370.5 892.0 456.9 892.0 462.1 746.3 375.7z" fill="#7a2a26" stroke="#7a2a26" stroke-opacity="1" stroke-width="0.5"/>
<path d="M892.0 456.9 923.4 448.9 923.4 454.1 892.0 462.1z" fill="#e36c68" stroke="#e36c68" stroke-opacity="1" stroke-width="0.5"/>
<path d="M746.3 370.5 777.7 362.5 923.4 448.9 892.0 456.9z" fill="#fbca88" stroke="#fbca88" stroke-opacity="1" stroke-width="0.5"/>
<path d="M763.2 368.8 760.2 369.5 902.9 454.1 905.9 453.4z" fill="#eb8474" stroke="#eb8474" stroke-opacity="1" stroke-width="0.5"/>
<path d="M869.0 435.0 874.2 433.7 870.8 431.7 865.6 433.0z" fill="#7cc0d8" stroke="#7cc0d8" stroke-opacity="1" stroke-width="0.5"/>
<path d="M746.3 370.5L777.7 362.5M923.4 448.9L892.0 456.9M892.0 456.9L861.6 438.9" fill="none"/>
<path d="M840.0 442.5 859.3 437.5 859.3 442.7 840.0 447.6z" fill="#e36c68" stroke="#e36c68" stroke-opacity="1" stroke-width="0.5"/>
<path d="M727.0 375.4 746.3 370.5 859.3 437.5 840.0 442.5z" fill="#fbca88" stroke="#fbca88" stroke-opacity="1" stroke-width="0.5"/>
<path d="M727.0 375.4L746.3 370.5M859.3 437.5L840.0 442.5" fill="none"/>
<path d="M954.9 446.0 958.2 448.0 958.2 475.8 954.9 473.9z" fill="#1c4690"/>
<path d="M958.2 448.0 963.2 446.7 963.2 474.5 958.2 475.8z" fill="#4a90e6"/>
<path d="M954.9 446.0 959.9 444.8 963.2 446.7 958.2 448.0z" fill="#7cc0d8"/>
<path d="M900.2 524.0 903.9 526.1 903.9 531.9 900.2 529.7z" fill="#1c4690"/>
<path d="M903.9 526.1 911.9 524.1 911.9 529.8 903.9 531.9z" fill="#4a90e6"/>
<path d="M900.2 524.0 908.2 521.9 911.9 524.1 903.9 526.1z" fill="#7cc0d8"/>
<path d="M918.8 358.6 922.1 360.6 922.1 388.4 918.8 386.5z" fill="#1c4690"/>
<path d="M922.1 360.6 927.1 359.3 927.1 387.2 922.1 388.4z" fill="#4a90e6"/>
<path d="M918.8 358.6 923.8 357.4 927.1 359.3 922.1 360.6z" fill="#7cc0d8"/>
<path d="M923.4 382.9 962.4 373.0 962.4 378.1 923.4 388.1z" fill="#e36c68" stroke="#e36c68" stroke-opacity="1" stroke-width="0.5"/>
<path d="M770.2 292.1 809.2 282.1 962.4 373.0 923.4 382.9z" fill="#fbca88" stroke="#fbca88" stroke-opacity="1" stroke-width="0.5"/>
<path d="M816.2 289.2 813.2 290.0 955.9 374.6 958.9 373.9z" fill="#eb8474" stroke="#eb8474" stroke-opacity="1" stroke-width="0.5"/>
<path d="M922.0 355.5 927.2 354.2 923.8 352.1 918.6 353.5z" fill="#7cc0d8" stroke="#7cc0d8" stroke-opacity="1" stroke-width="0.5"/>
<path d="M770.2 292.1L809.2 282.1M809.2 282.1L949.6 365.4M962.4 373.0L923.4 382.9M776.6 295.9L770.2 292.1" fill="none"/>
<path d="M820.8 482.6 824.1 484.6 824.1 515.7 820.8 513.8z" fill="#1c4690"/>
<path d="M824.1 484.6 829.1 483.3 829.1 514.4 824.1 515.7z" fill="#4a90e6"/>
<path d="M728.7 475.5 732.0 477.5 732.0 508.6 728.7 506.7z" fill="#1c4690"/>
<path d="M732.0 477.5 737.0 476.2 737.0 507.3 732.0 508.6z" fill="#4a90e6"/>
<path d="M954.9 440.9 958.2 442.8 958.2 448.0 954.9 446.0z" fill="#1c4690"/>
<path d="M958.2 442.8 963.2 441.5 963.2 446.7 958.2 448.0z" fill="#4a90e6"/>
<path d="M954.9 440.9 959.9 439.6 963.2 441.5 958.2 442.8z" fill="#7cc0d8"/>
<path d="M901.9 492.6 905.2 494.5 905.2 525.6 901.9 523.7z" fill="#1c4690"/>
<path d="M905.2 494.5 910.2 493.2 910.2 524.4 905.2 525.6z" fill="#4a90e6"/>
<path d="M901.9 492.6 906.9 491.3 910.2 493.2 905.2 494.5z" fill="#7cc0d8"/>
<path d="M865.8 405.2 869.1 407.1 869.1 434.9 865.8 433.0z" fill="#1c4690"/>
<path d="M869.1 407.1 874.1 405.8 874.1 433.7 869.1 434.9z" fill="#4a90e6"/>
<path d="M865.8 405.2 870.8 403.9 874.1 405.8 869.1 407.1z" fill="#7cc0d8"/>
<path d="M746.3 337.5 892.0 423.9 892.0 429.1 746.3 342.7z" fill="#7a2a26" stroke="#7a2a26" stroke-opacity="1" stroke-width="0.5"/>
<path d="M892.0 423.9 923.4 415.9 923.4 421.1 892.0 429.1z" fill="#e36c68" stroke="#e36c68" stroke-opacity="1" stroke-width="0.5"/>
<path d="M746.3 337.5 777.7 329.5 923.4 415.9 892.0 423.9z" fill="#fbca88" stroke="#fbca88" stroke-opacity="1" stroke-width="0.5"/>
<path d="M763.2 335.8 760.2 336.5 902.9 421.1 905.9 420.4z" fill="#eb8474" stroke="#eb8474" stroke-opacity="1" stroke-width="0.5"/>
<path d="M869.0 402.0 874.2 400.7 870.8 398.7 865.6 400.0z" fill="#7cc0d8" stroke="#7cc0d8" stroke-opacity="1" stroke-width="0.5"/>
<path d="M746.3 337.5L777.7 329.5M923.4 415.9L892.0 423.9M892.0 423.9L861.6 405.9" fill="none"/>
<path d="M840.0 409.5 859.3 404.5 859.3 409.7 840.0 414.6z" fill="#e36c68" stroke="#e36c68" stroke-opacity="1" stroke-width="0.5"/>
<path d="M727.0 342.4 746.3 337.5 859.3 404.5 840.0 409.5z" fill="#fbca88" stroke="#fbca88" stroke-opacity="1" stroke-width="0.5"/>
<path d="M727.0 342.4L746.3 337.5M859.3 404.5L840.0 409.5" fill="none"/>
<path d="M954.9 413.0 958.2 415.0 958.2 442.8 954.9 440.9z" fill="#1c4690"/>
<path d="M958.2 415.0 963.2 413.7 963.2 441.5 958.2 442.8z" fill="#4a90e6"/>
<path d="M901.9 487.4 905.2 489.3 905.2 494.5 901.9 492.6z" fill="#1c4690"/>
<path d="M905.2 489.3 910.2 488.1 910.2 493.2 905.2 494.5z" fill="#4a90e6"/>
<path d="M901.9 487.4 906.9 486.1 910.2 488.1 905.2 489.3z" fill="#7cc0d8"/>
<path d="M954.9 407.9 958.2 409.8 958.2 415.0 954.9 413.0z" fill="#1c4690"/>
<path d="M958.2 409.8 963.2 408.5 963.2 413.7 958.2 415.0z" fill="#4a90e6"/>
<path d="M954.9 407.9 959.9 406.6 963.2 408.5 958.2 409.8z" fill="#7cc0d8"/>
<path d="M855.2 535.4 858.9 537.6 858.9 543.3 855.2 541.2z" fill="#1c4690"/>
<path d="M858.9 537.6 866.9 535.6 866.9 541.3 858.9 543.3z" fill="#4a90e6"/>
<path d="M855.2 535.4 863.2 533.4 866.9 535.6 858.9 537.6z" fill="#7cc0d8"/>
<path d="M901.9 459.6 905.2 461.5 905.2 489.3 901.9 487.4z" fill="#1c4690"/>
<path d="M905.2 461.5 910.2 460.2 910.2 488.1 905.2 489.3z" fill="#4a90e6"/>
<path d="M870.1 493.3 872.7 494.8 872.7 500.0 870.1 498.5z" fill="#7a2a26" stroke="#7a2a26" stroke-opacity="1" stroke-width="0.5"/>
<path d="M872.7 494.8 892.0 489.9 892.0 495.1 872.7 500.0z" fill="#e36c68" stroke="#e36c68" stroke-opacity="1" stroke-width="0.5"/>
<path d="M870.1 493.3 889.4 488.4 892.0 489.9 872.7 494.8z" fill="#fbca88" stroke="#fbca88" stroke-opacity="1" stroke-width="0.5"/>
<path d="M870.1 493.3L889.4 488.4M892.0 489.9L872.7 494.8" fill="none"/>
<path d="M845.4 501.8 872.7 494.8 872.7 500.0 845.4 507.0z" fill="#e36c68" stroke="#e36c68" stroke-opacity="1" stroke-width="0.5"/>
<path d="M699.7 415.4 727.0 408.4 872.7 494.8 845.4 501.8z" fill="#fbca88" stroke="#fbca88" stroke-opacity="1" stroke-width="0.5"/>
<path d="M718.2 413.2 715.2 414.0 857.9 498.6 860.9 497.8z" fill="#eb8474" stroke="#eb8474" stroke-opacity="1" stroke-width="0.5"/>
<path d="M824.0 479.5 829.2 478.2 825.8 476.1 820.6 477.5z" fill="#7cc0d8" stroke="#7cc0d8" stroke-opacity="1" stroke-width="0.5"/>
<path d="M699.7 415.4L727.0 408.4M842.3 476.8L872.7 494.8M872.7 494.8L845.4 501.8" fill="none"/>
<path d="M648.2 423.6 674.8 439.3 674.8 444.5 648.2 428.7z" fill="#7a2a26" stroke="#7a2a26" stroke-opacity="1" stroke-width="0.5"/>
<path d="M648.2 423.6 693.8 411.9 720.4 427.7 674.8 439.3z" fill="#fbca88" stroke="#fbca88" stroke-opacity="1" stroke-width="0.5"/>
<path d="M659.7 427.3 661.7 428.5 703.7 417.8 701.7 416.6z" fill="#eb8474" stroke="#eb8474" stroke-opacity="1" stroke-width="0.5"/>
<path d="M662.2 427.5 659.2 428.3 676.9 438.8 679.9 438.0z" fill="#eb8474" stroke="#eb8474" stroke-opacity="1" stroke-width="0.5"/>
<path d="M659.8 429.6 665.0 428.2 661.6 426.2 656.4 427.6z" fill="#7cc0d8" stroke="#7cc0d8" stroke-opacity="1" stroke-width="0.5"/>
<path d="M648.2 423.6L693.8 411.9M693.8 411.9L699.4 415.2M674.8 439.3L648.2 423.6" fill="none"/>
<path d="M656.6 399.7 659.8 401.7 659.8 429.5 656.6 427.6z" fill="#1c4690"/>
<path d="M659.8 401.7 664.8 400.4 664.8 428.2 659.8 429.5z" fill="#4a90e6"/>
<path d="M865.8 372.2 869.1 374.1 869.1 401.9 865.8 400.0z" fill="#1c4690"/>
<path d="M869.1 374.1 874.1 372.8 874.1 400.7 869.1 401.9z" fill="#4a90e6"/>
<path d="M865.8 372.2 870.8 370.9 874.1 372.8 869.1 374.1z" fill="#7cc0d8"/>
<path d="M746.3 304.5 892.0 390.9 892.0 396.1 746.3 309.7z" fill="#7a2a26" stroke="#7a2a26" stroke-opacity="1" stroke-width="0.5"/>
<path d="M892.0 390.9 923.4 382.9 923.4 388.1 892.0 396.1z" fill="#e36c68" stroke="#e36c68" stroke-opacity="1" stroke-width="0.5"/>
<path d="M746.3 304.5 777.7 296.5 923.4 382.9 892.0 390.9z" fill="#fbca88" stroke="#fbca88" stroke-opacity="1" stroke-width="0.5"/>
<path d="M763.2 302.8 760.2 303.5 902.9 388.1 905.9 387.4z" fill="#eb8474" stroke="#eb8474" stroke-opacity="1" stroke-width="0.5"/>
<path d="M869.0 369.0 874.2 367.7 870.8 365.7 865.6 367.0z" fill="#7cc0d8" stroke="#7cc0d8" stroke-opacity="1" stroke-width="0.5"/>
<path d="M746.3 304.5L777.7 296.5M923.4 382.9L892.0 390.9M892.0 390.9L861.6 372.9" fill="none"/>
<path d="M840.0 376.5 859.3 371.5 859.3 376.7 840.0 381.6z" fill="#e36c68" stroke="#e36c68" stroke-opacity="1" stroke-width="0.5"/>
<path d="M727.0 309.4 746.3 304.5 859.3 371.5 840.0 376.5z" fill="#fbca88" stroke="#fbca88" stroke-opacity="1" stroke-width="0.5"/>
<path d="M727.0 309.4L746.3 304.5M859.3 371.5L840.0 376.5" fill="none"/>
<path d="M954.9 380.0 958.2 382.0 958.2 409.8 954.9 407.9z" fill="#1c4690"/>
<path d="M958.2 382.0 963.2 380.7 963.2 408.5 958.2 409.8z" fill="#4a90e6"/>
<path d="M856.9 504.0 860.2 506.0 860.2 537.1 856.9 535.2z" fill="#1c4690"/>
<path d="M860.2 506.0 865.2 504.7 865.2 535.8 860.2 537.1z" fill="#4a90e6"/>
<path d="M764.8 496.9 768.1 498.9 768.1 530.0 764.8 528.0z" fill="#1c4690"/>
<path d="M768.1 498.9 773.1 497.6 773.1 528.7 768.1 530.0z" fill="#4a90e6"/>
<path d="M671.9 440.1 782.1 505.4 782.1 510.6 671.9 445.2z" fill="#7a2a26" stroke="#7a2a26" stroke-opacity="1" stroke-width="0.5"/>
<path d="M782.1 505.4 830.6 493.0 830.6 498.2 782.1 510.6z" fill="#e36c68" stroke="#e36c68" stroke-opacity="1" stroke-width="0.5"/>
<path d="M671.9 440.1 720.4 427.7 830.6 493.0 782.1 505.4z" fill="#fbca88" stroke="#fbca88" stroke-opacity="1" stroke-width="0.5"/>
<path d="M695.8 448.7 697.8 449.9 739.8 439.2 737.8 438.0z" fill="#eb8474" stroke="#eb8474" stroke-opacity="1" stroke-width="0.5"/>
<path d="M731.9 470.1 733.8 471.3 775.8 460.6 773.9 459.4z" fill="#eb8474" stroke="#eb8474" stroke-opacity="1" stroke-width="0.5"/>
<path d="M768.0 491.5 769.9 492.7 811.9 482.0 810.0 480.8z" fill="#eb8474" stroke="#eb8474" stroke-opacity="1" stroke-width="0.5"/>
<path d="M679.9 438.0 676.9 438.8 787.1 504.1 790.1 503.4z" fill="#eb8474" stroke="#eb8474" stroke-opacity="1" stroke-width="0.5"/>
<path d="M695.9 451.0 701.1 449.6 697.7 447.6 692.5 448.9z" fill="#7cc0d8" stroke="#7cc0d8" stroke-opacity="1" stroke-width="0.5"/>
<path d="M732.0 472.4 737.2 471.0 733.8 469.0 728.6 470.3z" fill="#7cc0d8" stroke="#7cc0d8" stroke-opacity="1" stroke-width="0.5"/>
<path d="M768.0 493.8 773.2 492.4 769.8 490.4 764.6 491.7z" fill="#7cc0d8" stroke="#7cc0d8" stroke-opacity="1" stroke-width="0.5"/>
<path d="M671.9 440.1L673.9 439.5M786.2 504.4L782.1 505.4M782.1 505.4L671.9 440.1" fill="none"/>
<path d="M692.6 421.1 695.9 423.1 695.9 450.9 692.6 449.0z" fill="#1c4690"/>
<path d="M695.9 423.1 700.9 421.8 700.9 449.6 695.9 450.9z" fill="#4a90e6"/>
<path d="M728.7 442.5 732.0 444.5 732.0 472.3 728.7 470.4z" fill="#1c4690"/>
<path d="M732.0 444.5 737.0 443.2 737.0 471.0 732.0 472.3z" fill="#4a90e6"/>
<path d="M901.9 454.4 905.2 456.3 905.2 461.5 901.9 459.6z" fill="#1c4690"/>
<path d="M905.2 456.3 910.2 455.1 910.2 460.2 905.2 461.5z" fill="#4a90e6"/>
<path d="M901.9 454.4 906.9 453.1 910.2 455.1 905.2 456.3z" fill="#7cc0d8"/>
<path d="M954.9 374.9 958.2 376.8 958.2 382.0 954.9 380.0z" fill="#1c4690"/>
<path d="M958.2 376.8 963.2 375.5 963.2 380.7 958.2 382.0z" fill="#4a90e6"/>
<path d="M799.2 555.4 802.9 557.6 802.9 610.7 799.2 608.6z" fill="#1c4690"/>
<path d="M802.9 557.6 810.9 555.6 810.9 608.7 802.9 610.7z" fill="#4a90e6"/>
<path d="M856.9 498.9 860.2 500.8 860.2 506.0 856.9 504.0z" fill="#1c4690"/>
<path d="M860.2 500.8 865.2 499.5 865.2 504.7 860.2 506.0z" fill="#4a90e6"/>
<path d="M901.9 426.6 905.2 428.5 905.2 456.3 901.9 454.4z" fill="#1c4690"/>
<path d="M905.2 428.5 910.2 427.2 910.2 455.1 905.2 456.3z" fill="#4a90e6"/>
<path d="M948.3 331.6 962.4 340.0 962.4 345.1 948.3 336.8z" fill="#7a2a26" stroke="#7a2a26" stroke-opacity="1" stroke-width="0.5"/>
<path d="M962.4 340.0 966.9 338.8 966.9 344.0 962.4 345.1z" fill="#e36c68" stroke="#e36c68" stroke-opacity="1" stroke-width="0.5"/>
<path d="M948.3 331.6 952.8 330.5 966.9 338.8 962.4 340.0z" fill="#fbca88" stroke="#fbca88" stroke-opacity="1" stroke-width="0.5"/>
<path d="M948.3 331.6L952.8 330.5M952.8 330.5L966.9 338.8M966.9 338.8L962.4 340.0" fill="none"/>
<path d="M923.4 349.9 962.4 340.0 962.4 345.1 923.4 355.1z" fill="#e36c68" stroke="#e36c68" stroke-opacity="1" stroke-width="0.5"/>
<path d="M770.2 259.1 809.2 249.1 962.4 340.0 923.4 349.9z" fill="#fbca88" stroke="#fbca88" stroke-opacity="1" stroke-width="0.5"/>
<path d="M816.2 256.2 813.2 257.0 955.9 341.6 958.9 340.9z" fill="#eb8474" stroke="#eb8474" stroke-opacity="1" stroke-width="0.5"/>
<path d="M922.0 322.5 927.2 321.2 923.8 319.1 918.6 320.5z" fill="#7cc0d8" stroke="#7cc0d8" stroke-opacity="1" stroke-width="0.5"/>
<path d="M770.2 259.1L809.2 249.1M809.2 249.1L949.6 332.4M962.4 340.0L923.4 349.9M776.6 262.9L770.2 259.1" fill="none"/>
<path d="M870.1 460.3 872.7 461.8 872.7 467.0 870.1 465.5z" fill="#7a2a26" stroke="#7a2a26" stroke-opacity="1" stroke-width="0.5"/>
<path d="M872.7 461.8 892.0 456.9 892.0 462.1 872.7 467.0z" fill="#e36c68" stroke="#e36c68" stroke-opacity="1" stroke-width="0.5"/>
<path d="M870.1 460.3 889.4 455.4 892.0 456.9 872.7 461.8z" fill="#fbca88" stroke="#fbca88" stroke-opacity="1" stroke-width="0.5"/>
<path d="M870.1 460.3L889.4 455.4M892.0 456.9L872.7 461.8" fill="none"/>
<path d="M845.4 468.8 872.7 461.8 872.7 467.0 845.4 474.0z" fill="#e36c68" stroke="#e36c68" stroke-opacity="1" stroke-width="0.5"/>
<path d="M699.7 382.4 727.0 375.4 872.7 461.8 845.4 468.8z" fill="#fbca88" stroke="#fbca88" stroke-opacity="1" stroke-width="0.5"/>
<path d="M718.2 380.2 715.2 381.0 857.9 465.6 860.9 464.8z" fill="#eb8474" stroke="#eb8474" stroke-opacity="1" stroke-width="0.5"/>
<path d="M824.0 446.5 829.2 445.2 825.8 443.1 820.6 444.5z" fill="#7cc0d8" stroke="#7cc0d8" stroke-opacity="1" stroke-width="0.5"/>
<path d="M699.7 382.4L727.0 375.4M842.3 443.8L872.7 461.8M872.7 461.8L845.4 468.8" fill="none"/>
<path d="M648.2 390.6 674.8 406.3 674.8 411.5 648.2 395.7z" fill="#7a2a26" stroke="#7a2a26" stroke-opacity="1" stroke-width="0.5"/>
<path d="M674.8 406.3 720.4 394.7 720.4 399.9 674.8 411.5z" fill="#e36c68" stroke="#e36c68" stroke-opacity="1" stroke-width="0.5"/>
<path d="M648.2 390.6 693.8 378.9 720.4 394.7 674.8 406.3z" fill="#fbca88" stroke="#fbca88" stroke-opacity="1" stroke-width="0.5"/>
<path d="M659.7 394.3 661.7 395.5 703.7 384.8 701.7 383.6z" fill="#eb8474" stroke="#eb8474" stroke-opacity="1" stroke-width="0.5"/>
<path d="M662.2 394.5 659.2 395.3 676.9 405.8 679.9 405.0z" fill="#eb8474" stroke="#eb8474" stroke-opacity="1" stroke-width="0.5"/>
<path d="M659.8 396.6 665.0 395.2 661.6 393.2 656.4 394.6z" fill="#7cc0d8" stroke="#7cc0d8" stroke-opacity="1" stroke-width="0.5"/>
<path d="M648.2 390.6L693.8 378.9M693.8 378.9L699.4 382.2M674.8 406.3L648.2 390.6" fill="none"/>
<path d="M656.6 366.7 659.8 368.7 659.8 396.5 656.6 394.6z" fill="#1c4690"/>
<path d="M659.8 368.7 664.8 367.4 664.8 395.2 659.8 396.5z" fill="#4a90e6"/>
<path d="M865.8 339.2 869.1 341.1 869.1 368.9 865.8 367.0z" fill="#1c4690"/>
<path d="M869.1 341.1 874.1 339.8 874.1 367.7 869.1 368.9z" fill="#4a90e6"/>
<path d="M865.8 339.2 870.8 337.9 874.1 339.8 869.1 341.1z" fill="#7cc0d8"/>
<path d="M746.3 271.5 892.0 357.9 892.0 363.1 746.3 276.7z" fill="#7a2a26" stroke="#7a2a26" stroke-opacity="1" stroke-width="0.5"/>
<path d="M892.0 357.9 923.4 349.9 923.4 355.1 892.0 363.1z" fill="#e36c68" stroke="#e36c68" stroke-opacity="1" stroke-width="0.5"/>
<path d="M746.3 271.5 777.7 263.5 923.4 349.9 892.0 357.9z" fill="#fbca88" stroke="#fbca88" stroke-opacity="1" stroke-width="0.5"/>
<path d="M763.2 269.8 760.2 270.5 902.9 355.1 905.9 354.4z" fill="#eb8474" stroke="#eb8474" stroke-opacity="1" stroke-width="0.5"/>
<path d="M869.0 336.0 874.2 334.7 870.8 332.7 865.6 334.0z" fill="#7cc0d8" stroke="#7cc0d8" stroke-opacity="1" stroke-width="0.5"/>
<path d="M746.3 271.5L777.7 263.5M923.4 349.9L892.0 357.9M892.0 357.9L861.6 339.9" fill="none"/>
<path d="M840.0 343.5 859.3 338.5 859.3 343.7 840.0 348.6z" fill="#e36c68" stroke="#e36c68" stroke-opacity="1" stroke-width="0.5"/>
<path d="M727.0 276.4 746.3 271.5 859.3 338.5 840.0 343.5z" fill="#fbca88" stroke="#fbca88" stroke-opacity="1" stroke-width="0.5"/>
<path d="M727.0 276.4L746.3 271.5M859.3 338.5L840.0 343.5" fill="none"/>
<path d="M742.5 616.5 754.0 623.3 754.0 629.9 742.5 623.1z" fill="#3c8a88"/>
<path d="M754.0 623.3 776.0 617.7 776.0 624.3 754.0 629.9z" fill="#88e8e8"/>
<path d="M742.5 616.5 764.5 610.9 776.0 617.7 754.0 623.3z" fill="#a8f2f2"/>
<path d="M954.9 347.0 958.2 349.0 958.2 376.8 954.9 374.9z" fill="#1c4690"/>
<path d="M958.2 349.0 963.2 347.7 963.2 375.5 958.2 376.8z" fill="#4a90e6"/>
<path d="M718.8 580.7 751.2 599.9 751.2 607.1 718.8 587.8z" fill="#7a2a26"/>
<path d="M718.8 580.7 722.8 579.7 755.2 598.9 751.2 599.9z" fill="#eb8474"/>
<path d="M856.9 471.0 860.2 473.0 860.2 500.8 856.9 498.9z" fill="#1c4690"/>
<path d="M860.2 473.0 865.2 471.7 865.2 499.5 860.2 500.8z" fill="#4a90e6"/>
<path d="M901.9 421.4 905.2 423.3 905.2 428.5 901.9 426.6z" fill="#1c4690"/>
<path d="M905.2 423.3 910.2 422.1 910.2 427.2 905.2 428.5z" fill="#4a90e6"/>
<path d="M760.3 596.9 802.3 586.2 802.3 593.4 760.3 604.1z" fill="#e36a68"/>
<path d="M757.7 595.4 799.7 584.7 802.3 586.2 760.3 596.9z" fill="#eb8474"/>
<path d="M764.8 463.9 768.1 465.9 768.1 493.7 764.8 491.7z" fill="#1c4690"/>
<path d="M768.1 465.9 773.1 464.6 773.1 492.4 768.1 493.7z" fill="#4a90e6"/>
<path d="M764.8 463.9 769.8 462.6 773.1 464.6 768.1 465.9z" fill="#7cc0d8"/>
<path d="M671.9 407.1 782.1 472.4 782.1 477.6 671.9 412.2z" fill="#7a2a26" stroke="#7a2a26" stroke-opacity="1" stroke-width="0.5"/>
<path d="M782.1 472.4 830.6 460.0 830.6 465.2 782.1 477.6z" fill="#e36c68" stroke="#e36c68" stroke-opacity="1" stroke-width="0.5"/>
<path d="M671.9 407.1 720.4 394.7 830.6 460.0 782.1 472.4z" fill="#fbca88" stroke="#fbca88" stroke-opacity="1" stroke-width="0.5"/>
<path d="M695.8 415.7 697.8 416.9 739.8 406.2 737.8 405.0z" fill="#eb8474" stroke="#eb8474" stroke-opacity="1" stroke-width="0.5"/>
<path d="M731.9 437.1 733.8 438.3 775.8 427.6 773.9 426.4z" fill="#eb8474" stroke="#eb8474" stroke-opacity="1" stroke-width="0.5"/>
<path d="M768.0 458.5 769.9 459.7 811.9 449.0 810.0 447.8z" fill="#eb8474" stroke="#eb8474" stroke-opacity="1" stroke-width="0.5"/>
<path d="M679.9 405.0 676.9 405.8 787.1 471.1 790.1 470.4z" fill="#eb8474" stroke="#eb8474" stroke-opacity="1" stroke-width="0.5"/>
<path d="M695.9 418.0 701.1 416.6 697.7 414.6 692.5 415.9z" fill="#7cc0d8" stroke="#7cc0d8" stroke-opacity="1" stroke-width="0.5"/>
<path d="M732.0 439.4 737.2 438.0 733.8 436.0 728.6 437.3z" fill="#7cc0d8" stroke="#7cc0d8" stroke-opacity="1" stroke-width="0.5"/>
<path d="M768.0 460.8 773.2 459.4 769.8 457.4 764.6 458.7z" fill="#7cc0d8" stroke="#7cc0d8" stroke-opacity="1" stroke-width="0.5"/>
<path d="M671.9 407.1L673.9 406.5M786.2 471.4L782.1 472.4M782.1 472.4L671.9 407.1" fill="none"/>
<path d="M692.6 388.1 695.9 390.1 695.9 417.9 692.6 416.0z" fill="#1c4690"/>
<path d="M695.9 390.1 700.9 388.8 700.9 416.6 695.9 417.9z" fill="#4a90e6"/>
<path d="M728.7 409.5 732.0 411.5 732.0 439.3 728.7 437.4z" fill="#1c4690"/>
<path d="M732.0 411.5 737.0 410.2 737.0 438.0 732.0 439.3z" fill="#4a90e6"/>
<path d="M719.3 564.1 751.7 583.3 751.7 599.8 719.3 580.6z" fill="#2e6a2f"/>
<path d="M719.3 564.1 722.3 563.3 754.7 582.5 751.7 583.3z" fill="#a8f0a2"/>
<path d="M954.9 341.9 958.2 343.8 958.2 349.0 954.9 347.0z" fill="#1c4690"/>
<path d="M958.2 343.8 963.2 342.5 963.2 347.7 958.2 349.0z" fill="#4a90e6"/>
<path d="M786.1 504.4 800.9 513.1 800.9 518.3 786.1 509.6z" fill="#7a2a26" stroke="#7a2a26" stroke-opacity="1" stroke-width="0.5"/>
<path d="M800.9 513.1 845.4 501.8 845.4 507.0 800.9 518.3z" fill="#e36c68" stroke="#e36c68" stroke-opacity="1" stroke-width="0.5"/>
<path d="M786.1 504.4 830.6 493.0 845.4 501.8 800.9 513.1z" fill="#fbca88" stroke="#fbca88" stroke-opacity="1" stroke-width="0.5"/>
<path d="M790.1 503.4 787.1 504.1 801.9 512.9 804.9 512.1z" fill="#eb8474" stroke="#eb8474" stroke-opacity="1" stroke-width="0.5"/>
<path d="M845.4 501.8L800.9 513.1M800.9 513.1L786.1 504.4" fill="none"/>
<path d="M799.2 549.7 802.9 551.9 802.9 557.6 799.2 555.4z" fill="#1c4690"/>
<path d="M802.9 551.9 810.9 549.8 810.9 555.6 802.9 557.6z" fill="#4a90e6"/>
<path d="M799.2 549.7 807.2 547.7 810.9 549.8 802.9 551.9z" fill="#7cc0d8"/>
<path d="M760.0 578.6 802.0 567.9 802.0 586.0 760.0 596.7z" fill="#7de07a"/>
<path d="M758.0 577.4 800.0 566.7 802.0 567.9 760.0 578.6z" fill="#a8f0a2"/>
<path d="M856.9 465.9 860.2 467.8 860.2 473.0 856.9 471.0z" fill="#1c4690"/>
<path d="M860.2 467.8 865.2 466.5 865.2 471.7 860.2 473.0z" fill="#4a90e6"/>
<path d="M901.9 393.6 905.2 395.5 905.2 423.3 901.9 421.4z" fill="#1c4690"/>
<path d="M905.2 395.5 910.2 394.2 910.2 422.1 905.2 423.3z" fill="#4a90e6"/>
<path d="M948.3 298.6 962.4 307.0 962.4 312.1 948.3 303.8z" fill="#7a2a26" stroke="#7a2a26" stroke-opacity="1" stroke-width="0.5"/>
<path d="M962.4 307.0 966.9 305.8 966.9 311.0 962.4 312.1z" fill="#e36c68" stroke="#e36c68" stroke-opacity="1" stroke-width="0.5"/>
<path d="M948.3 298.6 952.8 297.5 966.9 305.8 962.4 307.0z" fill="#fbca88" stroke="#fbca88" stroke-opacity="1" stroke-width="0.5"/>
<path d="M948.3 298.6L952.8 297.5M952.8 297.5L966.9 305.8M966.9 305.8L962.4 307.0" fill="none"/>
<path d="M923.4 316.9 962.4 307.0 962.4 312.1 923.4 322.1z" fill="#e36c68" stroke="#e36c68" stroke-opacity="1" stroke-width="0.5"/>
<path d="M770.2 226.1 809.2 216.1 962.4 307.0 923.4 316.9z" fill="#fbca88" stroke="#fbca88" stroke-opacity="1" stroke-width="0.5"/>
<path d="M816.2 223.2 813.2 224.0 955.9 308.6 958.9 307.9z" fill="#eb8474" stroke="#eb8474" stroke-opacity="1" stroke-width="0.5"/>
<path d="M922.0 289.5 927.2 288.2 923.8 286.1 918.6 287.5z" fill="#7cc0d8" stroke="#7cc0d8" stroke-opacity="1" stroke-width="0.5"/>
<path d="M770.2 226.1L809.2 216.1M809.2 216.1L949.6 299.4M962.4 307.0L923.4 316.9M776.6 229.9L770.2 226.1" fill="none"/>
<path d="M870.1 427.3 872.7 428.8 872.7 434.0 870.1 432.5z" fill="#7a2a26" stroke="#7a2a26" stroke-opacity="1" stroke-width="0.5"/>
<path d="M872.7 428.8 892.0 423.9 892.0 429.1 872.7 434.0z" fill="#e36c68" stroke="#e36c68" stroke-opacity="1" stroke-width="0.5"/>
<path d="M870.1 427.3 889.4 422.4 892.0 423.9 872.7 428.8z" fill="#fbca88" stroke="#fbca88" stroke-opacity="1" stroke-width="0.5"/>
<path d="M870.1 427.3L889.4 422.4M892.0 423.9L872.7 428.8" fill="none"/>
<path d="M845.4 435.8 872.7 428.8 872.7 434.0 845.4 441.0z" fill="#e36c68" stroke="#e36c68" stroke-opacity="1" stroke-width="0.5"/>
<path d="M699.7 349.4 727.0 342.4 872.7 428.8 845.4 435.8z" fill="#fbca88" stroke="#fbca88" stroke-opacity="1" stroke-width="0.5"/>
<path d="M718.2 347.2 715.2 348.0 857.9 432.6 860.9 431.8z" fill="#eb8474" stroke="#eb8474" stroke-opacity="1" stroke-width="0.5"/>
<path d="M824.0 413.5 829.2 412.2 825.8 410.1 820.6 411.5z" fill="#7cc0d8" stroke="#7cc0d8" stroke-opacity="1" stroke-width="0.5"/>
<path d="M699.7 349.4L727.0 342.4M842.3 410.8L872.7 428.8M872.7 428.8L845.4 435.8" fill="none"/>
<path d="M648.2 357.6 674.8 373.3 674.8 378.5 648.2 362.7z" fill="#7a2a26" stroke="#7a2a26" stroke-opacity="1" stroke-width="0.5"/>
<path d="M648.2 357.6 693.8 345.9 720.4 361.7 674.8 373.3z" fill="#fbca88" stroke="#fbca88" stroke-opacity="1" stroke-width="0.5"/>
<path d="M659.7 361.3 661.7 362.5 703.7 351.8 701.7 350.6z" fill="#eb8474" stroke="#eb8474" stroke-opacity="1" stroke-width="0.5"/>
<path d="M662.2 361.5 659.2 362.3 676.9 372.8 679.9 372.0z" fill="#eb8474" stroke="#eb8474" stroke-opacity="1" stroke-width="0.5"/>
<path d="M659.8 363.6 665.0 362.2 661.6 360.2 656.4 361.6z" fill="#7cc0d8" stroke="#7cc0d8" stroke-opacity="1" stroke-width="0.5"/>
<path d="M648.2 357.6L693.8 345.9M693.8 345.9L699.4 349.2M674.8 373.3L648.2 357.6" fill="none"/>
<path d="M656.6 333.7 659.8 335.7 659.8 363.5 656.6 361.6z" fill="#1c4690"/>
<path d="M659.8 335.7 664.8 334.4 664.8 362.2 659.8 363.5z" fill="#4a90e6"/>
<path d="M865.8 306.2 869.1 308.1 869.1 335.9 865.8 334.0z" fill="#1c4690"/>
<path d="M869.1 308.1 874.1 306.8 874.1 334.7 869.1 335.9z" fill="#4a90e6"/>
<path d="M865.8 306.2 870.8 304.9 874.1 306.8 869.1 308.1z" fill="#7cc0d8"/>
<path d="M746.3 238.5 892.0 324.9 892.0 330.1 746.3 243.7z" fill="#7a2a26" stroke="#7a2a26" stroke-opacity="1" stroke-width="0.5"/>
<path d="M892.0 324.9 923.4 316.9 923.4 322.1 892.0 330.1z" fill="#e36c68" stroke="#e36c68" stroke-opacity="1" stroke-width="0.5"/>
<path d="M746.3 238.5 777.7 230.5 923.4 316.9 892.0 324.9z" fill="#fbca88" stroke="#fbca88" stroke-opacity="1" stroke-width="0.5"/>
<path d="M763.2 236.8 760.2 237.5 902.9 322.1 905.9 321.4z" fill="#eb8474" stroke="#eb8474" stroke-opacity="1" stroke-width="0.5"/>
<path d="M869.0 303.0 874.2 301.7 870.8 299.7 865.6 301.0z" fill="#7cc0d8" stroke="#7cc0d8" stroke-opacity="1" stroke-width="0.5"/>
<path d="M746.3 238.5L777.7 230.5M923.4 316.9L892.0 324.9M892.0 324.9L861.6 306.9" fill="none"/>
<path d="M840.0 310.5 859.3 305.5 859.3 310.7 840.0 315.6z" fill="#e36c68" stroke="#e36c68" stroke-opacity="1" stroke-width="0.5"/>
<path d="M727.0 243.4 746.3 238.5 859.3 305.5 840.0 310.5z" fill="#fbca88" stroke="#fbca88" stroke-opacity="1" stroke-width="0.5"/>
<path d="M727.0 243.4L746.3 238.5M859.3 305.5L840.0 310.5" fill="none"/>
<path d="M954.9 314.0 958.2 316.0 958.2 343.8 954.9 341.9z" fill="#1c4690"/>
<path d="M958.2 316.0 963.2 314.7 963.2 342.5 958.2 343.8z" fill="#4a90e6"/>
<path d="M800.9 518.3 804.2 520.3 804.2 551.4 800.9 549.4z" fill="#1c4690"/>
<path d="M804.2 520.3 809.2 519.0 809.2 550.1 804.2 551.4z" fill="#4a90e6"/>
<path d="M856.9 438.0 860.2 440.0 860.2 467.8 856.9 465.9z" fill="#1c4690"/>
<path d="M860.2 440.0 865.2 438.7 865.2 466.5 860.2 467.8z" fill="#4a90e6"/>
<path d="M901.9 388.4 905.2 390.3 905.2 395.5 901.9 393.6z" fill="#1c4690"/>
<path d="M905.2 390.3 910.2 389.1 910.2 394.2 905.2 395.5z" fill="#4a90e6"/>
<path d="M764.8 430.9 768.1 432.9 768.1 460.7 764.8 458.7z" fill="#1c4690"/>
<path d="M768.1 432.9 773.1 431.6 773.1 459.4 768.1 460.7z" fill="#4a90e6"/>
<path d="M764.8 430.9 769.8 429.6 773.1 431.6 768.1 432.9z" fill="#7cc0d8"/>
<path d="M671.9 374.1 782.1 439.4 782.1 444.6 671.9 379.2z" fill="#7a2a26" stroke="#7a2a26" stroke-opacity="1" stroke-width="0.5"/>
<path d="M782.1 439.4 830.6 427.0 830.6 432.2 782.1 444.6z" fill="#e36c68" stroke="#e36c68" stroke-opacity="1" stroke-width="0.5"/>
<path d="M671.9 374.1 720.4 361.7 830.6 427.0 782.1 439.4z" fill="#fbca88" stroke="#fbca88" stroke-opacity="1" stroke-width="0.5"/>
<path d="M695.8 382.7 697.8 383.9 739.8 373.2 737.8 372.0z" fill="#eb8474" stroke="#eb8474" stroke-opacity="1" stroke-width="0.5"/>
<path d="M731.9 404.1 733.8 405.3 775.8 394.6 773.9 393.4z" fill="#eb8474" stroke="#eb8474" stroke-opacity="1" stroke-width="0.5"/>
<path d="M768.0 425.5 769.9 426.7 811.9 416.0 810.0 414.8z" fill="#eb8474" stroke="#eb8474" stroke-opacity="1" stroke-width="0.5"/>
<path d="M679.9 372.0 676.9 372.8 787.1 438.1 790.1 437.4z" fill="#eb8474" stroke="#eb8474" stroke-opacity="1" stroke-width="0.5"/>
<path d="M695.9 385.0 701.1 383.6 697.7 381.6 692.5 382.9z" fill="#7cc0d8" stroke="#7cc0d8" stroke-opacity="1" stroke-width="0.5"/>
<path d="M732.0 406.4 737.2 405.0 733.8 403.0 728.6 404.3z" fill="#7cc0d8" stroke="#7cc0d8" stroke-opacity="1" stroke-width="0.5"/>
<path d="M768.0 427.8 773.2 426.4 769.8 424.4 764.6 425.7z" fill="#7cc0d8" stroke="#7cc0d8" stroke-opacity="1" stroke-width="0.5"/>
<path d="M671.9 374.1L673.9 373.5M786.2 438.4L782.1 439.4M782.1 439.4L671.9 374.1" fill="none"/>
<path d="M692.6 355.1 695.9 357.1 695.9 384.9 692.6 383.0z" fill="#1c4690"/>
<path d="M695.9 357.1 700.9 355.8 700.9 383.6 695.9 384.9z" fill="#4a90e6"/>
<path d="M728.7 376.5 732.0 378.5 732.0 406.3 728.7 404.4z" fill="#1c4690"/>
<path d="M732.0 378.5 737.0 377.2 737.0 405.0 732.0 406.3z" fill="#4a90e6"/>
<path d="M749.2 568.2 752.9 570.4 752.9 623.5 749.2 621.3z" fill="#1c4690"/>
<path d="M752.9 570.4 760.9 568.3 760.9 621.4 752.9 623.5z" fill="#4a90e6"/>
<path d="M954.9 308.9 958.2 310.8 958.2 316.0 954.9 314.0z" fill="#1c4690"/>
<path d="M958.2 310.8 963.2 309.5 963.2 314.7 958.2 316.0z" fill="#4a90e6"/>
<path d="M786.1 471.4 800.9 480.1 800.9 485.3 786.1 476.6z" fill="#7a2a26" stroke="#7a2a26" stroke-opacity="1" stroke-width="0.5"/>
<path d="M800.9 480.1 845.4 468.8 845.4 474.0 800.9 485.3z" fill="#e36c68" stroke="#e36c68" stroke-opacity="1" stroke-width="0.5"/>
<path d="M786.1 471.4 830.6 460.0 845.4 468.8 800.9 480.1z" fill="#fbca88" stroke="#fbca88" stroke-opacity="1" stroke-width="0.5"/>
<path d="M790.1 470.4 787.1 471.1 801.9 479.9 804.9 479.1z" fill="#eb8474" stroke="#eb8474" stroke-opacity="1" stroke-width="0.5"/>
<path d="M845.4 468.8L800.9 480.1M800.9 480.1L786.1 471.4" fill="none"/>
<path d="M800.9 513.1 804.2 515.1 804.2 520.3 800.9 518.3z" fill="#1c4690"/>
<path d="M804.2 515.1 809.2 513.8 809.2 519.0 804.2 520.3z" fill="#4a90e6"/>
<path d="M856.9 432.9 860.2 434.8 860.2 440.0 856.9 438.0z" fill="#1c4690"/>
<path d="M860.2 434.8 865.2 433.5 865.2 438.7 860.2 440.0z" fill="#4a90e6"/>
<path d="M901.9 360.6 905.2 362.5 905.2 390.3 901.9 388.4z" fill="#1c4690"/>
<path d="M905.2 362.5 910.2 361.2 910.2 389.1 905.2 390.3z" fill="#4a90e6"/>
<path d="M948.3 265.6 962.4 274.0 962.4 279.1 948.3 270.8z" fill="#7a2a26" stroke="#7a2a26" stroke-opacity="1" stroke-width="0.5"/>
<path d="M962.4 274.0 966.9 272.8 966.9 278.0 962.4 279.1z" fill="#e36c68" stroke="#e36c68" stroke-opacity="1" stroke-width="0.5"/>
<path d="M948.3 265.6 952.8 264.5 966.9 272.8 962.4 274.0z" fill="#fbca88" stroke="#fbca88" stroke-opacity="1" stroke-width="0.5"/>
<path d="M948.3 265.6L952.8 264.5M952.8 264.5L966.9 272.8M966.9 272.8L962.4 274.0" fill="none"/>
<path d="M770.2 193.1 923.4 283.9 923.4 289.1 770.2 198.2z" fill="#7a2a26" stroke="#7a2a26" stroke-opacity="1" stroke-width="0.5"/>
<path d="M923.4 283.9 962.4 274.0 962.4 279.1 923.4 289.1z" fill="#e36c68" stroke="#e36c68" stroke-opacity="1" stroke-width="0.5"/>
<path d="M770.2 193.1 809.2 183.1 962.4 274.0 923.4 283.9z" fill="#fbca88" stroke="#fbca88" stroke-opacity="1" stroke-width="0.5"/>
<path d="M815.7 191.2 813.7 190.0 779.7 198.7 781.7 199.9z" fill="#eb8474" stroke="#eb8474" stroke-opacity="1" stroke-width="0.5"/>
<path d="M851.8 212.6 849.8 211.4 815.8 220.1 817.8 221.3z" fill="#eb8474" stroke="#eb8474" stroke-opacity="1" stroke-width="0.5"/>
<path d="M887.8 234.0 885.9 232.8 851.9 241.5 853.8 242.7z" fill="#eb8474" stroke="#eb8474" stroke-opacity="1" stroke-width="0.5"/>
<path d="M923.9 255.4 922.0 254.2 888.0 262.9 889.9 264.1z" fill="#eb8474" stroke="#eb8474" stroke-opacity="1" stroke-width="0.5"/>
<path d="M816.2 190.2 813.2 191.0 955.9 275.6 958.9 274.9z" fill="#eb8474" stroke="#eb8474" stroke-opacity="1" stroke-width="0.5"/>
<path d="M813.8 192.3 819.0 191.0 815.6 189.0 810.4 190.3z" fill="#7cc0d8" stroke="#7cc0d8" stroke-opacity="1" stroke-width="0.5"/>
<path d="M849.9 213.7 855.1 212.4 851.7 210.4 846.5 211.7z" fill="#7cc0d8" stroke="#7cc0d8" stroke-opacity="1" stroke-width="0.5"/>
<path d="M886.0 235.1 891.2 233.8 887.8 231.7 882.6 233.1z" fill="#7cc0d8" stroke="#7cc0d8" stroke-opacity="1" stroke-width="0.5"/>
<path d="M922.0 256.5 927.2 255.2 923.8 253.1 918.6 254.5z" fill="#7cc0d8" stroke="#7cc0d8" stroke-opacity="1" stroke-width="0.5"/>
<path d="M959.9 274.5 954.7 275.9 954.8 275.9 960.0 274.6z" fill="#7cc0d8" stroke="#7cc0d8" stroke-opacity="1" stroke-width="0.5"/>
<path d="M770.2 193.1L809.2 183.1M809.2 183.1L949.6 266.4M962.4 274.0L923.4 283.9M776.6 196.9L770.2 193.1" fill="none"/>
<path d="M870.1 394.3 872.7 395.8 872.7 401.0 870.1 399.5z" fill="#7a2a26" stroke="#7a2a26" stroke-opacity="1" stroke-width="0.5"/>
<path d="M872.7 395.8 892.0 390.9 892.0 396.1 872.7 401.0z" fill="#e36c68" stroke="#e36c68" stroke-opacity="1" stroke-width="0.5"/>
<path d="M870.1 394.3 889.4 389.4 892.0 390.9 872.7 395.8z" fill="#fbca88" stroke="#fbca88" stroke-opacity="1" stroke-width="0.5"/>
<path d="M870.1 394.3L889.4 389.4M892.0 390.9L872.7 395.8" fill="none"/>
<path d="M845.4 402.8 872.7 395.8 872.7 401.0 845.4 408.0z" fill="#e36c68" stroke="#e36c68" stroke-opacity="1" stroke-width="0.5"/>
<path d="M699.7 316.4 727.0 309.4 872.7 395.8 845.4 402.8z" fill="#fbca88" stroke="#fbca88" stroke-opacity="1" stroke-width="0.5"/>
<path d="M718.2 314.2 715.2 315.0 857.9 399.6 860.9 398.8z" fill="#eb8474" stroke="#eb8474" stroke-opacity="1" stroke-width="0.5"/>
<path d="M824.0 380.5 829.2 379.2 825.8 377.1 820.6 378.5z" fill="#7cc0d8" stroke="#7cc0d8" stroke-opacity="1" stroke-width="0.5"/>
<path d="M699.7 316.4L727.0 309.4M842.3 377.8L872.7 395.8M872.7 395.8L845.4 402.8" fill="none"/>
<path d="M648.2 324.6 674.8 340.3 674.8 345.5 648.2 329.7z" fill="#7a2a26" stroke="#7a2a26" stroke-opacity="1" stroke-width="0.5"/>
<path d="M648.2 324.6 693.8 312.9 720.4 328.7 674.8 340.3z" fill="#fbca88" stroke="#fbca88" stroke-opacity="1" stroke-width="0.5"/>
<path d="M659.7 328.3 661.7 329.5 703.7 318.8 701.7 317.6z" fill="#eb8474" stroke="#eb8474" stroke-opacity="1" stroke-width="0.5"/>
<path d="M662.2 328.5 659.2 329.3 676.9 339.8 679.9 339.0z" fill="#eb8474" stroke="#eb8474" stroke-opacity="1" stroke-width="0.5"/>
<path d="M659.8 330.6 665.0 329.2 661.6 327.2 656.4 328.6z" fill="#7cc0d8" stroke="#7cc0d8" stroke-opacity="1" stroke-width="0.5"/>
<path d="M648.2 324.6L693.8 312.9M693.8 312.9L699.4 316.2M674.8 340.3L648.2 324.6" fill="none"/>
<path d="M656.6 300.7 659.8 302.7 659.8 330.5 656.6 328.6z" fill="#1c4690"/>
<path d="M659.8 302.7 664.8 301.4 664.8 329.2 659.8 330.5z" fill="#4a90e6"/>
<path d="M865.8 273.2 869.1 275.1 869.1 302.9 865.8 301.0z" fill="#1c4690"/>
<path d="M869.1 275.1 874.1 273.8 874.1 301.7 869.1 302.9z" fill="#4a90e6"/>
<path d="M865.8 273.2 870.8 271.9 874.1 273.8 869.1 275.1z" fill="#7cc0d8"/>
<path d="M746.3 205.5 892.0 291.9 892.0 297.1 746.3 210.7z" fill="#7a2a26" stroke="#7a2a26" stroke-opacity="1" stroke-width="0.5"/>
<path d="M892.0 291.9 923.4 283.9 923.4 289.1 892.0 297.1z" fill="#e36c68" stroke="#e36c68" stroke-opacity="1" stroke-width="0.5"/>
<path d="M746.3 205.5 777.7 197.5 923.4 283.9 892.0 291.9z" fill="#fbca88" stroke="#fbca88" stroke-opacity="1" stroke-width="0.5"/>
<path d="M784.4 228.1 786.4 229.3 817.8 221.3 815.8 220.1z" fill="#eb8474" stroke="#eb8474" stroke-opacity="1" stroke-width="0.5"/>
<path d="M820.5 249.5 822.4 250.7 853.8 242.7 851.9 241.5z" fill="#eb8474" stroke="#eb8474" stroke-opacity="1" stroke-width="0.5"/>
<path d="M856.6 270.9 858.5 272.1 889.9 264.1 888.0 262.9z" fill="#eb8474" stroke="#eb8474" stroke-opacity="1" stroke-width="0.5"/>
<path d="M763.2 203.8 760.2 204.5 902.9 289.1 905.9 288.4z" fill="#eb8474" stroke="#eb8474" stroke-opacity="1" stroke-width="0.5"/>
<path d="M796.9 227.2 802.1 225.9 798.7 223.9 793.5 225.2z" fill="#7cc0d8" stroke="#7cc0d8" stroke-opacity="1" stroke-width="0.5"/>
<path d="M833.0 248.6 838.2 247.3 834.8 245.3 829.6 246.6z" fill="#7cc0d8" stroke="#7cc0d8" stroke-opacity="1" stroke-width="0.5"/>
<path d="M869.0 270.0 874.2 268.7 870.8 266.7 865.6 268.0z" fill="#7cc0d8" stroke="#7cc0d8" stroke-opacity="1" stroke-width="0.5"/>
<path d="M906.9 288.1 901.7 289.4 901.8 289.4 907.0 288.1z" fill="#7cc0d8" stroke="#7cc0d8" stroke-opacity="1" stroke-width="0.5"/>
<path d="M746.3 205.5L777.7 197.5M923.4 283.9L892.0 291.9M892.0 291.9L861.6 273.9" fill="none"/>
<path d="M794.6 194.5 817.2 207.9 817.2 235.9 794.6 222.5z" fill="#2e6a2f"/>
<path d="M817.2 207.9 820.7 207.0 820.7 235.0 817.2 235.9z" fill="#7de07a"/>
<path d="M840.0 277.5 859.3 272.5 859.3 277.7 840.0 282.6z" fill="#e36c68" stroke="#e36c68" stroke-opacity="1" stroke-width="0.5"/>
<path d="M727.0 210.4 746.3 205.5 859.3 272.5 840.0 277.5z" fill="#fbca88" stroke="#fbca88" stroke-opacity="1" stroke-width="0.5"/>
<path d="M729.0 211.6 731.0 212.8 750.3 207.9 748.3 206.7z" fill="#eb8474" stroke="#eb8474" stroke-opacity="1" stroke-width="0.5"/>
<path d="M765.1 233.0 767.1 234.2 786.4 229.3 784.4 228.1z" fill="#eb8474" stroke="#eb8474" stroke-opacity="1" stroke-width="0.5"/>
<path d="M801.2 254.4 803.1 255.6 822.4 250.7 820.5 249.5z" fill="#eb8474" stroke="#eb8474" stroke-opacity="1" stroke-width="0.5"/>
<path d="M837.3 275.8 839.2 277.0 858.5 272.1 856.6 270.9z" fill="#eb8474" stroke="#eb8474" stroke-opacity="1" stroke-width="0.5"/>
<path d="M727.0 210.4L746.3 205.5M859.3 272.5L840.0 277.5" fill="none"/>
<path d="M768.1 201.2 783.2 210.2 783.2 238.2 768.1 229.3z" fill="#2e6a2f"/>
<path d="M783.2 210.2 805.2 204.6 805.2 232.6 783.2 238.2z" fill="#7de07a"/>
<path d="M954.9 281.0 958.2 283.0 958.2 310.8 954.9 308.9z" fill="#1c4690"/>
<path d="M958.2 283.0 963.2 281.7 963.2 309.5 958.2 310.8z" fill="#4a90e6"/>
<path d="M800.9 485.3 804.2 487.3 804.2 515.1 800.9 513.1z" fill="#1c4690"/>
<path d="M804.2 487.3 809.2 486.0 809.2 513.8 804.2 515.1z" fill="#4a90e6"/>
<path d="M749.2 562.5 752.9 564.6 752.9 570.4 749.2 568.2z" fill="#1c4690"/>
<path d="M752.9 564.6 760.9 562.6 760.9 568.3 752.9 570.4z" fill="#4a90e6"/>
<path d="M749.2 562.5 757.2 560.4 760.9 562.6 752.9 564.6z" fill="#7cc0d8"/>
<path d="M856.9 405.0 860.2 407.0 860.2 434.8 856.9 432.9z" fill="#1c4690"/>
<path d="M860.2 407.0 865.2 405.7 865.2 433.5 860.2 434.8z" fill="#4a90e6"/>
<path d="M901.9 355.4 905.2 357.3 905.2 362.5 901.9 360.6z" fill="#1c4690"/>
<path d="M905.2 357.3 910.2 356.1 910.2 361.2 905.2 362.5z" fill="#4a90e6"/>
<path d="M764.8 397.9 768.1 399.9 768.1 427.7 764.8 425.7z" fill="#1c4690"/>
<path d="M768.1 399.9 773.1 398.6 773.1 426.4 768.1 427.7z" fill="#4a90e6"/>
<path d="M764.8 397.9 769.8 396.6 773.1 398.6 768.1 399.9z" fill="#7cc0d8"/>
<path d="M671.9 341.1 782.1 406.4 782.1 411.6 671.9 346.2z" fill="#7a2a26" stroke="#7a2a26" stroke-opacity="1" stroke-width="0.5"/>
<path d="M782.1 406.4 830.6 394.0 830.6 399.2 782.1 411.6z" fill="#e36c68" stroke="#e36c68" stroke-opacity="1" stroke-width="0.5"/>
<path d="M671.9 341.1 720.4 328.7 830.6 394.0 782.1 406.4z" fill="#fbca88" stroke="#fbca88" stroke-opacity="1" stroke-width="0.5"/>
<path d="M695.8 349.7 697.8 350.9 739.8 340.2 737.8 339.0z" fill="#eb8474" stroke="#eb8474" stroke-opacity="1" stroke-width="0.5"/>
<path d="M731.9 371.1 733.8 372.3 775.8 361.6 773.9 360.4z" fill="#eb8474" stroke="#eb8474" stroke-opacity="1" stroke-width="0.5"/>
<path d="M768.0 392.5 769.9 393.7 811.9 383.0 810.0 381.8z" fill="#eb8474" stroke="#eb8474" stroke-opacity="1" stroke-width="0.5"/>
<path d="M679.9 339.0 676.9 339.8 787.1 405.1 790.1 404.4z" fill="#eb8474" stroke="#eb8474" stroke-opacity="1" stroke-width="0.5"/>
<path d="M695.9 352.0 701.1 350.6 697.7 348.6 692.5 349.9z" fill="#7cc0d8" stroke="#7cc0d8" stroke-opacity="1" stroke-width="0.5"/>
<path d="M732.0 373.4 737.2 372.0 733.8 370.0 728.6 371.3z" fill="#7cc0d8" stroke="#7cc0d8" stroke-opacity="1" stroke-width="0.5"/>
<path d="M768.0 394.8 773.2 393.4 769.8 391.4 764.6 392.7z" fill="#7cc0d8" stroke="#7cc0d8" stroke-opacity="1" stroke-width="0.5"/>
<path d="M671.9 341.1L673.9 340.5M786.2 405.4L782.1 406.4M782.1 406.4L671.9 341.1" fill="none"/>
<path d="M692.6 322.1 695.9 324.1 695.9 351.9 692.6 350.0z" fill="#1c4690"/>
<path d="M695.9 324.1 700.9 322.8 700.9 350.6 695.9 351.9z" fill="#4a90e6"/>
<path d="M728.7 343.5 732.0 345.5 732.0 373.3 728.7 371.4z" fill="#1c4690"/>
<path d="M732.0 345.5 737.0 344.2 737.0 372.0 732.0 373.3z" fill="#4a90e6"/>
<path d="M954.9 275.9 958.2 277.8 958.2 283.0 954.9 281.0z" fill="#1c4690"/>
<path d="M958.2 277.8 963.2 276.5 963.2 281.7 958.2 283.0z" fill="#4a90e6"/>
<path d="M954.9 275.9 959.9 274.6 963.2 276.5 958.2 277.8z" fill="#7cc0d8"/>
<path d="M786.1 438.4 800.9 447.1 800.9 452.3 786.1 443.6z" fill="#7a2a26" stroke="#7a2a26" stroke-opacity="1" stroke-width="0.5"/>
<path d="M800.9 447.1 845.4 435.8 845.4 441.0 800.9 452.3z" fill="#e36c68" stroke="#e36c68" stroke-opacity="1" stroke-width="0.5"/>
<path d="M786.1 438.4 830.6 427.0 845.4 435.8 800.9 447.1z" fill="#fbca88" stroke="#fbca88" stroke-opacity="1" stroke-width="0.5"/>
<path d="M790.1 437.4 787.1 438.1 801.9 446.9 804.9 446.1z" fill="#eb8474" stroke="#eb8474" stroke-opacity="1" stroke-width="0.5"/>
<path d="M845.4 435.8L800.9 447.1M800.9 447.1L786.1 438.4" fill="none"/>
<path d="M800.9 480.1 804.2 482.1 804.2 487.3 800.9 485.3z" fill="#1c4690"/>
<path d="M804.2 482.1 809.2 480.8 809.2 486.0 804.2 487.3z" fill="#4a90e6"/>
<path d="M856.9 399.9 860.2 401.8 860.2 407.0 856.9 405.0z" fill="#1c4690"/>
<path d="M860.2 401.8 865.2 400.5 865.2 405.7 860.2 407.0z" fill="#4a90e6"/>
<path d="M901.9 327.6 905.2 329.5 905.2 357.3 901.9 355.4z" fill="#1c4690"/>
<path d="M905.2 329.5 910.2 328.2 910.2 356.1 905.2 357.3z" fill="#4a90e6"/>
<path d="M870.1 361.3 872.7 362.8 872.7 368.0 870.1 366.5z" fill="#7a2a26" stroke="#7a2a26" stroke-opacity="1" stroke-width="0.5"/>
<path d="M872.7 362.8 892.0 357.9 892.0 363.1 872.7 368.0z" fill="#e36c68" stroke="#e36c68" stroke-opacity="1" stroke-width="0.5"/>
<path d="M870.1 361.3 889.4 356.4 892.0 357.9 872.7 362.8z" fill="#fbca88" stroke="#fbca88" stroke-opacity="1" stroke-width="0.5"/>
<path d="M870.1 361.3L889.4 356.4M892.0 357.9L872.7 362.8" fill="none"/>
<path d="M845.4 369.8 872.7 362.8 872.7 368.0 845.4 375.0z" fill="#e36c68" stroke="#e36c68" stroke-opacity="1" stroke-width="0.5"/>
<path d="M699.7 283.4 727.0 276.4 872.7 362.8 845.4 369.8z" fill="#fbca88" stroke="#fbca88" stroke-opacity="1" stroke-width="0.5"/>
<path d="M718.2 281.2 715.2 282.0 857.9 366.6 860.9 365.8z" fill="#eb8474" stroke="#eb8474" stroke-opacity="1" stroke-width="0.5"/>
<path d="M824.0 347.5 829.2 346.2 825.8 344.1 820.6 345.5z" fill="#7cc0d8" stroke="#7cc0d8" stroke-opacity="1" stroke-width="0.5"/>
<path d="M699.7 283.4L727.0 276.4M842.3 344.8L872.7 362.8M872.7 362.8L845.4 369.8" fill="none"/>
<path d="M648.2 291.6 674.8 307.3 674.8 312.5 648.2 296.7z" fill="#7a2a26" stroke="#7a2a26" stroke-opacity="1" stroke-width="0.5"/>
<path d="M648.2 291.6 693.8 279.9 720.4 295.7 674.8 307.3z" fill="#fbca88" stroke="#fbca88" stroke-opacity="1" stroke-width="0.5"/>
<path d="M659.7 295.3 661.7 296.5 703.7 285.8 701.7 284.6z" fill="#eb8474" stroke="#eb8474" stroke-opacity="1" stroke-width="0.5"/>
<path d="M662.2 295.5 659.2 296.3 676.9 306.8 679.9 306.0z" fill="#eb8474" stroke="#eb8474" stroke-opacity="1" stroke-width="0.5"/>
<path d="M659.8 297.6 665.0 296.2 661.6 294.2 656.4 295.6z" fill="#7cc0d8" stroke="#7cc0d8" stroke-opacity="1" stroke-width="0.5"/>
<path d="M648.2 291.6L693.8 279.9M693.8 279.9L699.4 283.2M674.8 307.3L648.2 291.6" fill="none"/>
<path d="M656.6 267.7 659.8 269.7 659.8 297.5 656.6 295.6z" fill="#1c4690"/>
<path d="M659.8 269.7 664.8 268.4 664.8 296.2 659.8 297.5z" fill="#4a90e6"/>
<path d="M800.9 452.3 804.2 454.3 804.2 482.1 800.9 480.1z" fill="#1c4690"/>
<path d="M804.2 454.3 809.2 453.0 809.2 480.8 804.2 482.1z" fill="#4a90e6"/>
<path d="M800.9 452.3 805.9 451.0 809.2 453.0 804.2 454.3z" fill="#7cc0d8"/>
<path d="M856.9 372.0 860.2 374.0 860.2 401.8 856.9 399.9z" fill="#1c4690"/>
<path d="M860.2 374.0 865.2 372.7 865.2 400.5 860.2 401.8z" fill="#4a90e6"/>
<path d="M856.9 372.0 861.9 370.8 865.2 372.7 860.2 374.0z" fill="#7cc0d8"/>
<path d="M901.9 322.4 905.2 324.3 905.2 329.5 901.9 327.6z" fill="#1c4690"/>
<path d="M905.2 324.3 910.2 323.1 910.2 328.2 905.2 329.5z" fill="#4a90e6"/>
<path d="M901.9 322.4 906.9 321.1 910.2 323.1 905.2 324.3z" fill="#7cc0d8"/>
<path d="M764.8 364.9 768.1 366.9 768.1 394.7 764.8 392.7z" fill="#1c4690"/>
<path d="M768.1 366.9 773.1 365.6 773.1 393.4 768.1 394.7z" fill="#4a90e6"/>
<path d="M764.8 364.9 769.8 363.6 773.1 365.6 768.1 366.9z" fill="#7cc0d8"/>
<path d="M671.9 308.1 782.1 373.4 782.1 378.6 671.9 313.2z" fill="#7a2a26" stroke="#7a2a26" stroke-opacity="1" stroke-width="0.5"/>
<path d="M782.1 373.4 830.6 361.0 830.6 366.2 782.1 378.6z" fill="#e36c68" stroke="#e36c68" stroke-opacity="1" stroke-width="0.5"/>
<path d="M671.9 308.1 720.4 295.7 830.6 361.0 782.1 373.4z" fill="#fbca88" stroke="#fbca88" stroke-opacity="1" stroke-width="0.5"/>
<path d="M695.8 316.7 697.8 317.9 739.8 307.2 737.8 306.0z" fill="#eb8474" stroke="#eb8474" stroke-opacity="1" stroke-width="0.5"/>
<path d="M731.9 338.1 733.8 339.3 775.8 328.6 773.9 327.4z" fill="#eb8474" stroke="#eb8474" stroke-opacity="1" stroke-width="0.5"/>
<path d="M768.0 359.5 769.9 360.7 811.9 350.0 810.0 348.8z" fill="#eb8474" stroke="#eb8474" stroke-opacity="1" stroke-width="0.5"/>
<path d="M679.9 306.0 676.9 306.8 787.1 372.1 790.1 371.4z" fill="#eb8474" stroke="#eb8474" stroke-opacity="1" stroke-width="0.5"/>
<path d="M695.9 319.0 701.1 317.6 697.7 315.6 692.5 316.9z" fill="#7cc0d8" stroke="#7cc0d8" stroke-opacity="1" stroke-width="0.5"/>
<path d="M732.0 340.4 737.2 339.0 733.8 337.0 728.6 338.3z" fill="#7cc0d8" stroke="#7cc0d8" stroke-opacity="1" stroke-width="0.5"/>
<path d="M768.0 361.8 773.2 360.4 769.8 358.4 764.6 359.7z" fill="#7cc0d8" stroke="#7cc0d8" stroke-opacity="1" stroke-width="0.5"/>
<path d="M671.9 308.1L673.9 307.5M786.2 372.4L782.1 373.4M782.1 373.4L671.9 308.1" fill="none"/>
<path d="M692.6 289.1 695.9 291.1 695.9 318.9 692.6 317.0z" fill="#1c4690"/>
<path d="M695.9 291.1 700.9 289.8 700.9 317.6 695.9 318.9z" fill="#4a90e6"/>
<path d="M728.7 310.5 732.0 312.5 732.0 340.3 728.7 338.4z" fill="#1c4690"/>
<path d="M732.0 312.5 737.0 311.2 737.0 339.0 732.0 340.3z" fill="#4a90e6"/>
<path d="M786.1 405.4 800.9 414.1 800.9 419.3 786.1 410.6z" fill="#7a2a26" stroke="#7a2a26" stroke-opacity="1" stroke-width="0.5"/>
<path d="M800.9 414.1 845.4 402.8 845.4 408.0 800.9 419.3z" fill="#e36c68" stroke="#e36c68" stroke-opacity="1" stroke-width="0.5"/>
<path d="M786.1 405.4 830.6 394.0 845.4 402.8 800.9 414.1z" fill="#fbca88" stroke="#fbca88" stroke-opacity="1" stroke-width="0.5"/>
<path d="M790.1 404.4 787.1 405.1 801.9 413.9 804.9 413.1z" fill="#eb8474" stroke="#eb8474" stroke-opacity="1" stroke-width="0.5"/>
<path d="M845.4 402.8L800.9 414.1M800.9 414.1L786.1 405.4" fill="none"/>
<path d="M800.9 447.1 804.2 449.1 804.2 454.3 800.9 452.3z" fill="#1c4690"/>
<path d="M804.2 449.1 809.2 447.8 809.2 453.0 804.2 454.3z" fill="#4a90e6"/>
<path d="M856.9 366.9 860.2 368.8 860.2 374.0 856.9 372.0z" fill="#1c4690"/>
<path d="M860.2 368.8 865.2 367.5 865.2 372.7 860.2 374.0z" fill="#4a90e6"/>
<path d="M901.9 294.6 905.2 296.5 905.2 324.3 901.9 322.4z" fill="#1c4690"/>
<path d="M905.2 296.5 910.2 295.2 910.2 323.1 905.2 324.3z" fill="#4a90e6"/>
<path d="M872.7 329.8 892.0 324.9 892.0 330.1 872.7 335.0z" fill="#e36c68" stroke="#e36c68" stroke-opacity="1" stroke-width="0.5"/>
<path d="M870.1 328.3 889.4 323.4 892.0 324.9 872.7 329.8z" fill="#fbca88" stroke="#fbca88" stroke-opacity="1" stroke-width="0.5"/>
<path d="M870.1 328.3L889.4 323.4M892.0 324.9L872.7 329.8" fill="none"/>
<path d="M699.7 250.4 845.4 336.8 845.4 342.0 699.7 255.6z" fill="#7a2a26" stroke="#7a2a26" stroke-opacity="1" stroke-width="0.5"/>
<path d="M845.4 336.8 872.7 329.8 872.7 335.0 845.4 342.0z" fill="#e36c68" stroke="#e36c68" stroke-opacity="1" stroke-width="0.5"/>
<path d="M699.7 250.4 727.0 243.4 872.7 329.8 845.4 336.8z" fill="#fbca88" stroke="#fbca88" stroke-opacity="1" stroke-width="0.5"/>
<path d="M718.2 248.2 715.2 249.0 857.9 333.6 860.9 332.8z" fill="#eb8474" stroke="#eb8474" stroke-opacity="1" stroke-width="0.5"/>
<path d="M824.0 314.5 829.2 313.2 825.8 311.1 820.6 312.5z" fill="#7cc0d8" stroke="#7cc0d8" stroke-opacity="1" stroke-width="0.5"/>
<path d="M699.7 250.4L727.0 243.4M842.3 311.8L872.7 329.8M872.7 329.8L845.4 336.8" fill="none"/>
<path d="M648.2 258.6 674.8 274.3 674.8 279.5 648.2 263.7z" fill="#7a2a26" stroke="#7a2a26" stroke-opacity="1" stroke-width="0.5"/>
<path d="M674.8 274.3 720.4 262.7 720.4 267.9 674.8 279.5z" fill="#e36c68" stroke="#e36c68" stroke-opacity="1" stroke-width="0.5"/>
<path d="M648.2 258.6 693.8 246.9 720.4 262.7 674.8 274.3z" fill="#fbca88" stroke="#fbca88" stroke-opacity="1" stroke-width="0.5"/>
<path d="M659.7 262.3 661.7 263.5 703.7 252.8 701.7 251.6z" fill="#eb8474" stroke="#eb8474" stroke-opacity="1" stroke-width="0.5"/>
<path d="M662.2 262.5 659.2 263.3 676.9 273.8 679.9 273.0z" fill="#eb8474" stroke="#eb8474" stroke-opacity="1" stroke-width="0.5"/>
<path d="M659.8 264.6 665.0 263.2 661.6 261.2 656.4 262.6z" fill="#7cc0d8" stroke="#7cc0d8" stroke-opacity="1" stroke-width="0.5"/>
<path d="M648.2 258.6L693.8 246.9M693.8 246.9L699.4 250.2M674.8 274.3L648.2 258.6" fill="none"/>
<path d="M656.6 234.7 659.8 236.7 659.8 264.5 656.6 262.6z" fill="#1c4690"/>
<path d="M659.8 236.7 664.8 235.4 664.8 263.2 659.8 264.5z" fill="#4a90e6"/>
<path d="M800.9 419.3 804.2 421.3 804.2 449.1 800.9 447.1z" fill="#1c4690"/>
<path d="M804.2 421.3 809.2 420.0 809.2 447.8 804.2 449.1z" fill="#4a90e6"/>
<path d="M856.9 339.0 860.2 341.0 860.2 368.8 856.9 366.9z" fill="#1c4690"/>
<path d="M860.2 341.0 865.2 339.7 865.2 367.5 860.2 368.8z" fill="#4a90e6"/>
<path d="M901.9 289.4 905.2 291.3 905.2 296.5 901.9 294.6z" fill="#1c4690"/>
<path d="M905.2 291.3 910.2 290.1 910.2 295.2 905.2 296.5z" fill="#4a90e6"/>
<path d="M901.9 289.4 906.9 288.1 910.2 290.1 905.2 291.3z" fill="#7cc0d8"/>
<path d="M764.8 331.9 768.1 333.9 768.1 361.7 764.8 359.7z" fill="#1c4690"/>
<path d="M768.1 333.9 773.1 332.6 773.1 360.4 768.1 361.7z" fill="#4a90e6"/>
<path d="M764.8 331.9 769.8 330.6 773.1 332.6 768.1 333.9z" fill="#7cc0d8"/>
<path d="M671.9 275.1 782.1 340.4 782.1 345.6 671.9 280.2z" fill="#7a2a26" stroke="#7a2a26" stroke-opacity="1" stroke-width="0.5"/>
<path d="M782.1 340.4 830.6 328.0 830.6 333.2 782.1 345.6z" fill="#e36c68" stroke="#e36c68" stroke-opacity="1" stroke-width="0.5"/>
<path d="M671.9 275.1 720.4 262.7 830.6 328.0 782.1 340.4z" fill="#fbca88" stroke="#fbca88" stroke-opacity="1" stroke-width="0.5"/>
<path d="M695.8 283.7 697.8 284.9 739.8 274.2 737.8 273.0z" fill="#eb8474" stroke="#eb8474" stroke-opacity="1" stroke-width="0.5"/>
<path d="M731.9 305.1 733.8 306.3 775.8 295.6 773.9 294.4z" fill="#eb8474" stroke="#eb8474" stroke-opacity="1" stroke-width="0.5"/>
<path d="M768.0 326.5 769.9 327.7 811.9 317.0 810.0 315.8z" fill="#eb8474" stroke="#eb8474" stroke-opacity="1" stroke-width="0.5"/>
<path d="M679.9 273.0 676.9 273.8 787.1 339.1 790.1 338.4z" fill="#eb8474" stroke="#eb8474" stroke-opacity="1" stroke-width="0.5"/>
<path d="M695.9 286.0 701.1 284.6 697.7 282.6 692.5 283.9z" fill="#7cc0d8" stroke="#7cc0d8" stroke-opacity="1" stroke-width="0.5"/>
<path d="M732.0 307.4 737.2 306.0 733.8 304.0 728.6 305.3z" fill="#7cc0d8" stroke="#7cc0d8" stroke-opacity="1" stroke-width="0.5"/>
<path d="M768.0 328.8 773.2 327.4 769.8 325.4 764.6 326.7z" fill="#7cc0d8" stroke="#7cc0d8" stroke-opacity="1" stroke-width="0.5"/>
<path d="M671.9 275.1L673.9 274.5M786.2 339.4L782.1 340.4M782.1 340.4L671.9 275.1" fill="none"/>
<path d="M692.6 256.1 695.9 258.1 695.9 285.9 692.6 284.0z" fill="#1c4690"/>
<path d="M695.9 258.1 700.9 256.8 700.9 284.6 695.9 285.9z" fill="#4a90e6"/>
<path d="M728.7 277.5 732.0 279.5 732.0 307.3 728.7 305.4z" fill="#1c4690"/>
<path d="M732.0 279.5 737.0 278.2 737.0 306.0 732.0 307.3z" fill="#4a90e6"/>
<path d="M786.1 372.4 800.9 381.1 800.9 386.3 786.1 377.6z" fill="#7a2a26" stroke="#7a2a26" stroke-opacity="1" stroke-width="0.5"/>
<path d="M800.9 381.1 845.4 369.8 845.4 375.0 800.9 386.3z" fill="#e36c68" stroke="#e36c68" stroke-opacity="1" stroke-width="0.5"/>
<path d="M786.1 372.4 830.6 361.0 845.4 369.8 800.9 381.1z" fill="#fbca88" stroke="#fbca88" stroke-opacity="1" stroke-width="0.5"/>
<path d="M790.1 371.4 787.1 372.1 801.9 380.9 804.9 380.1z" fill="#eb8474" stroke="#eb8474" stroke-opacity="1" stroke-width="0.5"/>
<path d="M845.4 369.8L800.9 381.1M800.9 381.1L786.1 372.4" fill="none"/>
<path d="M800.9 414.1 804.2 416.1 804.2 421.3 800.9 419.3z" fill="#1c4690"/>
<path d="M804.2 416.1 809.2 414.8 809.2 420.0 804.2 421.3z" fill="#4a90e6"/>
<path d="M800.9 414.1 805.9 412.9 809.2 414.8 804.2 416.1z" fill="#7cc0d8"/>
<path d="M856.9 333.9 860.2 335.8 860.2 341.0 856.9 339.0z" fill="#1c4690"/>
<path d="M860.2 335.8 865.2 334.5 865.2 339.7 860.2 341.0z" fill="#4a90e6"/>
<path d="M856.9 333.9 861.9 332.6 865.2 334.5 860.2 335.8z" fill="#7cc0d8"/>
<path d="M870.1 295.3 872.7 296.8 872.7 302.0 870.1 300.5z" fill="#7a2a26" stroke="#7a2a26" stroke-opacity="1" stroke-width="0.5"/>
<path d="M872.7 296.8 892.0 291.9 892.0 297.1 872.7 302.0z" fill="#e36c68" stroke="#e36c68" stroke-opacity="1" stroke-width="0.5"/>
<path d="M870.1 295.3 889.4 290.4 892.0 291.9 872.7 296.8z" fill="#fbca88" stroke="#fbca88" stroke-opacity="1" stroke-width="0.5"/>
<path d="M870.1 295.3L889.4 290.4M892.0 291.9L872.7 296.8" fill="none"/>
<path d="M699.7 217.4 845.4 303.8 845.4 309.0 699.7 222.6z" fill="#7a2a26" stroke="#7a2a26" stroke-opacity="1" stroke-width="0.5"/>
<path d="M845.4 303.8 872.7 296.8 872.7 302.0 845.4 309.0z" fill="#e36c68" stroke="#e36c68" stroke-opacity="1" stroke-width="0.5"/>
<path d="M699.7 217.4 727.0 210.4 872.7 296.8 845.4 303.8z" fill="#fbca88" stroke="#fbca88" stroke-opacity="1" stroke-width="0.5"/>
<path d="M701.7 218.6 703.7 219.8 731.0 212.8 729.0 211.6z" fill="#eb8474" stroke="#eb8474" stroke-opacity="1" stroke-width="0.5"/>
<path d="M737.8 240.0 739.8 241.2 767.1 234.2 765.1 233.0z" fill="#eb8474" stroke="#eb8474" stroke-opacity="1" stroke-width="0.5"/>
<path d="M773.9 261.4 775.8 262.6 803.1 255.6 801.2 254.4z" fill="#eb8474" stroke="#eb8474" stroke-opacity="1" stroke-width="0.5"/>
<path d="M810.0 282.8 811.9 284.0 839.2 277.0 837.3 275.8z" fill="#eb8474" stroke="#eb8474" stroke-opacity="1" stroke-width="0.5"/>
<path d="M718.2 215.2 715.2 216.0 857.9 300.6 860.9 299.8z" fill="#eb8474" stroke="#eb8474" stroke-opacity="1" stroke-width="0.5"/>
<path d="M715.8 217.3 721.0 216.0 717.6 213.9 712.4 215.3z" fill="#7cc0d8" stroke="#7cc0d8" stroke-opacity="1" stroke-width="0.5"/>
<path d="M751.9 238.7 757.1 237.4 753.7 235.3 748.5 236.7z" fill="#7cc0d8" stroke="#7cc0d8" stroke-opacity="1" stroke-width="0.5"/>
<path d="M788.0 260.1 793.2 258.8 789.8 256.7 784.6 258.1z" fill="#7cc0d8" stroke="#7cc0d8" stroke-opacity="1" stroke-width="0.5"/>
<path d="M824.0 281.5 829.2 280.2 825.8 278.1 820.6 279.5z" fill="#7cc0d8" stroke="#7cc0d8" stroke-opacity="1" stroke-width="0.5"/>
<path d="M861.9 299.5 856.7 300.9 856.8 300.9 862.0 299.6z" fill="#7cc0d8" stroke="#7cc0d8" stroke-opacity="1" stroke-width="0.5"/>
<path d="M699.7 217.4L727.0 210.4M842.3 278.8L872.7 296.8M872.7 296.8L845.4 303.8" fill="none"/>
<path d="M648.2 225.6 674.8 241.3 674.8 246.5 648.2 230.7z" fill="#7a2a26" stroke="#7a2a26" stroke-opacity="1" stroke-width="0.5"/>
<path d="M648.2 225.6 693.8 213.9 720.4 229.7 674.8 241.3z" fill="#fbca88" stroke="#fbca88" stroke-opacity="1" stroke-width="0.5"/>
<path d="M659.7 229.3 661.7 230.5 703.7 219.8 701.7 218.6z" fill="#eb8474" stroke="#eb8474" stroke-opacity="1" stroke-width="0.5"/>
<path d="M662.2 229.5 659.2 230.3 676.9 240.8 679.9 240.0z" fill="#eb8474" stroke="#eb8474" stroke-opacity="1" stroke-width="0.5"/>
<path d="M659.8 231.6 665.0 230.2 661.6 228.2 656.4 229.6z" fill="#7cc0d8" stroke="#7cc0d8" stroke-opacity="1" stroke-width="0.5"/>
<path d="M648.2 225.6L693.8 213.9M693.8 213.9L699.4 217.2M674.8 241.3L648.2 225.6" fill="none"/>
<path d="M748.1 206.3 770.7 219.7 770.7 247.8 748.1 234.4z" fill="#2e6a2f"/>
<path d="M770.7 219.7 774.2 218.9 774.2 246.9 770.7 247.8z" fill="#7de07a"/>
<path d="M748.1 206.3 751.6 205.4 774.2 218.9 770.7 219.7z" fill="#a8f0a2"/>
<path d="M745.3 204.3 770.2 219.1 770.2 220.7 745.3 205.9z" fill="#7a2a26"/>
<path d="M770.2 219.1 823.2 205.5 823.2 207.2 770.2 220.7z" fill="#d9a46a"/>
<path d="M745.3 204.3 798.3 190.8 823.2 205.5 770.2 219.1z" fill="#fbca88"/>
<path d="M800.9 386.3 804.2 388.3 804.2 416.1 800.9 414.1z" fill="#1c4690"/>
<path d="M804.2 388.3 809.2 387.0 809.2 414.8 804.2 416.1z" fill="#4a90e6"/>
<path d="M856.9 306.0 860.2 308.0 860.2 335.8 856.9 333.9z" fill="#1c4690"/>
<path d="M860.2 308.0 865.2 306.7 865.2 334.5 860.2 335.8z" fill="#4a90e6"/>
<path d="M764.8 298.9 768.1 300.9 768.1 328.7 764.8 326.7z" fill="#1c4690"/>
<path d="M768.1 300.9 773.1 299.6 773.1 327.4 768.1 328.7z" fill="#4a90e6"/>
<path d="M764.8 298.9 769.8 297.6 773.1 299.6 768.1 300.9z" fill="#7cc0d8"/>
<path d="M671.9 242.1 782.1 307.4 782.1 312.6 671.9 247.2z" fill="#7a2a26" stroke="#7a2a26" stroke-opacity="1" stroke-width="0.5"/>
<path d="M782.1 307.4 830.6 295.0 830.6 300.2 782.1 312.6z" fill="#e36c68" stroke="#e36c68" stroke-opacity="1" stroke-width="0.5"/>
<path d="M671.9 242.1 720.4 229.7 830.6 295.0 782.1 307.4z" fill="#fbca88" stroke="#fbca88" stroke-opacity="1" stroke-width="0.5"/>
<path d="M695.8 250.7 697.8 251.9 739.8 241.2 737.8 240.0z" fill="#eb8474" stroke="#eb8474" stroke-opacity="1" stroke-width="0.5"/>
<path d="M731.9 272.1 733.8 273.3 775.8 262.6 773.9 261.4z" fill="#eb8474" stroke="#eb8474" stroke-opacity="1" stroke-width="0.5"/>
<path d="M768.0 293.5 769.9 294.7 811.9 284.0 810.0 282.8z" fill="#eb8474" stroke="#eb8474" stroke-opacity="1" stroke-width="0.5"/>
<path d="M679.9 240.0 676.9 240.8 787.1 306.1 790.1 305.4z" fill="#eb8474" stroke="#eb8474" stroke-opacity="1" stroke-width="0.5"/>
<path d="M695.9 253.0 701.1 251.6 697.7 249.6 692.5 250.9z" fill="#7cc0d8" stroke="#7cc0d8" stroke-opacity="1" stroke-width="0.5"/>
<path d="M732.0 274.4 737.2 273.0 733.8 271.0 728.6 272.3z" fill="#7cc0d8" stroke="#7cc0d8" stroke-opacity="1" stroke-width="0.5"/>
<path d="M768.0 295.8 773.2 294.4 769.8 292.4 764.6 293.7z" fill="#7cc0d8" stroke="#7cc0d8" stroke-opacity="1" stroke-width="0.5"/>
<path d="M671.9 242.1L673.9 241.5M786.2 306.4L782.1 307.4M782.1 307.4L671.9 242.1" fill="none"/>
<path d="M786.1 339.4 800.9 348.1 800.9 353.3 786.1 344.6z" fill="#7a2a26" stroke="#7a2a26" stroke-opacity="1" stroke-width="0.5"/>
<path d="M800.9 348.1 845.4 336.8 845.4 342.0 800.9 353.3z" fill="#e36c68" stroke="#e36c68" stroke-opacity="1" stroke-width="0.5"/>
<path d="M786.1 339.4 830.6 328.0 845.4 336.8 800.9 348.1z" fill="#fbca88" stroke="#fbca88" stroke-opacity="1" stroke-width="0.5"/>
<path d="M790.1 338.4 787.1 339.1 801.9 347.9 804.9 347.1z" fill="#eb8474" stroke="#eb8474" stroke-opacity="1" stroke-width="0.5"/>
<path d="M805.9 346.8 800.8 348.1 800.9 348.1 806.0 346.8z" fill="#7cc0d8" stroke="#7cc0d8" stroke-opacity="1" stroke-width="0.5"/>
<path d="M845.4 336.8L800.9 348.1M800.9 348.1L786.1 339.4" fill="none"/>
<path d="M800.9 381.1 804.2 383.1 804.2 388.3 800.9 386.3z" fill="#1c4690"/>
<path d="M804.2 383.1 809.2 381.8 809.2 387.0 804.2 388.3z" fill="#4a90e6"/>
<path d="M800.9 381.1 805.9 379.9 809.2 381.8 804.2 383.1z" fill="#7cc0d8"/>
<path d="M856.9 300.9 860.2 302.8 860.2 308.0 856.9 306.0z" fill="#1c4690"/>
<path d="M860.2 302.8 865.2 301.5 865.2 306.7 860.2 308.0z" fill="#4a90e6"/>
<path d="M856.9 300.9 861.9 299.6 865.2 301.5 860.2 302.8z" fill="#7cc0d8"/>
<path d="M800.9 353.3 804.2 355.3 804.2 383.1 800.9 381.1z" fill="#1c4690"/>
<path d="M804.2 355.3 809.2 354.0 809.2 381.8 804.2 383.1z" fill="#4a90e6"/>
<path d="M800.9 353.3 805.9 352.0 809.2 354.0 804.2 355.3z" fill="#7cc0d8"/>
<path d="M786.1 306.4 800.9 315.1 800.9 320.3 786.1 311.6z" fill="#7a2a26" stroke="#7a2a26" stroke-opacity="1" stroke-width="0.5"/>
<path d="M800.9 315.1 845.4 303.8 845.4 309.0 800.9 320.3z" fill="#e36c68" stroke="#e36c68" stroke-opacity="1" stroke-width="0.5"/>
<path d="M786.1 306.4 830.6 295.0 845.4 303.8 800.9 315.1z" fill="#fbca88" stroke="#fbca88" stroke-opacity="1" stroke-width="0.5"/>
<path d="M790.1 305.4 787.1 306.1 801.9 314.9 804.9 314.1z" fill="#eb8474" stroke="#eb8474" stroke-opacity="1" stroke-width="0.5"/>
<path d="M805.9 313.8 800.8 315.1 800.9 315.1 806.0 313.8z" fill="#7cc0d8" stroke="#7cc0d8" stroke-opacity="1" stroke-width="0.5"/>
<path d="M845.4 303.8L800.9 315.1M800.9 315.1L786.1 306.4" fill="none"/>
<path d="M800.9 348.1 804.2 350.1 804.2 355.3 800.9 353.3z" fill="#1c4690"/>
<path d="M804.2 350.1 809.2 348.8 809.2 354.0 804.2 355.3z" fill="#4a90e6"/>
<path d="M800.9 348.1 805.9 346.9 809.2 348.8 804.2 350.1z" fill="#7cc0d8"/>
<path d="M800.9 320.3 804.2 322.3 804.2 350.1 800.9 348.1z" fill="#1c4690"/>
<path d="M804.2 322.3 809.2 321.0 809.2 348.8 804.2 350.1z" fill="#4a90e6"/>
<path d="M800.9 320.3 805.9 319.0 809.2 321.0 804.2 322.3z" fill="#7cc0d8"/>
<path d="M800.9 315.1 804.2 317.1 804.2 322.3 800.9 320.3z" fill="#1c4690"/>
<path d="M804.2 317.1 809.2 315.8 809.2 321.0 804.2 322.3z" fill="#4a90e6"/>
<path d="M800.9 315.1 805.9 313.9 809.2 315.8 804.2 317.1z" fill="#7cc0d8"/>
</g>
</g>
<rect x="137.00" y="96.30" width="1135.00" height="0.90" fill="#1c1f26" />
<rect x="137.00" y="86.00" width="63.00" height="10.50" fill="#4a5062" />
<path d="M140 92l3.5-3.5 3.5 3.5v3h-7z" fill="#8a8f98"/>
<text x="149.50" y="93.96" font-size="6.82" fill="#aab0ba" stroke="#aab0ba" stroke-width="0.12" textLength="11.00" lengthAdjust="spacingAndGlyphs">{3D}</text>
<rect x="200.00" y="86.00" width="107.50" height="10.50" fill="#1e2129" />
<path d="M203.5 92l4-4 4 4v3.5h-8z" fill="#e8eaee"/>
<text x="213.80" y="94.16" font-size="6.82" fill="#ffffff" stroke="#ffffff" stroke-width="0.12" font-weight="bold" textLength="80.70" lengthAdjust="spacingAndGlyphs">3D - Elementos estructurales</text>
<path d="M299 89l4.5 4.5M303.5 89l-4.5 4.5" stroke="#e0e2e6" stroke-width="0.9"/>
<rect x="1272.00" y="86.00" width="8.00" height="10.50" fill="#3f4556" />
<path d="M1273.5 90.5h5l-2.5 2.5z" fill="#c8ccd2"/>
<rect x="1272.00" y="97.00" width="8.00" height="601.00" fill="#2a2e38" />
<path d="M1273.5 103.5l2.5-2.5 2.5 2.5" stroke="#c8ccd2" stroke-width="0.8" fill="none"/>
<path d="M1273.5 690.5l2.5 2.5 2.5-2.5" stroke="#c8ccd2" stroke-width="0.8" fill="none"/>
<rect x="1273.50" y="395.00" width="5.00" height="6.00" fill="#5a606c" />
<rect x="137.00" y="698.40" width="1135.00" height="9.40" fill="#30343f" />
<rect x="137.00" y="698.40" width="100.00" height="9.40" fill="#2b2f39" />
<text x="149.00" y="705.58" font-size="6.60" fill="#e0e2e6" stroke="#e0e2e6" stroke-width="0.12" textLength="17.00" lengthAdjust="spacingAndGlyphs">1 : 200</text>
<rect x="178.5" y="700" width="8" height="6.5" fill="#b8bcc4"/><rect x="179.5" y="701" width="6" height="4.5" fill="#8a8f98"/>
<path d="M191.5 701.5l3-1.5 4.5 1v5l-3 1.2-4.5-1z" fill="#4f9ee6"/><path d="M191.5 701.5l4.5 1 3-1.5" stroke="#cfe4f8" stroke-width="0.5" fill="none"/>
<circle cx="207.5" cy="702.3" r="2.3" fill="#e8c860"/><path d="M204.8 699.5l-1-1M210.2 699.5l1-1M203.5 702.3h-1.2" stroke="#e8c860" stroke-width="0.6"/><circle cx="211" cy="705" r="1.6" fill="#7fd0f0"/>
<circle cx="220.5" cy="702.5" r="2.8" fill="#e8eaee"/><circle cx="224" cy="705" r="1.6" fill="#7fd0f0"/>
<path d="M231.5 701l5 .2 1.5 1.8-2.5 2.5z" fill="#e0e2e6"/><circle cx="238" cy="705" r="1.6" fill="#7fd0f0"/>
<path d="M244.5 700.5v5.5h6M246 702h5.5v5" stroke="#d8dbe0" stroke-width="0.8" fill="none"/><path d="M249.5 704.5l3 2.5M252.5 704.5l-3 2.5" stroke="#e04848" stroke-width="0.8"/>
<path d="M257.5 700.5v5.5h6M259 702h5.5v5" stroke="#d8dbe0" stroke-width="0.8" fill="none"/><circle cx="264" cy="705" r="1.6" fill="#7fd0f0"/>
<path d="M269.5 703.5l3.5-3.5 3.5 3.5v3h-7z" fill="#e0e2e6"/><circle cx="276" cy="705.5" r="1.5" fill="#7fd0f0"/>
<circle cx="285" cy="704" r="1.8" fill="none" stroke="#b8bcc4" stroke-width="0.8"/><circle cx="289.5" cy="704" r="1.8" fill="none" stroke="#b8bcc4" stroke-width="0.8"/>
<circle cx="299.5" cy="702.5" r="2.3" fill="#80d8f8"/><rect x="298.5" y="704.8" width="2" height="1.8" fill="#c8ccd2"/>
<rect x="309" y="700.5" width="7" height="6" fill="#c8ccd2"/><rect x="310" y="701.5" width="3" height="2" fill="#5a606c"/>
<rect x="321.5" y="700.5" width="7.5" height="6.5" fill="#b07060"/><path d="M322 701l6.5 5.5" stroke="#e0e2e6" stroke-width="0.6"/>
<circle cx="338" cy="704" r="2.8" fill="#aac8e8"/><circle cx="340.5" cy="702.5" r="1.6" fill="#e8eaee"/>
<path d="M347.5 700.5h6v5M349 702v5h6" stroke="#d0d3d8" stroke-width="0.8" fill="none"/><circle cx="354" cy="706" r="1.5" fill="#7fd0f0"/>
<path d="M363.5 700.5l-2 2.5 2 2.5" stroke="#8a8f98" stroke-width="0.8" fill="none"/>
<rect x="811.00" y="701.50" width="8.50" height="3.50" fill="#9aa0aa" rx="1.5"/>
<path d="M1267 700.5l2 2.5-2 2.5" stroke="#c8ccd2" stroke-width="0.8" fill="none"/>
<rect x="1272.00" y="698.40" width="8.00" height="9.40" fill="#2a2e38" />
<rect x="1169.00" y="110.30" width="17.50" height="6.40" fill="#8a8a8a" rx="3.2"/>
<circle cx="1172.5" cy="113.5" r="2.5" fill="#ffffff"/>
<text x="1189.00" y="112.58" font-size="6.60" fill="#808080" textLength="52.00" lengthAdjust="spacingAndGlyphs">Gráficos acelerados</text>
<text x="1189.00" y="119.18" font-size="6.60" fill="#808080" font-style="italic" textLength="62.00" lengthAdjust="spacingAndGlyphs">Vista preliminar técnica</text>
<ellipse cx="1226.7" cy="159.2" rx="33" ry="13.3" fill="none" stroke="#dadada" stroke-width="1.3"/>
<ellipse cx="1226.7" cy="159.6" rx="25" ry="9.3" fill="none" stroke="#e6e6e6" stroke-width="0.9"/>
<ellipse cx="1228" cy="159" rx="16" ry="5" fill="#ededed"/>
<path d="M1210 130.4L1229.2 126.2L1243.3 132.5L1222.5 137.5Z" fill="#f2f2f2" stroke="#9a9a9a" stroke-width="0.6" stroke-linejoin="round"/>
<path d="M1210 130.4L1222.5 137.5L1222.5 160.8L1210 151.7Z" fill="#e9e9e9" stroke="#9a9a9a" stroke-width="0.6" stroke-linejoin="round"/>
<path d="M1222.5 137.5L1243.3 132.5L1242.9 155L1222.5 160.8Z" fill="#eeeeee" stroke="#9a9a9a" stroke-width="0.6" stroke-linejoin="round"/>
<text transform="matrix(1 -0.24 0 1 1225 150)" font-size="3.6" fill="#707070" textLength="15.5" lengthAdjust="spacingAndGlyphs">FRONTAL</text>
<text transform="matrix(1 0.57 0 1 1211 142.5)" font-size="3.2" fill="#7a7a7a" textLength="10.5" lengthAdjust="spacingAndGlyphs">IZQUIER</text>
<text transform="matrix(1 -0.2 0.6 0.45 1217.5 133.5)" font-size="3" fill="#8a8a8a" textLength="15" lengthAdjust="spacingAndGlyphs">SUPERIOR</text>
<path d="M1196.5 163.5l3-1.5 3 1.5-3 1.5z" fill="none" stroke="#c4c4c4" stroke-width="0.7"/>
<path d="M1242.5 168.5l3-1.5 3 1.5-3 1.5z" fill="none" stroke="#c4c4c4" stroke-width="0.7"/>
<path d="M1246 147.5h4" stroke="#c8c8c8" stroke-width="0.8"/>
<rect x="1253.50" y="183.50" width="16.50" height="57.50" fill="#fafafa" rx="2" stroke="#c8c8c8" stroke-width="0.8"/>
<circle cx="1262" cy="198.5" r="4.3" fill="none" stroke="#9a9a9a" stroke-width="1.2"/><circle cx="1262" cy="198.5" r="2" fill="none" stroke="#9a9a9a" stroke-width="0.8"/>
<rect x="1258.00" y="216.50" width="6.00" height="5.00" fill="#a8c878" />
<circle cx="1263.5" cy="221.5" r="2" fill="none" stroke="#707070" stroke-width="0.7"/>
<rect x="1255.00" y="211.50" width="14.00" height="0.60" fill="#d0d0d0" />
<circle cx="1267.3" cy="186.5" r="1.3" fill="none" stroke="#9a9a9a" stroke-width="0.6"/><circle cx="1267.3" cy="238" r="1.3" fill="none" stroke="#9a9a9a" stroke-width="0.6"/>
<path d="M1261 208.3h2l-1 1.2z" fill="#707070"/><path d="M1261 229.3h2l-1 1.2z" fill="#707070"/>
<path d="M998.5 281.5v9l2.2-2 1.6 3.4 1.2-.6-1.6-3.3h3z" fill="#ffffff" stroke="#505050" stroke-width="0.7"/></svg>
</body></html>
